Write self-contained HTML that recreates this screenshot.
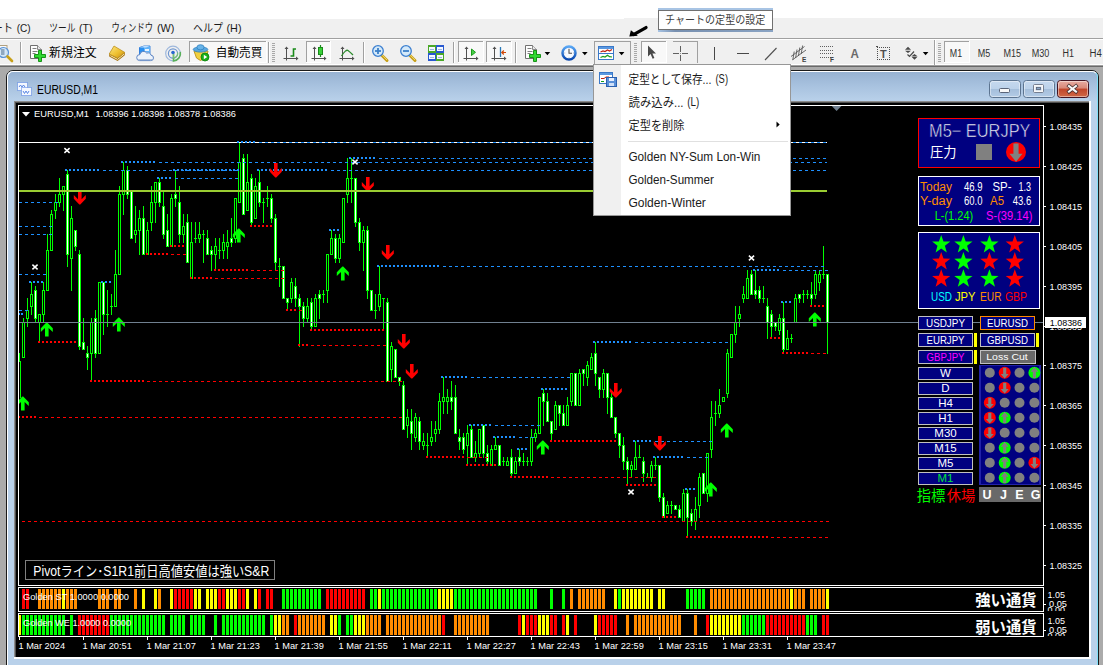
<!DOCTYPE html>
<html><head><meta charset="utf-8"><title>MT4</title>
<style>
html,body{margin:0;padding:0;background:#fff;}
body{width:1103px;height:665px;overflow:hidden;position:relative;font-family:"Liberation Sans",sans-serif;}
.a{position:absolute;}
svg{position:absolute;left:0;top:0;overflow:visible;}
.t{position:absolute;white-space:nowrap;line-height:1;}
</style></head>
<body>
<div class="a" style="left:0;top:19px;width:1103px;height:19px;background:#f0f0f0"></div>
<div class="a" style="left:624px;top:18px;width:479px;height:1px;background:#f0f0f0"></div>
<div class="a" style="left:0;top:38px;width:1103px;height:1px;background:#a0a0a0"></div>
<div class="a" style="left:0;top:39px;width:1103px;height:1px;background:#fff"></div>
<div class="a" style="left:0;top:40px;width:1103px;height:24px;background:#f0f0f0"></div>
<div class="a" style="left:0;top:64px;width:1103px;height:1px;background:#fff"></div>
<div class="a" style="left:0;top:65px;width:1103px;height:1px;background:#a0a0a0"></div>
<div class="a" style="left:0;top:66px;width:1103px;height:1px;background:#696969"></div>
<div class="a" style="left:0;top:67px;width:1103px;height:598px;background:#ababab"></div>
<div class="a" style="left:6px;top:70px;width:1093px;height:610px;box-sizing:border-box;border:1px solid #1a1a1a;border-radius:7px 7px 0 0;background:#b9d1ea"></div>
<div class="a" style="left:7px;top:71px;width:1091px;height:608px;box-sizing:border-box;border:1px solid #fff;border-right-color:#7fe0f8;border-radius:6px 6px 0 0;background:linear-gradient(#97b2d2 0px,#a8c2df 14px,#b9d1ea 29px,#b9d1ea 100%)"></div>
<div class="a" style="left:14px;top:101px;width:1077px;height:558px;background:#fff"></div>
<div class="a" style="left:14px;top:101px;width:1075px;height:556px;background:#8c8c8c"></div>
<div class="a" style="left:15px;top:102px;width:1074px;height:555px;background:#505050"></div>
<div class="a" style="left:16px;top:103px;width:1073px;height:554px;background:#000"></div>
<svg width="1103" height="665" viewBox="0 0 1103 665" font-family="Liberation Sans, sans-serif" shape-rendering="crispEdges"><rect x="18" y="105" width="1026" height="1" fill="#fff"/>
<rect x="18" y="585" width="1026" height="1" fill="#fff"/>
<rect x="18" y="105" width="1" height="481" fill="#fff"/>
<rect x="1043" y="105" width="1" height="481" fill="#fff"/>
<rect x="18" y="587" width="1026" height="1" fill="#fff"/>
<rect x="18" y="611" width="1026" height="1" fill="#fff"/>
<rect x="18" y="587" width="1" height="25" fill="#fff"/>
<rect x="1043" y="587" width="1" height="25" fill="#fff"/>
<rect x="18" y="613" width="1026" height="1" fill="#fff"/>
<rect x="18" y="636" width="1026" height="1" fill="#fff"/>
<rect x="18" y="613" width="1" height="24" fill="#fff"/>
<rect x="1043" y="613" width="1" height="24" fill="#fff"/>
<rect x="1044" y="126" width="2" height="1" fill="#fff"/>
<text x="1049.5" y="129.8" font-size="9.4" fill="#fff" textLength="32.6" lengthAdjust="spacingAndGlyphs">1.08435</text>
<rect x="1044" y="166" width="2" height="1" fill="#fff"/>
<text x="1049.5" y="169.8" font-size="9.4" fill="#fff" textLength="32.6" lengthAdjust="spacingAndGlyphs">1.08425</text>
<rect x="1044" y="206" width="2" height="1" fill="#fff"/>
<text x="1049.5" y="209.8" font-size="9.4" fill="#fff" textLength="32.6" lengthAdjust="spacingAndGlyphs">1.08415</text>
<rect x="1044" y="246" width="2" height="1" fill="#fff"/>
<text x="1049.5" y="249.8" font-size="9.4" fill="#fff" textLength="32.6" lengthAdjust="spacingAndGlyphs">1.08405</text>
<rect x="1044" y="286" width="2" height="1" fill="#fff"/>
<text x="1049.5" y="289.8" font-size="9.4" fill="#fff" textLength="32.6" lengthAdjust="spacingAndGlyphs">1.08395</text>
<rect x="1044" y="326" width="2" height="1" fill="#fff"/>
<text x="1049.5" y="329.8" font-size="9.4" fill="#fff" textLength="32.6" lengthAdjust="spacingAndGlyphs">1.08385</text>
<rect x="1044" y="365" width="2" height="1" fill="#fff"/>
<text x="1049.5" y="368.8" font-size="9.4" fill="#fff" textLength="32.6" lengthAdjust="spacingAndGlyphs">1.08375</text>
<rect x="1044" y="405" width="2" height="1" fill="#fff"/>
<text x="1049.5" y="408.8" font-size="9.4" fill="#fff" textLength="32.6" lengthAdjust="spacingAndGlyphs">1.08365</text>
<rect x="1044" y="445" width="2" height="1" fill="#fff"/>
<text x="1049.5" y="448.8" font-size="9.4" fill="#fff" textLength="32.6" lengthAdjust="spacingAndGlyphs">1.08355</text>
<rect x="1044" y="485" width="2" height="1" fill="#fff"/>
<text x="1049.5" y="488.8" font-size="9.4" fill="#fff" textLength="32.6" lengthAdjust="spacingAndGlyphs">1.08345</text>
<rect x="1044" y="525" width="2" height="1" fill="#fff"/>
<text x="1049.5" y="528.8" font-size="9.4" fill="#fff" textLength="32.6" lengthAdjust="spacingAndGlyphs">1.08335</text>
<rect x="1044" y="565" width="2" height="1" fill="#fff"/>
<text x="1049.5" y="568.8" font-size="9.4" fill="#fff" textLength="32.6" lengthAdjust="spacingAndGlyphs">1.08325</text>
<clipPath id="cs1"><rect x="1044" y="588" width="44" height="23"/></clipPath><clipPath id="cs2"><rect x="1044" y="613" width="44" height="23"/></clipPath>
<rect x="1044" y="604" width="2" height="1" fill="#fff"/>
<text x="1047.5" y="598" font-size="9" fill="#fff" textLength="17.5" lengthAdjust="spacingAndGlyphs">1.05</text>
<text x="1049" y="607" font-size="9" fill="#fff" textLength="18" lengthAdjust="spacingAndGlyphs">0.05</text>
<text x="1047.5" y="613" font-size="9" fill="#fff" textLength="17.5" lengthAdjust="spacingAndGlyphs" clip-path="url(#cs1)">0.00</text>
<rect x="1044" y="630" width="2" height="1" fill="#fff"/>
<text x="1047.5" y="624" font-size="9" fill="#fff" textLength="17.5" lengthAdjust="spacingAndGlyphs">1.05</text>
<text x="1049" y="633" font-size="9" fill="#fff" textLength="18" lengthAdjust="spacingAndGlyphs">0.05</text>
<text x="1047.5" y="639" font-size="9" fill="#fff" textLength="17.5" lengthAdjust="spacingAndGlyphs" clip-path="url(#cs2)">0.00</text>
<rect x="19" y="637" width="1" height="3" fill="#fff"/>
<text x="18.5" y="649" font-size="9.4" fill="#fff" textLength="46.5" lengthAdjust="spacingAndGlyphs">1 Mar 2024</text>
<rect x="83" y="637" width="1" height="3" fill="#fff"/>
<text x="82.5" y="649" font-size="9.4" fill="#fff" textLength="49.3" lengthAdjust="spacingAndGlyphs">1 Mar 20:51</text>
<rect x="147" y="637" width="1" height="3" fill="#fff"/>
<text x="146.5" y="649" font-size="9.4" fill="#fff" textLength="49.3" lengthAdjust="spacingAndGlyphs">1 Mar 21:07</text>
<rect x="211" y="637" width="1" height="3" fill="#fff"/>
<text x="210.5" y="649" font-size="9.4" fill="#fff" textLength="49.3" lengthAdjust="spacingAndGlyphs">1 Mar 21:23</text>
<rect x="275" y="637" width="1" height="3" fill="#fff"/>
<text x="274.5" y="649" font-size="9.4" fill="#fff" textLength="49.3" lengthAdjust="spacingAndGlyphs">1 Mar 21:39</text>
<rect x="339" y="637" width="1" height="3" fill="#fff"/>
<text x="338.5" y="649" font-size="9.4" fill="#fff" textLength="49.3" lengthAdjust="spacingAndGlyphs">1 Mar 21:55</text>
<rect x="403" y="637" width="1" height="3" fill="#fff"/>
<text x="402.5" y="649" font-size="9.4" fill="#fff" textLength="49.3" lengthAdjust="spacingAndGlyphs">1 Mar 22:11</text>
<rect x="467" y="637" width="1" height="3" fill="#fff"/>
<text x="466.5" y="649" font-size="9.4" fill="#fff" textLength="49.3" lengthAdjust="spacingAndGlyphs">1 Mar 22:27</text>
<rect x="531" y="637" width="1" height="3" fill="#fff"/>
<text x="530.5" y="649" font-size="9.4" fill="#fff" textLength="49.3" lengthAdjust="spacingAndGlyphs">1 Mar 22:43</text>
<rect x="595" y="637" width="1" height="3" fill="#fff"/>
<text x="594.5" y="649" font-size="9.4" fill="#fff" textLength="49.3" lengthAdjust="spacingAndGlyphs">1 Mar 22:59</text>
<rect x="659" y="637" width="1" height="3" fill="#fff"/>
<text x="658.5" y="649" font-size="9.4" fill="#fff" textLength="49.3" lengthAdjust="spacingAndGlyphs">1 Mar 23:15</text>
<rect x="723" y="637" width="1" height="3" fill="#fff"/>
<text x="722.5" y="649" font-size="9.4" fill="#fff" textLength="49.3" lengthAdjust="spacingAndGlyphs">1 Mar 23:31</text>
<rect x="787" y="637" width="1" height="3" fill="#fff"/>
<text x="786.5" y="649" font-size="9.4" fill="#fff" textLength="49.3" lengthAdjust="spacingAndGlyphs">1 Mar 23:47</text>
<rect x="23" y="318" width="1" height="40" fill="#00ff00"/>
<rect x="22" y="322" width="3" height="36" fill="#00ff00"/>
<rect x="23" y="323" width="1" height="34" fill="#000"/>
<rect x="27" y="298" width="1" height="29" fill="#00ff00"/>
<rect x="26" y="310" width="3" height="9" fill="#00ff00"/>
<rect x="27" y="311" width="1" height="7" fill="#000"/>
<rect x="31" y="282" width="1" height="33" fill="#00ff00"/>
<rect x="30" y="294" width="3" height="13" fill="#00ff00"/>
<rect x="31" y="295" width="1" height="11" fill="#000"/>
<rect x="35" y="286" width="1" height="37" fill="#00ff00"/>
<rect x="34" y="290" width="3" height="29" fill="#00ff00"/>
<rect x="35" y="291" width="1" height="27" fill="#fff"/>
<rect x="39" y="314" width="1" height="29" fill="#00ff00"/>
<rect x="38" y="314" width="3" height="9" fill="#00ff00"/>
<rect x="39" y="315" width="1" height="7" fill="#000"/>
<rect x="43" y="282" width="1" height="41" fill="#00ff00"/>
<rect x="42" y="290" width="3" height="25" fill="#00ff00"/>
<rect x="43" y="291" width="1" height="23" fill="#000"/>
<rect x="47" y="234" width="1" height="57" fill="#00ff00"/>
<rect x="46" y="250" width="3" height="41" fill="#00ff00"/>
<rect x="47" y="251" width="1" height="39" fill="#000"/>
<rect x="51" y="210" width="1" height="41" fill="#00ff00"/>
<rect x="50" y="214" width="3" height="37" fill="#00ff00"/>
<rect x="51" y="215" width="1" height="35" fill="#000"/>
<rect x="55" y="194" width="1" height="25" fill="#00ff00"/>
<rect x="54" y="202" width="3" height="9" fill="#00ff00"/>
<rect x="55" y="203" width="1" height="7" fill="#000"/>
<rect x="59" y="178" width="1" height="29" fill="#00ff00"/>
<rect x="58" y="194" width="3" height="9" fill="#00ff00"/>
<rect x="59" y="195" width="1" height="7" fill="#000"/>
<rect x="63" y="186" width="1" height="25" fill="#00ff00"/>
<rect x="62" y="186" width="3" height="9" fill="#00ff00"/>
<rect x="63" y="187" width="1" height="7" fill="#000"/>
<rect x="67" y="170" width="1" height="97" fill="#00ff00"/>
<rect x="66" y="174" width="3" height="81" fill="#00ff00"/>
<rect x="67" y="175" width="1" height="79" fill="#fff"/>
<rect x="71" y="206" width="1" height="85" fill="#00ff00"/>
<rect x="70" y="218" width="3" height="41" fill="#00ff00"/>
<rect x="71" y="219" width="1" height="39" fill="#000"/>
<rect x="75" y="230" width="1" height="21" fill="#00ff00"/>
<rect x="74" y="230" width="3" height="17" fill="#00ff00"/>
<rect x="75" y="231" width="1" height="15" fill="#fff"/>
<rect x="79" y="250" width="1" height="100" fill="#00ff00"/>
<rect x="78" y="254" width="3" height="93" fill="#00ff00"/>
<rect x="79" y="255" width="1" height="91" fill="#fff"/>
<rect x="83" y="318" width="1" height="32" fill="#00ff00"/>
<rect x="82" y="342" width="3" height="8" fill="#00ff00"/>
<rect x="83" y="343" width="1" height="6" fill="#fff"/>
<rect x="87" y="346" width="1" height="24" fill="#00ff00"/>
<rect x="86" y="353" width="3" height="5" fill="#00ff00"/>
<rect x="87" y="354" width="1" height="3" fill="#fff"/>
<rect x="91" y="318" width="1" height="64" fill="#00ff00"/>
<rect x="90" y="322" width="3" height="32" fill="#00ff00"/>
<rect x="91" y="323" width="1" height="30" fill="#000"/>
<rect x="95" y="310" width="1" height="48" fill="#00ff00"/>
<rect x="94" y="318" width="3" height="36" fill="#00ff00"/>
<rect x="95" y="319" width="1" height="34" fill="#fff"/>
<rect x="99" y="282" width="1" height="72" fill="#00ff00"/>
<rect x="98" y="282" width="3" height="72" fill="#00ff00"/>
<rect x="99" y="283" width="1" height="70" fill="#000"/>
<rect x="103" y="282" width="1" height="53" fill="#00ff00"/>
<rect x="102" y="282" width="3" height="33" fill="#00ff00"/>
<rect x="103" y="283" width="1" height="31" fill="#fff"/>
<rect x="107" y="290" width="1" height="37" fill="#00ff00"/>
<rect x="106" y="314" width="3" height="1" fill="#00ff00"/>
<rect x="111" y="294" width="1" height="21" fill="#00ff00"/>
<rect x="110" y="306" width="3" height="1" fill="#00ff00"/>
<rect x="115" y="250" width="1" height="57" fill="#00ff00"/>
<rect x="114" y="274" width="3" height="33" fill="#00ff00"/>
<rect x="115" y="275" width="1" height="31" fill="#000"/>
<rect x="119" y="186" width="1" height="89" fill="#00ff00"/>
<rect x="118" y="194" width="3" height="81" fill="#00ff00"/>
<rect x="119" y="195" width="1" height="79" fill="#000"/>
<rect x="123" y="162" width="1" height="53" fill="#00ff00"/>
<rect x="122" y="170" width="3" height="25" fill="#00ff00"/>
<rect x="123" y="171" width="1" height="23" fill="#000"/>
<rect x="127" y="166" width="1" height="33" fill="#00ff00"/>
<rect x="126" y="170" width="3" height="25" fill="#00ff00"/>
<rect x="127" y="171" width="1" height="23" fill="#fff"/>
<rect x="131" y="190" width="1" height="49" fill="#00ff00"/>
<rect x="130" y="190" width="3" height="49" fill="#00ff00"/>
<rect x="131" y="191" width="1" height="47" fill="#fff"/>
<rect x="135" y="206" width="1" height="37" fill="#00ff00"/>
<rect x="134" y="230" width="3" height="5" fill="#00ff00"/>
<rect x="135" y="231" width="1" height="3" fill="#000"/>
<rect x="139" y="210" width="1" height="45" fill="#00ff00"/>
<rect x="138" y="218" width="3" height="13" fill="#00ff00"/>
<rect x="139" y="219" width="1" height="11" fill="#000"/>
<rect x="143" y="206" width="1" height="49" fill="#00ff00"/>
<rect x="142" y="218" width="3" height="37" fill="#00ff00"/>
<rect x="143" y="219" width="1" height="35" fill="#fff"/>
<rect x="147" y="222" width="1" height="33" fill="#00ff00"/>
<rect x="146" y="230" width="3" height="25" fill="#00ff00"/>
<rect x="147" y="231" width="1" height="23" fill="#000"/>
<rect x="151" y="186" width="1" height="45" fill="#00ff00"/>
<rect x="150" y="202" width="3" height="21" fill="#00ff00"/>
<rect x="151" y="203" width="1" height="19" fill="#000"/>
<rect x="155" y="182" width="1" height="41" fill="#00ff00"/>
<rect x="154" y="182" width="3" height="21" fill="#00ff00"/>
<rect x="155" y="183" width="1" height="19" fill="#000"/>
<rect x="159" y="178" width="1" height="29" fill="#00ff00"/>
<rect x="158" y="182" width="3" height="21" fill="#00ff00"/>
<rect x="159" y="183" width="1" height="19" fill="#fff"/>
<rect x="163" y="190" width="1" height="49" fill="#00ff00"/>
<rect x="162" y="206" width="3" height="29" fill="#00ff00"/>
<rect x="163" y="207" width="1" height="27" fill="#fff"/>
<rect x="167" y="214" width="1" height="33" fill="#00ff00"/>
<rect x="166" y="230" width="3" height="17" fill="#00ff00"/>
<rect x="167" y="231" width="1" height="15" fill="#fff"/>
<rect x="171" y="194" width="1" height="53" fill="#00ff00"/>
<rect x="170" y="198" width="3" height="49" fill="#00ff00"/>
<rect x="171" y="199" width="1" height="47" fill="#000"/>
<rect x="175" y="170" width="1" height="37" fill="#00ff00"/>
<rect x="174" y="194" width="3" height="5" fill="#00ff00"/>
<rect x="175" y="195" width="1" height="3" fill="#fff"/>
<rect x="179" y="186" width="1" height="57" fill="#00ff00"/>
<rect x="178" y="202" width="3" height="33" fill="#00ff00"/>
<rect x="179" y="203" width="1" height="31" fill="#fff"/>
<rect x="183" y="214" width="1" height="29" fill="#00ff00"/>
<rect x="182" y="226" width="3" height="9" fill="#00ff00"/>
<rect x="183" y="227" width="1" height="7" fill="#000"/>
<rect x="187" y="214" width="1" height="49" fill="#00ff00"/>
<rect x="186" y="222" width="3" height="41" fill="#00ff00"/>
<rect x="187" y="223" width="1" height="39" fill="#fff"/>
<rect x="191" y="222" width="1" height="57" fill="#00ff00"/>
<rect x="190" y="242" width="3" height="37" fill="#00ff00"/>
<rect x="191" y="243" width="1" height="35" fill="#000"/>
<rect x="195" y="222" width="1" height="21" fill="#00ff00"/>
<rect x="194" y="238" width="3" height="1" fill="#00ff00"/>
<rect x="199" y="222" width="1" height="21" fill="#00ff00"/>
<rect x="198" y="234" width="3" height="5" fill="#00ff00"/>
<rect x="199" y="235" width="1" height="3" fill="#000"/>
<rect x="203" y="230" width="1" height="33" fill="#00ff00"/>
<rect x="202" y="234" width="3" height="1" fill="#00ff00"/>
<rect x="207" y="230" width="1" height="25" fill="#00ff00"/>
<rect x="206" y="238" width="3" height="17" fill="#00ff00"/>
<rect x="207" y="239" width="1" height="15" fill="#fff"/>
<rect x="211" y="246" width="1" height="25" fill="#00ff00"/>
<rect x="210" y="250" width="3" height="5" fill="#00ff00"/>
<rect x="211" y="251" width="1" height="3" fill="#fff"/>
<rect x="215" y="238" width="1" height="33" fill="#00ff00"/>
<rect x="214" y="246" width="3" height="9" fill="#00ff00"/>
<rect x="215" y="247" width="1" height="7" fill="#000"/>
<rect x="219" y="238" width="1" height="21" fill="#00ff00"/>
<rect x="218" y="250" width="3" height="1" fill="#00ff00"/>
<rect x="223" y="234" width="1" height="25" fill="#00ff00"/>
<rect x="222" y="242" width="3" height="9" fill="#00ff00"/>
<rect x="223" y="243" width="1" height="7" fill="#000"/>
<rect x="227" y="230" width="1" height="29" fill="#00ff00"/>
<rect x="226" y="242" width="3" height="5" fill="#00ff00"/>
<rect x="227" y="243" width="1" height="3" fill="#000"/>
<rect x="231" y="218" width="1" height="29" fill="#00ff00"/>
<rect x="230" y="238" width="3" height="5" fill="#00ff00"/>
<rect x="231" y="239" width="1" height="3" fill="#fff"/>
<rect x="235" y="198" width="1" height="45" fill="#00ff00"/>
<rect x="234" y="198" width="3" height="41" fill="#00ff00"/>
<rect x="235" y="199" width="1" height="39" fill="#000"/>
<rect x="239" y="142" width="1" height="61" fill="#00ff00"/>
<rect x="238" y="162" width="3" height="41" fill="#00ff00"/>
<rect x="239" y="163" width="1" height="39" fill="#000"/>
<rect x="243" y="154" width="1" height="61" fill="#00ff00"/>
<rect x="242" y="158" width="3" height="57" fill="#00ff00"/>
<rect x="243" y="159" width="1" height="55" fill="#fff"/>
<rect x="247" y="154" width="1" height="57" fill="#00ff00"/>
<rect x="246" y="182" width="3" height="29" fill="#00ff00"/>
<rect x="247" y="183" width="1" height="27" fill="#000"/>
<rect x="251" y="174" width="1" height="53" fill="#00ff00"/>
<rect x="250" y="178" width="3" height="45" fill="#00ff00"/>
<rect x="251" y="179" width="1" height="43" fill="#fff"/>
<rect x="255" y="178" width="1" height="41" fill="#00ff00"/>
<rect x="254" y="186" width="3" height="33" fill="#00ff00"/>
<rect x="255" y="187" width="1" height="31" fill="#000"/>
<rect x="259" y="170" width="1" height="37" fill="#00ff00"/>
<rect x="258" y="182" width="3" height="21" fill="#00ff00"/>
<rect x="259" y="183" width="1" height="19" fill="#fff"/>
<rect x="263" y="198" width="1" height="25" fill="#00ff00"/>
<rect x="262" y="202" width="3" height="1" fill="#00ff00"/>
<rect x="267" y="186" width="1" height="21" fill="#00ff00"/>
<rect x="266" y="198" width="3" height="1" fill="#00ff00"/>
<rect x="271" y="194" width="1" height="29" fill="#00ff00"/>
<rect x="270" y="198" width="3" height="21" fill="#00ff00"/>
<rect x="271" y="199" width="1" height="19" fill="#fff"/>
<rect x="275" y="214" width="1" height="57" fill="#00ff00"/>
<rect x="274" y="218" width="3" height="45" fill="#00ff00"/>
<rect x="275" y="219" width="1" height="43" fill="#fff"/>
<rect x="279" y="258" width="1" height="29" fill="#00ff00"/>
<rect x="278" y="266" width="3" height="1" fill="#00ff00"/>
<rect x="283" y="266" width="1" height="33" fill="#00ff00"/>
<rect x="282" y="266" width="3" height="33" fill="#00ff00"/>
<rect x="283" y="267" width="1" height="31" fill="#fff"/>
<rect x="287" y="298" width="1" height="13" fill="#00ff00"/>
<rect x="286" y="298" width="3" height="5" fill="#00ff00"/>
<rect x="287" y="299" width="1" height="3" fill="#fff"/>
<rect x="291" y="278" width="1" height="25" fill="#00ff00"/>
<rect x="290" y="282" width="3" height="17" fill="#00ff00"/>
<rect x="291" y="283" width="1" height="15" fill="#000"/>
<rect x="295" y="278" width="1" height="29" fill="#00ff00"/>
<rect x="294" y="286" width="3" height="13" fill="#00ff00"/>
<rect x="295" y="287" width="1" height="11" fill="#fff"/>
<rect x="299" y="294" width="1" height="53" fill="#00ff00"/>
<rect x="298" y="298" width="3" height="9" fill="#00ff00"/>
<rect x="299" y="299" width="1" height="7" fill="#fff"/>
<rect x="303" y="302" width="1" height="25" fill="#00ff00"/>
<rect x="302" y="306" width="3" height="13" fill="#00ff00"/>
<rect x="303" y="307" width="1" height="11" fill="#fff"/>
<rect x="307" y="298" width="1" height="25" fill="#00ff00"/>
<rect x="306" y="306" width="3" height="13" fill="#00ff00"/>
<rect x="307" y="307" width="1" height="11" fill="#000"/>
<rect x="311" y="298" width="1" height="33" fill="#00ff00"/>
<rect x="310" y="302" width="3" height="25" fill="#00ff00"/>
<rect x="311" y="303" width="1" height="23" fill="#fff"/>
<rect x="315" y="294" width="1" height="33" fill="#00ff00"/>
<rect x="314" y="298" width="3" height="29" fill="#00ff00"/>
<rect x="315" y="299" width="1" height="27" fill="#000"/>
<rect x="319" y="290" width="1" height="29" fill="#00ff00"/>
<rect x="318" y="294" width="3" height="5" fill="#00ff00"/>
<rect x="319" y="295" width="1" height="3" fill="#fff"/>
<rect x="323" y="290" width="1" height="13" fill="#00ff00"/>
<rect x="322" y="294" width="3" height="1" fill="#00ff00"/>
<rect x="327" y="254" width="1" height="49" fill="#00ff00"/>
<rect x="326" y="254" width="3" height="37" fill="#00ff00"/>
<rect x="327" y="255" width="1" height="35" fill="#000"/>
<rect x="331" y="230" width="1" height="25" fill="#00ff00"/>
<rect x="330" y="238" width="3" height="17" fill="#00ff00"/>
<rect x="331" y="239" width="1" height="15" fill="#000"/>
<rect x="335" y="234" width="1" height="29" fill="#00ff00"/>
<rect x="334" y="238" width="3" height="21" fill="#00ff00"/>
<rect x="335" y="239" width="1" height="19" fill="#fff"/>
<rect x="339" y="234" width="1" height="29" fill="#00ff00"/>
<rect x="338" y="238" width="3" height="21" fill="#00ff00"/>
<rect x="339" y="239" width="1" height="19" fill="#000"/>
<rect x="343" y="198" width="1" height="45" fill="#00ff00"/>
<rect x="342" y="198" width="3" height="45" fill="#00ff00"/>
<rect x="343" y="199" width="1" height="43" fill="#000"/>
<rect x="347" y="158" width="1" height="45" fill="#00ff00"/>
<rect x="346" y="178" width="3" height="17" fill="#00ff00"/>
<rect x="347" y="179" width="1" height="15" fill="#000"/>
<rect x="351" y="158" width="1" height="45" fill="#00ff00"/>
<rect x="350" y="178" width="3" height="1" fill="#00ff00"/>
<rect x="355" y="178" width="1" height="49" fill="#00ff00"/>
<rect x="354" y="178" width="3" height="45" fill="#00ff00"/>
<rect x="355" y="179" width="1" height="43" fill="#fff"/>
<rect x="359" y="218" width="1" height="33" fill="#00ff00"/>
<rect x="358" y="222" width="3" height="21" fill="#00ff00"/>
<rect x="359" y="223" width="1" height="19" fill="#fff"/>
<rect x="363" y="226" width="1" height="45" fill="#00ff00"/>
<rect x="362" y="230" width="3" height="13" fill="#00ff00"/>
<rect x="363" y="231" width="1" height="11" fill="#000"/>
<rect x="367" y="226" width="1" height="73" fill="#00ff00"/>
<rect x="366" y="230" width="3" height="61" fill="#00ff00"/>
<rect x="367" y="231" width="1" height="59" fill="#fff"/>
<rect x="371" y="290" width="1" height="21" fill="#00ff00"/>
<rect x="370" y="290" width="3" height="21" fill="#00ff00"/>
<rect x="371" y="291" width="1" height="19" fill="#fff"/>
<rect x="375" y="294" width="1" height="25" fill="#00ff00"/>
<rect x="374" y="310" width="3" height="1" fill="#00ff00"/>
<rect x="379" y="266" width="1" height="45" fill="#00ff00"/>
<rect x="378" y="294" width="3" height="13" fill="#00ff00"/>
<rect x="379" y="295" width="1" height="11" fill="#000"/>
<rect x="383" y="298" width="1" height="33" fill="#00ff00"/>
<rect x="382" y="298" width="3" height="1" fill="#00ff00"/>
<rect x="387" y="298" width="1" height="84" fill="#00ff00"/>
<rect x="386" y="302" width="3" height="80" fill="#00ff00"/>
<rect x="387" y="303" width="1" height="78" fill="#fff"/>
<rect x="391" y="342" width="1" height="40" fill="#00ff00"/>
<rect x="390" y="346" width="3" height="24" fill="#00ff00"/>
<rect x="391" y="347" width="1" height="22" fill="#000"/>
<rect x="395" y="349" width="1" height="29" fill="#00ff00"/>
<rect x="394" y="349" width="3" height="29" fill="#00ff00"/>
<rect x="395" y="350" width="1" height="27" fill="#fff"/>
<rect x="399" y="377" width="1" height="9" fill="#00ff00"/>
<rect x="398" y="377" width="3" height="5" fill="#00ff00"/>
<rect x="399" y="378" width="1" height="3" fill="#fff"/>
<rect x="403" y="381" width="1" height="49" fill="#00ff00"/>
<rect x="402" y="385" width="3" height="45" fill="#00ff00"/>
<rect x="403" y="386" width="1" height="43" fill="#fff"/>
<rect x="407" y="409" width="1" height="29" fill="#00ff00"/>
<rect x="406" y="417" width="3" height="9" fill="#00ff00"/>
<rect x="407" y="418" width="1" height="7" fill="#000"/>
<rect x="411" y="409" width="1" height="41" fill="#00ff00"/>
<rect x="410" y="421" width="3" height="13" fill="#00ff00"/>
<rect x="411" y="422" width="1" height="11" fill="#fff"/>
<rect x="415" y="413" width="1" height="29" fill="#00ff00"/>
<rect x="414" y="417" width="3" height="21" fill="#00ff00"/>
<rect x="415" y="418" width="1" height="19" fill="#000"/>
<rect x="419" y="417" width="1" height="33" fill="#00ff00"/>
<rect x="418" y="421" width="3" height="21" fill="#00ff00"/>
<rect x="419" y="422" width="1" height="19" fill="#fff"/>
<rect x="423" y="433" width="1" height="17" fill="#00ff00"/>
<rect x="422" y="441" width="3" height="5" fill="#00ff00"/>
<rect x="423" y="442" width="1" height="3" fill="#000"/>
<rect x="427" y="433" width="1" height="25" fill="#00ff00"/>
<rect x="426" y="445" width="3" height="1" fill="#00ff00"/>
<rect x="431" y="421" width="1" height="25" fill="#00ff00"/>
<rect x="430" y="437" width="3" height="5" fill="#00ff00"/>
<rect x="431" y="438" width="1" height="3" fill="#000"/>
<rect x="435" y="421" width="1" height="21" fill="#00ff00"/>
<rect x="434" y="429" width="3" height="5" fill="#00ff00"/>
<rect x="435" y="430" width="1" height="3" fill="#000"/>
<rect x="439" y="393" width="1" height="41" fill="#00ff00"/>
<rect x="438" y="401" width="3" height="29" fill="#00ff00"/>
<rect x="439" y="402" width="1" height="27" fill="#000"/>
<rect x="443" y="377" width="1" height="37" fill="#00ff00"/>
<rect x="442" y="397" width="3" height="5" fill="#00ff00"/>
<rect x="443" y="398" width="1" height="3" fill="#000"/>
<rect x="447" y="389" width="1" height="25" fill="#00ff00"/>
<rect x="446" y="397" width="3" height="5" fill="#00ff00"/>
<rect x="447" y="398" width="1" height="3" fill="#000"/>
<rect x="451" y="381" width="1" height="29" fill="#00ff00"/>
<rect x="450" y="397" width="3" height="5" fill="#00ff00"/>
<rect x="451" y="398" width="1" height="3" fill="#fff"/>
<rect x="455" y="385" width="1" height="49" fill="#00ff00"/>
<rect x="454" y="397" width="3" height="37" fill="#00ff00"/>
<rect x="455" y="398" width="1" height="35" fill="#fff"/>
<rect x="459" y="429" width="1" height="21" fill="#00ff00"/>
<rect x="458" y="437" width="3" height="5" fill="#00ff00"/>
<rect x="459" y="438" width="1" height="3" fill="#fff"/>
<rect x="463" y="433" width="1" height="21" fill="#00ff00"/>
<rect x="462" y="437" width="3" height="13" fill="#00ff00"/>
<rect x="463" y="438" width="1" height="11" fill="#fff"/>
<rect x="467" y="425" width="1" height="41" fill="#00ff00"/>
<rect x="466" y="433" width="3" height="13" fill="#00ff00"/>
<rect x="467" y="434" width="1" height="11" fill="#000"/>
<rect x="471" y="425" width="1" height="33" fill="#00ff00"/>
<rect x="470" y="429" width="3" height="29" fill="#00ff00"/>
<rect x="471" y="430" width="1" height="27" fill="#fff"/>
<rect x="475" y="441" width="1" height="21" fill="#00ff00"/>
<rect x="474" y="453" width="3" height="5" fill="#00ff00"/>
<rect x="475" y="454" width="1" height="3" fill="#000"/>
<rect x="479" y="429" width="1" height="29" fill="#00ff00"/>
<rect x="478" y="429" width="3" height="25" fill="#00ff00"/>
<rect x="479" y="430" width="1" height="23" fill="#000"/>
<rect x="483" y="425" width="1" height="33" fill="#00ff00"/>
<rect x="482" y="425" width="3" height="29" fill="#00ff00"/>
<rect x="483" y="426" width="1" height="27" fill="#fff"/>
<rect x="487" y="445" width="1" height="21" fill="#00ff00"/>
<rect x="486" y="453" width="3" height="9" fill="#00ff00"/>
<rect x="487" y="454" width="1" height="7" fill="#fff"/>
<rect x="491" y="445" width="1" height="21" fill="#00ff00"/>
<rect x="490" y="449" width="3" height="17" fill="#00ff00"/>
<rect x="491" y="450" width="1" height="15" fill="#000"/>
<rect x="495" y="437" width="1" height="13" fill="#00ff00"/>
<rect x="494" y="445" width="3" height="5" fill="#00ff00"/>
<rect x="495" y="446" width="1" height="3" fill="#000"/>
<rect x="499" y="445" width="1" height="21" fill="#00ff00"/>
<rect x="498" y="445" width="3" height="21" fill="#00ff00"/>
<rect x="499" y="446" width="1" height="19" fill="#fff"/>
<rect x="503" y="457" width="1" height="9" fill="#00ff00"/>
<rect x="502" y="461" width="3" height="1" fill="#00ff00"/>
<rect x="507" y="457" width="1" height="9" fill="#00ff00"/>
<rect x="506" y="461" width="3" height="5" fill="#00ff00"/>
<rect x="507" y="462" width="1" height="3" fill="#000"/>
<rect x="511" y="449" width="1" height="29" fill="#00ff00"/>
<rect x="510" y="457" width="3" height="17" fill="#00ff00"/>
<rect x="511" y="458" width="1" height="15" fill="#fff"/>
<rect x="515" y="457" width="1" height="17" fill="#00ff00"/>
<rect x="514" y="461" width="3" height="13" fill="#00ff00"/>
<rect x="515" y="462" width="1" height="11" fill="#000"/>
<rect x="519" y="449" width="1" height="17" fill="#00ff00"/>
<rect x="518" y="457" width="3" height="5" fill="#00ff00"/>
<rect x="519" y="458" width="1" height="3" fill="#fff"/>
<rect x="523" y="453" width="1" height="13" fill="#00ff00"/>
<rect x="522" y="461" width="3" height="1" fill="#00ff00"/>
<rect x="527" y="457" width="1" height="9" fill="#00ff00"/>
<rect x="526" y="461" width="3" height="1" fill="#00ff00"/>
<rect x="531" y="429" width="1" height="37" fill="#00ff00"/>
<rect x="530" y="437" width="3" height="25" fill="#00ff00"/>
<rect x="531" y="438" width="1" height="23" fill="#000"/>
<rect x="535" y="429" width="1" height="13" fill="#00ff00"/>
<rect x="534" y="433" width="3" height="5" fill="#00ff00"/>
<rect x="535" y="434" width="1" height="3" fill="#000"/>
<rect x="539" y="397" width="1" height="37" fill="#00ff00"/>
<rect x="538" y="397" width="3" height="37" fill="#00ff00"/>
<rect x="539" y="398" width="1" height="35" fill="#000"/>
<rect x="543" y="389" width="1" height="37" fill="#00ff00"/>
<rect x="542" y="393" width="3" height="9" fill="#00ff00"/>
<rect x="543" y="394" width="1" height="7" fill="#fff"/>
<rect x="547" y="393" width="1" height="29" fill="#00ff00"/>
<rect x="546" y="401" width="3" height="21" fill="#00ff00"/>
<rect x="547" y="402" width="1" height="19" fill="#fff"/>
<rect x="551" y="421" width="1" height="21" fill="#00ff00"/>
<rect x="550" y="421" width="3" height="13" fill="#00ff00"/>
<rect x="551" y="422" width="1" height="11" fill="#fff"/>
<rect x="555" y="401" width="1" height="29" fill="#00ff00"/>
<rect x="554" y="405" width="3" height="25" fill="#00ff00"/>
<rect x="555" y="406" width="1" height="23" fill="#000"/>
<rect x="559" y="405" width="1" height="21" fill="#00ff00"/>
<rect x="558" y="405" width="3" height="9" fill="#00ff00"/>
<rect x="559" y="406" width="1" height="7" fill="#fff"/>
<rect x="563" y="405" width="1" height="21" fill="#00ff00"/>
<rect x="562" y="413" width="3" height="13" fill="#00ff00"/>
<rect x="563" y="414" width="1" height="11" fill="#fff"/>
<rect x="567" y="397" width="1" height="29" fill="#00ff00"/>
<rect x="566" y="405" width="3" height="21" fill="#00ff00"/>
<rect x="567" y="406" width="1" height="19" fill="#000"/>
<rect x="571" y="373" width="1" height="33" fill="#00ff00"/>
<rect x="570" y="373" width="3" height="29" fill="#00ff00"/>
<rect x="571" y="374" width="1" height="27" fill="#000"/>
<rect x="575" y="373" width="1" height="33" fill="#00ff00"/>
<rect x="574" y="373" width="3" height="33" fill="#00ff00"/>
<rect x="575" y="374" width="1" height="31" fill="#fff"/>
<rect x="579" y="369" width="1" height="37" fill="#00ff00"/>
<rect x="578" y="373" width="3" height="33" fill="#00ff00"/>
<rect x="579" y="374" width="1" height="31" fill="#000"/>
<rect x="583" y="369" width="1" height="17" fill="#00ff00"/>
<rect x="582" y="369" width="3" height="5" fill="#00ff00"/>
<rect x="583" y="370" width="1" height="3" fill="#fff"/>
<rect x="587" y="361" width="1" height="25" fill="#00ff00"/>
<rect x="586" y="365" width="3" height="13" fill="#00ff00"/>
<rect x="587" y="366" width="1" height="11" fill="#000"/>
<rect x="591" y="353" width="1" height="17" fill="#00ff00"/>
<rect x="590" y="357" width="3" height="13" fill="#00ff00"/>
<rect x="591" y="358" width="1" height="11" fill="#000"/>
<rect x="595" y="342" width="1" height="44" fill="#00ff00"/>
<rect x="594" y="353" width="3" height="21" fill="#00ff00"/>
<rect x="595" y="354" width="1" height="19" fill="#fff"/>
<rect x="599" y="377" width="1" height="21" fill="#00ff00"/>
<rect x="598" y="377" width="3" height="13" fill="#00ff00"/>
<rect x="599" y="378" width="1" height="11" fill="#fff"/>
<rect x="603" y="369" width="1" height="29" fill="#00ff00"/>
<rect x="602" y="373" width="3" height="17" fill="#00ff00"/>
<rect x="603" y="374" width="1" height="15" fill="#000"/>
<rect x="607" y="373" width="1" height="41" fill="#00ff00"/>
<rect x="606" y="373" width="3" height="25" fill="#00ff00"/>
<rect x="607" y="374" width="1" height="23" fill="#fff"/>
<rect x="611" y="393" width="1" height="25" fill="#00ff00"/>
<rect x="610" y="397" width="3" height="21" fill="#00ff00"/>
<rect x="611" y="398" width="1" height="19" fill="#fff"/>
<rect x="615" y="417" width="1" height="21" fill="#00ff00"/>
<rect x="614" y="417" width="3" height="17" fill="#00ff00"/>
<rect x="615" y="418" width="1" height="15" fill="#fff"/>
<rect x="619" y="433" width="1" height="25" fill="#00ff00"/>
<rect x="618" y="433" width="3" height="13" fill="#00ff00"/>
<rect x="619" y="434" width="1" height="11" fill="#fff"/>
<rect x="623" y="437" width="1" height="33" fill="#00ff00"/>
<rect x="622" y="445" width="3" height="17" fill="#00ff00"/>
<rect x="623" y="446" width="1" height="15" fill="#fff"/>
<rect x="627" y="457" width="1" height="29" fill="#00ff00"/>
<rect x="626" y="461" width="3" height="9" fill="#00ff00"/>
<rect x="627" y="462" width="1" height="7" fill="#fff"/>
<rect x="631" y="461" width="1" height="17" fill="#00ff00"/>
<rect x="630" y="465" width="3" height="5" fill="#00ff00"/>
<rect x="631" y="466" width="1" height="3" fill="#000"/>
<rect x="635" y="441" width="1" height="29" fill="#00ff00"/>
<rect x="634" y="457" width="3" height="13" fill="#00ff00"/>
<rect x="635" y="458" width="1" height="11" fill="#000"/>
<rect x="639" y="445" width="1" height="13" fill="#00ff00"/>
<rect x="638" y="457" width="3" height="1" fill="#00ff00"/>
<rect x="643" y="457" width="1" height="25" fill="#00ff00"/>
<rect x="642" y="461" width="3" height="13" fill="#00ff00"/>
<rect x="643" y="462" width="1" height="11" fill="#fff"/>
<rect x="647" y="473" width="1" height="5" fill="#00ff00"/>
<rect x="646" y="477" width="3" height="1" fill="#00ff00"/>
<rect x="651" y="461" width="1" height="21" fill="#00ff00"/>
<rect x="650" y="465" width="3" height="13" fill="#00ff00"/>
<rect x="651" y="466" width="1" height="11" fill="#000"/>
<rect x="655" y="457" width="1" height="13" fill="#00ff00"/>
<rect x="654" y="465" width="3" height="1" fill="#00ff00"/>
<rect x="659" y="465" width="1" height="37" fill="#00ff00"/>
<rect x="658" y="465" width="3" height="33" fill="#00ff00"/>
<rect x="659" y="466" width="1" height="31" fill="#fff"/>
<rect x="663" y="493" width="1" height="25" fill="#00ff00"/>
<rect x="662" y="497" width="3" height="21" fill="#00ff00"/>
<rect x="663" y="498" width="1" height="19" fill="#fff"/>
<rect x="667" y="501" width="1" height="13" fill="#00ff00"/>
<rect x="666" y="505" width="3" height="9" fill="#00ff00"/>
<rect x="667" y="506" width="1" height="7" fill="#000"/>
<rect x="671" y="501" width="1" height="13" fill="#00ff00"/>
<rect x="670" y="505" width="3" height="1" fill="#00ff00"/>
<rect x="675" y="505" width="1" height="5" fill="#00ff00"/>
<rect x="674" y="505" width="3" height="5" fill="#00ff00"/>
<rect x="675" y="506" width="1" height="3" fill="#fff"/>
<rect x="679" y="505" width="1" height="13" fill="#00ff00"/>
<rect x="678" y="509" width="3" height="9" fill="#00ff00"/>
<rect x="679" y="510" width="1" height="7" fill="#fff"/>
<rect x="683" y="489" width="1" height="33" fill="#00ff00"/>
<rect x="682" y="493" width="3" height="29" fill="#00ff00"/>
<rect x="683" y="494" width="1" height="27" fill="#000"/>
<rect x="687" y="489" width="1" height="49" fill="#00ff00"/>
<rect x="686" y="493" width="3" height="25" fill="#00ff00"/>
<rect x="687" y="494" width="1" height="23" fill="#fff"/>
<rect x="691" y="509" width="1" height="17" fill="#00ff00"/>
<rect x="690" y="513" width="3" height="9" fill="#00ff00"/>
<rect x="691" y="514" width="1" height="7" fill="#fff"/>
<rect x="695" y="497" width="1" height="33" fill="#00ff00"/>
<rect x="694" y="509" width="3" height="13" fill="#00ff00"/>
<rect x="695" y="510" width="1" height="11" fill="#000"/>
<rect x="699" y="473" width="1" height="45" fill="#00ff00"/>
<rect x="698" y="477" width="3" height="29" fill="#00ff00"/>
<rect x="699" y="478" width="1" height="27" fill="#000"/>
<rect x="703" y="473" width="1" height="21" fill="#00ff00"/>
<rect x="702" y="473" width="3" height="21" fill="#00ff00"/>
<rect x="703" y="474" width="1" height="19" fill="#fff"/>
<rect x="707" y="453" width="1" height="49" fill="#00ff00"/>
<rect x="706" y="453" width="3" height="41" fill="#00ff00"/>
<rect x="707" y="454" width="1" height="39" fill="#000"/>
<rect x="711" y="401" width="1" height="57" fill="#00ff00"/>
<rect x="710" y="417" width="3" height="33" fill="#00ff00"/>
<rect x="711" y="418" width="1" height="31" fill="#000"/>
<rect x="715" y="401" width="1" height="25" fill="#00ff00"/>
<rect x="714" y="413" width="3" height="1" fill="#00ff00"/>
<rect x="719" y="389" width="1" height="29" fill="#00ff00"/>
<rect x="718" y="405" width="3" height="9" fill="#00ff00"/>
<rect x="719" y="406" width="1" height="7" fill="#000"/>
<rect x="723" y="397" width="1" height="5" fill="#00ff00"/>
<rect x="722" y="397" width="3" height="5" fill="#00ff00"/>
<rect x="723" y="398" width="1" height="3" fill="#000"/>
<rect x="727" y="349" width="1" height="49" fill="#00ff00"/>
<rect x="726" y="353" width="3" height="41" fill="#00ff00"/>
<rect x="727" y="354" width="1" height="39" fill="#000"/>
<rect x="731" y="334" width="1" height="24" fill="#00ff00"/>
<rect x="730" y="334" width="3" height="24" fill="#00ff00"/>
<rect x="731" y="335" width="1" height="22" fill="#000"/>
<rect x="735" y="306" width="1" height="37" fill="#00ff00"/>
<rect x="734" y="322" width="3" height="13" fill="#00ff00"/>
<rect x="735" y="323" width="1" height="11" fill="#000"/>
<rect x="739" y="306" width="1" height="21" fill="#00ff00"/>
<rect x="738" y="314" width="3" height="5" fill="#00ff00"/>
<rect x="739" y="315" width="1" height="3" fill="#000"/>
<rect x="743" y="286" width="1" height="17" fill="#00ff00"/>
<rect x="742" y="294" width="3" height="5" fill="#00ff00"/>
<rect x="743" y="295" width="1" height="3" fill="#000"/>
<rect x="747" y="270" width="1" height="29" fill="#00ff00"/>
<rect x="746" y="278" width="3" height="21" fill="#00ff00"/>
<rect x="747" y="279" width="1" height="19" fill="#000"/>
<rect x="751" y="270" width="1" height="25" fill="#00ff00"/>
<rect x="750" y="274" width="3" height="21" fill="#00ff00"/>
<rect x="751" y="275" width="1" height="19" fill="#fff"/>
<rect x="755" y="270" width="1" height="29" fill="#00ff00"/>
<rect x="754" y="290" width="3" height="5" fill="#00ff00"/>
<rect x="755" y="291" width="1" height="3" fill="#fff"/>
<rect x="759" y="286" width="1" height="17" fill="#00ff00"/>
<rect x="758" y="290" width="3" height="9" fill="#00ff00"/>
<rect x="759" y="291" width="1" height="7" fill="#fff"/>
<rect x="763" y="286" width="1" height="17" fill="#00ff00"/>
<rect x="762" y="298" width="3" height="1" fill="#00ff00"/>
<rect x="767" y="298" width="1" height="41" fill="#00ff00"/>
<rect x="766" y="306" width="3" height="17" fill="#00ff00"/>
<rect x="767" y="307" width="1" height="15" fill="#fff"/>
<rect x="771" y="310" width="1" height="29" fill="#00ff00"/>
<rect x="770" y="314" width="3" height="13" fill="#00ff00"/>
<rect x="771" y="315" width="1" height="11" fill="#fff"/>
<rect x="775" y="322" width="1" height="9" fill="#00ff00"/>
<rect x="774" y="322" width="3" height="5" fill="#00ff00"/>
<rect x="775" y="323" width="1" height="3" fill="#fff"/>
<rect x="779" y="314" width="1" height="21" fill="#00ff00"/>
<rect x="778" y="318" width="3" height="13" fill="#00ff00"/>
<rect x="779" y="319" width="1" height="11" fill="#000"/>
<rect x="783" y="302" width="1" height="52" fill="#00ff00"/>
<rect x="782" y="318" width="3" height="32" fill="#00ff00"/>
<rect x="783" y="319" width="1" height="30" fill="#fff"/>
<rect x="787" y="330" width="1" height="20" fill="#00ff00"/>
<rect x="786" y="338" width="3" height="12" fill="#00ff00"/>
<rect x="787" y="339" width="1" height="10" fill="#000"/>
<rect x="791" y="334" width="1" height="9" fill="#00ff00"/>
<rect x="790" y="338" width="3" height="1" fill="#00ff00"/>
<rect x="795" y="294" width="1" height="29" fill="#00ff00"/>
<rect x="794" y="298" width="3" height="25" fill="#00ff00"/>
<rect x="795" y="299" width="1" height="23" fill="#000"/>
<rect x="799" y="294" width="1" height="9" fill="#00ff00"/>
<rect x="798" y="294" width="3" height="5" fill="#00ff00"/>
<rect x="799" y="295" width="1" height="3" fill="#fff"/>
<rect x="803" y="290" width="1" height="13" fill="#00ff00"/>
<rect x="802" y="294" width="3" height="1" fill="#00ff00"/>
<rect x="807" y="290" width="1" height="9" fill="#00ff00"/>
<rect x="806" y="294" width="3" height="1" fill="#00ff00"/>
<rect x="811" y="282" width="1" height="25" fill="#00ff00"/>
<rect x="810" y="294" width="3" height="5" fill="#00ff00"/>
<rect x="811" y="295" width="1" height="3" fill="#fff"/>
<rect x="815" y="270" width="1" height="29" fill="#00ff00"/>
<rect x="814" y="274" width="3" height="21" fill="#00ff00"/>
<rect x="815" y="275" width="1" height="19" fill="#000"/>
<rect x="819" y="270" width="1" height="21" fill="#00ff00"/>
<rect x="818" y="274" width="3" height="9" fill="#00ff00"/>
<rect x="819" y="275" width="1" height="7" fill="#000"/>
<rect x="823" y="246" width="1" height="33" fill="#00ff00"/>
<rect x="822" y="274" width="3" height="1" fill="#00ff00"/>
<rect x="827" y="274" width="1" height="80" fill="#00ff00"/>
<rect x="826" y="274" width="3" height="49" fill="#00ff00"/>
<rect x="827" y="275" width="1" height="47" fill="#fff"/>
<rect x="20" y="361" width="1" height="37" fill="#00ff00"/>
<rect x="19" y="353" width="1" height="9" fill="#00ff00"/>
<rect x="19" y="361" width="2" height="1" fill="#00ff00"/>
<rect x="19" y="142" width="808" height="1" fill="#fff"/>
<rect x="121" y="161" width="2" height="2" fill="#1e90ff"/>
<rect x="125" y="161" width="2" height="2" fill="#1e90ff"/>
<rect x="129" y="161" width="2" height="2" fill="#1e90ff"/>
<rect x="133" y="161" width="2" height="2" fill="#1e90ff"/>
<rect x="137" y="161" width="2" height="2" fill="#1e90ff"/>
<rect x="141" y="161" width="2" height="2" fill="#1e90ff"/>
<rect x="145" y="161" width="2" height="2" fill="#1e90ff"/>
<rect x="149" y="161" width="2" height="2" fill="#1e90ff"/>
<rect x="153" y="161" width="2" height="2" fill="#1e90ff"/>
<rect x="159" y="162" width="3" height="1" fill="#1e90ff"/>
<rect x="165" y="162" width="3" height="1" fill="#1e90ff"/>
<rect x="171" y="162" width="3" height="1" fill="#1e90ff"/>
<rect x="177" y="162" width="3" height="1" fill="#1e90ff"/>
<rect x="183" y="162" width="3" height="1" fill="#1e90ff"/>
<rect x="189" y="162" width="3" height="1" fill="#1e90ff"/>
<rect x="195" y="162" width="3" height="1" fill="#1e90ff"/>
<rect x="201" y="162" width="3" height="1" fill="#1e90ff"/>
<rect x="207" y="162" width="3" height="1" fill="#1e90ff"/>
<rect x="213" y="162" width="3" height="1" fill="#1e90ff"/>
<rect x="219" y="162" width="3" height="1" fill="#1e90ff"/>
<rect x="225" y="162" width="3" height="1" fill="#1e90ff"/>
<rect x="231" y="162" width="3" height="1" fill="#1e90ff"/>
<rect x="237" y="162" width="3" height="1" fill="#1e90ff"/>
<rect x="243" y="162" width="3" height="1" fill="#1e90ff"/>
<rect x="249" y="162" width="3" height="1" fill="#1e90ff"/>
<rect x="255" y="162" width="3" height="1" fill="#1e90ff"/>
<rect x="261" y="162" width="3" height="1" fill="#1e90ff"/>
<rect x="267" y="162" width="3" height="1" fill="#1e90ff"/>
<rect x="273" y="162" width="3" height="1" fill="#1e90ff"/>
<rect x="279" y="162" width="3" height="1" fill="#1e90ff"/>
<rect x="285" y="162" width="3" height="1" fill="#1e90ff"/>
<rect x="291" y="162" width="3" height="1" fill="#1e90ff"/>
<rect x="297" y="162" width="3" height="1" fill="#1e90ff"/>
<rect x="303" y="162" width="3" height="1" fill="#1e90ff"/>
<rect x="309" y="162" width="3" height="1" fill="#1e90ff"/>
<rect x="315" y="162" width="3" height="1" fill="#1e90ff"/>
<rect x="321" y="162" width="3" height="1" fill="#1e90ff"/>
<rect x="327" y="162" width="3" height="1" fill="#1e90ff"/>
<rect x="333" y="162" width="3" height="1" fill="#1e90ff"/>
<rect x="339" y="162" width="3" height="1" fill="#1e90ff"/>
<rect x="345" y="162" width="3" height="1" fill="#1e90ff"/>
<rect x="351" y="162" width="3" height="1" fill="#1e90ff"/>
<rect x="357" y="162" width="3" height="1" fill="#1e90ff"/>
<rect x="363" y="162" width="3" height="1" fill="#1e90ff"/>
<rect x="369" y="162" width="3" height="1" fill="#1e90ff"/>
<rect x="375" y="162" width="3" height="1" fill="#1e90ff"/>
<rect x="381" y="162" width="3" height="1" fill="#1e90ff"/>
<rect x="387" y="162" width="3" height="1" fill="#1e90ff"/>
<rect x="393" y="162" width="3" height="1" fill="#1e90ff"/>
<rect x="399" y="162" width="3" height="1" fill="#1e90ff"/>
<rect x="405" y="162" width="3" height="1" fill="#1e90ff"/>
<rect x="411" y="162" width="3" height="1" fill="#1e90ff"/>
<rect x="417" y="162" width="3" height="1" fill="#1e90ff"/>
<rect x="423" y="162" width="3" height="1" fill="#1e90ff"/>
<rect x="429" y="162" width="3" height="1" fill="#1e90ff"/>
<rect x="435" y="162" width="3" height="1" fill="#1e90ff"/>
<rect x="441" y="162" width="3" height="1" fill="#1e90ff"/>
<rect x="447" y="162" width="3" height="1" fill="#1e90ff"/>
<rect x="453" y="162" width="3" height="1" fill="#1e90ff"/>
<rect x="459" y="162" width="3" height="1" fill="#1e90ff"/>
<rect x="465" y="162" width="3" height="1" fill="#1e90ff"/>
<rect x="471" y="162" width="3" height="1" fill="#1e90ff"/>
<rect x="477" y="162" width="3" height="1" fill="#1e90ff"/>
<rect x="483" y="162" width="3" height="1" fill="#1e90ff"/>
<rect x="489" y="162" width="3" height="1" fill="#1e90ff"/>
<rect x="495" y="162" width="3" height="1" fill="#1e90ff"/>
<rect x="501" y="162" width="3" height="1" fill="#1e90ff"/>
<rect x="507" y="162" width="3" height="1" fill="#1e90ff"/>
<rect x="513" y="162" width="3" height="1" fill="#1e90ff"/>
<rect x="519" y="162" width="3" height="1" fill="#1e90ff"/>
<rect x="525" y="162" width="3" height="1" fill="#1e90ff"/>
<rect x="531" y="162" width="3" height="1" fill="#1e90ff"/>
<rect x="537" y="162" width="3" height="1" fill="#1e90ff"/>
<rect x="543" y="162" width="3" height="1" fill="#1e90ff"/>
<rect x="549" y="162" width="3" height="1" fill="#1e90ff"/>
<rect x="555" y="162" width="3" height="1" fill="#1e90ff"/>
<rect x="561" y="162" width="3" height="1" fill="#1e90ff"/>
<rect x="567" y="162" width="3" height="1" fill="#1e90ff"/>
<rect x="573" y="162" width="3" height="1" fill="#1e90ff"/>
<rect x="579" y="162" width="3" height="1" fill="#1e90ff"/>
<rect x="585" y="162" width="3" height="1" fill="#1e90ff"/>
<rect x="591" y="162" width="3" height="1" fill="#1e90ff"/>
<rect x="597" y="162" width="3" height="1" fill="#1e90ff"/>
<rect x="603" y="162" width="3" height="1" fill="#1e90ff"/>
<rect x="609" y="162" width="3" height="1" fill="#1e90ff"/>
<rect x="615" y="162" width="3" height="1" fill="#1e90ff"/>
<rect x="621" y="162" width="3" height="1" fill="#1e90ff"/>
<rect x="627" y="162" width="3" height="1" fill="#1e90ff"/>
<rect x="633" y="162" width="3" height="1" fill="#1e90ff"/>
<rect x="639" y="162" width="3" height="1" fill="#1e90ff"/>
<rect x="645" y="162" width="3" height="1" fill="#1e90ff"/>
<rect x="651" y="162" width="3" height="1" fill="#1e90ff"/>
<rect x="657" y="162" width="3" height="1" fill="#1e90ff"/>
<rect x="663" y="162" width="3" height="1" fill="#1e90ff"/>
<rect x="669" y="162" width="3" height="1" fill="#1e90ff"/>
<rect x="675" y="162" width="3" height="1" fill="#1e90ff"/>
<rect x="681" y="162" width="3" height="1" fill="#1e90ff"/>
<rect x="687" y="162" width="3" height="1" fill="#1e90ff"/>
<rect x="693" y="162" width="3" height="1" fill="#1e90ff"/>
<rect x="699" y="162" width="3" height="1" fill="#1e90ff"/>
<rect x="705" y="162" width="3" height="1" fill="#1e90ff"/>
<rect x="711" y="162" width="3" height="1" fill="#1e90ff"/>
<rect x="717" y="162" width="3" height="1" fill="#1e90ff"/>
<rect x="723" y="162" width="3" height="1" fill="#1e90ff"/>
<rect x="729" y="162" width="3" height="1" fill="#1e90ff"/>
<rect x="735" y="162" width="3" height="1" fill="#1e90ff"/>
<rect x="741" y="162" width="3" height="1" fill="#1e90ff"/>
<rect x="747" y="162" width="3" height="1" fill="#1e90ff"/>
<rect x="753" y="162" width="3" height="1" fill="#1e90ff"/>
<rect x="759" y="162" width="3" height="1" fill="#1e90ff"/>
<rect x="765" y="162" width="3" height="1" fill="#1e90ff"/>
<rect x="771" y="162" width="3" height="1" fill="#1e90ff"/>
<rect x="777" y="162" width="3" height="1" fill="#1e90ff"/>
<rect x="783" y="162" width="3" height="1" fill="#1e90ff"/>
<rect x="789" y="162" width="3" height="1" fill="#1e90ff"/>
<rect x="795" y="162" width="3" height="1" fill="#1e90ff"/>
<rect x="801" y="162" width="3" height="1" fill="#1e90ff"/>
<rect x="807" y="162" width="3" height="1" fill="#1e90ff"/>
<rect x="813" y="162" width="3" height="1" fill="#1e90ff"/>
<rect x="819" y="162" width="3" height="1" fill="#1e90ff"/>
<rect x="825" y="162" width="2" height="1" fill="#1e90ff"/>
<rect x="65" y="169" width="2" height="2" fill="#1e90ff"/>
<rect x="69" y="169" width="2" height="2" fill="#1e90ff"/>
<rect x="73" y="169" width="2" height="2" fill="#1e90ff"/>
<rect x="77" y="169" width="2" height="2" fill="#1e90ff"/>
<rect x="81" y="169" width="2" height="2" fill="#1e90ff"/>
<rect x="85" y="169" width="2" height="2" fill="#1e90ff"/>
<rect x="89" y="169" width="2" height="2" fill="#1e90ff"/>
<rect x="93" y="169" width="2" height="2" fill="#1e90ff"/>
<rect x="97" y="169" width="2" height="2" fill="#1e90ff"/>
<rect x="103" y="170" width="3" height="1" fill="#1e90ff"/>
<rect x="109" y="170" width="3" height="1" fill="#1e90ff"/>
<rect x="115" y="170" width="3" height="1" fill="#1e90ff"/>
<rect x="121" y="170" width="3" height="1" fill="#1e90ff"/>
<rect x="127" y="170" width="3" height="1" fill="#1e90ff"/>
<rect x="133" y="170" width="3" height="1" fill="#1e90ff"/>
<rect x="139" y="170" width="3" height="1" fill="#1e90ff"/>
<rect x="145" y="170" width="3" height="1" fill="#1e90ff"/>
<rect x="151" y="170" width="3" height="1" fill="#1e90ff"/>
<rect x="157" y="170" width="3" height="1" fill="#1e90ff"/>
<rect x="163" y="170" width="3" height="1" fill="#1e90ff"/>
<rect x="169" y="170" width="3" height="1" fill="#1e90ff"/>
<rect x="175" y="170" width="3" height="1" fill="#1e90ff"/>
<rect x="181" y="170" width="3" height="1" fill="#1e90ff"/>
<rect x="187" y="170" width="3" height="1" fill="#1e90ff"/>
<rect x="193" y="170" width="3" height="1" fill="#1e90ff"/>
<rect x="199" y="170" width="3" height="1" fill="#1e90ff"/>
<rect x="205" y="170" width="3" height="1" fill="#1e90ff"/>
<rect x="211" y="170" width="3" height="1" fill="#1e90ff"/>
<rect x="217" y="170" width="3" height="1" fill="#1e90ff"/>
<rect x="223" y="170" width="3" height="1" fill="#1e90ff"/>
<rect x="229" y="170" width="3" height="1" fill="#1e90ff"/>
<rect x="235" y="170" width="3" height="1" fill="#1e90ff"/>
<rect x="173" y="169" width="2" height="2" fill="#1e90ff"/>
<rect x="177" y="169" width="2" height="2" fill="#1e90ff"/>
<rect x="181" y="169" width="2" height="2" fill="#1e90ff"/>
<rect x="185" y="169" width="2" height="2" fill="#1e90ff"/>
<rect x="189" y="169" width="2" height="2" fill="#1e90ff"/>
<rect x="193" y="169" width="2" height="2" fill="#1e90ff"/>
<rect x="197" y="169" width="2" height="2" fill="#1e90ff"/>
<rect x="201" y="169" width="2" height="2" fill="#1e90ff"/>
<rect x="205" y="169" width="2" height="2" fill="#1e90ff"/>
<rect x="209" y="169" width="2" height="2" fill="#1e90ff"/>
<rect x="213" y="169" width="2" height="2" fill="#1e90ff"/>
<rect x="217" y="169" width="2" height="2" fill="#1e90ff"/>
<rect x="221" y="169" width="2" height="2" fill="#1e90ff"/>
<rect x="225" y="169" width="2" height="2" fill="#1e90ff"/>
<rect x="229" y="169" width="2" height="2" fill="#1e90ff"/>
<rect x="233" y="169" width="2" height="2" fill="#1e90ff"/>
<rect x="237" y="169" width="2" height="2" fill="#1e90ff"/>
<rect x="257" y="169" width="2" height="2" fill="#1e90ff"/>
<rect x="261" y="169" width="2" height="2" fill="#1e90ff"/>
<rect x="265" y="169" width="2" height="2" fill="#1e90ff"/>
<rect x="269" y="169" width="2" height="2" fill="#1e90ff"/>
<rect x="273" y="169" width="2" height="2" fill="#1e90ff"/>
<rect x="277" y="169" width="2" height="2" fill="#1e90ff"/>
<rect x="281" y="169" width="2" height="2" fill="#1e90ff"/>
<rect x="285" y="169" width="2" height="2" fill="#1e90ff"/>
<rect x="289" y="169" width="2" height="2" fill="#1e90ff"/>
<rect x="293" y="169" width="2" height="2" fill="#1e90ff"/>
<rect x="297" y="169" width="2" height="2" fill="#1e90ff"/>
<rect x="301" y="169" width="2" height="2" fill="#1e90ff"/>
<rect x="305" y="169" width="2" height="2" fill="#1e90ff"/>
<rect x="309" y="169" width="2" height="2" fill="#1e90ff"/>
<rect x="313" y="169" width="2" height="2" fill="#1e90ff"/>
<rect x="317" y="169" width="2" height="2" fill="#1e90ff"/>
<rect x="321" y="169" width="2" height="2" fill="#1e90ff"/>
<rect x="325" y="169" width="2" height="2" fill="#1e90ff"/>
<rect x="331" y="170" width="3" height="1" fill="#1e90ff"/>
<rect x="337" y="170" width="3" height="1" fill="#1e90ff"/>
<rect x="343" y="170" width="3" height="1" fill="#1e90ff"/>
<rect x="349" y="170" width="3" height="1" fill="#1e90ff"/>
<rect x="355" y="170" width="3" height="1" fill="#1e90ff"/>
<rect x="361" y="170" width="3" height="1" fill="#1e90ff"/>
<rect x="367" y="170" width="3" height="1" fill="#1e90ff"/>
<rect x="373" y="170" width="3" height="1" fill="#1e90ff"/>
<rect x="379" y="170" width="3" height="1" fill="#1e90ff"/>
<rect x="385" y="170" width="3" height="1" fill="#1e90ff"/>
<rect x="391" y="170" width="3" height="1" fill="#1e90ff"/>
<rect x="397" y="170" width="3" height="1" fill="#1e90ff"/>
<rect x="403" y="170" width="3" height="1" fill="#1e90ff"/>
<rect x="409" y="170" width="3" height="1" fill="#1e90ff"/>
<rect x="415" y="170" width="3" height="1" fill="#1e90ff"/>
<rect x="421" y="170" width="3" height="1" fill="#1e90ff"/>
<rect x="427" y="170" width="3" height="1" fill="#1e90ff"/>
<rect x="433" y="170" width="3" height="1" fill="#1e90ff"/>
<rect x="439" y="170" width="3" height="1" fill="#1e90ff"/>
<rect x="445" y="170" width="3" height="1" fill="#1e90ff"/>
<rect x="451" y="170" width="3" height="1" fill="#1e90ff"/>
<rect x="457" y="170" width="3" height="1" fill="#1e90ff"/>
<rect x="463" y="170" width="3" height="1" fill="#1e90ff"/>
<rect x="469" y="170" width="3" height="1" fill="#1e90ff"/>
<rect x="475" y="170" width="3" height="1" fill="#1e90ff"/>
<rect x="481" y="170" width="3" height="1" fill="#1e90ff"/>
<rect x="487" y="170" width="3" height="1" fill="#1e90ff"/>
<rect x="493" y="170" width="3" height="1" fill="#1e90ff"/>
<rect x="499" y="170" width="3" height="1" fill="#1e90ff"/>
<rect x="505" y="170" width="3" height="1" fill="#1e90ff"/>
<rect x="511" y="170" width="3" height="1" fill="#1e90ff"/>
<rect x="517" y="170" width="3" height="1" fill="#1e90ff"/>
<rect x="523" y="170" width="3" height="1" fill="#1e90ff"/>
<rect x="529" y="170" width="3" height="1" fill="#1e90ff"/>
<rect x="535" y="170" width="3" height="1" fill="#1e90ff"/>
<rect x="541" y="170" width="3" height="1" fill="#1e90ff"/>
<rect x="547" y="170" width="3" height="1" fill="#1e90ff"/>
<rect x="553" y="170" width="3" height="1" fill="#1e90ff"/>
<rect x="559" y="170" width="3" height="1" fill="#1e90ff"/>
<rect x="565" y="170" width="3" height="1" fill="#1e90ff"/>
<rect x="571" y="170" width="3" height="1" fill="#1e90ff"/>
<rect x="577" y="170" width="3" height="1" fill="#1e90ff"/>
<rect x="583" y="170" width="3" height="1" fill="#1e90ff"/>
<rect x="589" y="170" width="3" height="1" fill="#1e90ff"/>
<rect x="595" y="170" width="3" height="1" fill="#1e90ff"/>
<rect x="601" y="170" width="3" height="1" fill="#1e90ff"/>
<rect x="607" y="170" width="3" height="1" fill="#1e90ff"/>
<rect x="613" y="170" width="3" height="1" fill="#1e90ff"/>
<rect x="619" y="170" width="3" height="1" fill="#1e90ff"/>
<rect x="625" y="170" width="3" height="1" fill="#1e90ff"/>
<rect x="631" y="170" width="3" height="1" fill="#1e90ff"/>
<rect x="637" y="170" width="3" height="1" fill="#1e90ff"/>
<rect x="643" y="170" width="3" height="1" fill="#1e90ff"/>
<rect x="649" y="170" width="3" height="1" fill="#1e90ff"/>
<rect x="655" y="170" width="3" height="1" fill="#1e90ff"/>
<rect x="661" y="170" width="3" height="1" fill="#1e90ff"/>
<rect x="667" y="170" width="3" height="1" fill="#1e90ff"/>
<rect x="673" y="170" width="3" height="1" fill="#1e90ff"/>
<rect x="679" y="170" width="3" height="1" fill="#1e90ff"/>
<rect x="685" y="170" width="3" height="1" fill="#1e90ff"/>
<rect x="691" y="170" width="3" height="1" fill="#1e90ff"/>
<rect x="697" y="170" width="3" height="1" fill="#1e90ff"/>
<rect x="703" y="170" width="3" height="1" fill="#1e90ff"/>
<rect x="709" y="170" width="3" height="1" fill="#1e90ff"/>
<rect x="715" y="170" width="3" height="1" fill="#1e90ff"/>
<rect x="721" y="170" width="3" height="1" fill="#1e90ff"/>
<rect x="727" y="170" width="3" height="1" fill="#1e90ff"/>
<rect x="733" y="170" width="3" height="1" fill="#1e90ff"/>
<rect x="739" y="170" width="3" height="1" fill="#1e90ff"/>
<rect x="745" y="170" width="3" height="1" fill="#1e90ff"/>
<rect x="751" y="170" width="3" height="1" fill="#1e90ff"/>
<rect x="757" y="170" width="3" height="1" fill="#1e90ff"/>
<rect x="763" y="170" width="3" height="1" fill="#1e90ff"/>
<rect x="769" y="170" width="3" height="1" fill="#1e90ff"/>
<rect x="775" y="170" width="3" height="1" fill="#1e90ff"/>
<rect x="781" y="170" width="3" height="1" fill="#1e90ff"/>
<rect x="787" y="170" width="3" height="1" fill="#1e90ff"/>
<rect x="793" y="170" width="3" height="1" fill="#1e90ff"/>
<rect x="799" y="170" width="3" height="1" fill="#1e90ff"/>
<rect x="805" y="170" width="3" height="1" fill="#1e90ff"/>
<rect x="811" y="170" width="3" height="1" fill="#1e90ff"/>
<rect x="817" y="170" width="3" height="1" fill="#1e90ff"/>
<rect x="823" y="170" width="3" height="1" fill="#1e90ff"/>
<rect x="157" y="177" width="2" height="2" fill="#1e90ff"/>
<rect x="161" y="177" width="2" height="2" fill="#1e90ff"/>
<rect x="165" y="177" width="2" height="2" fill="#1e90ff"/>
<rect x="169" y="177" width="2" height="2" fill="#1e90ff"/>
<rect x="175" y="178" width="3" height="1" fill="#1e90ff"/>
<rect x="181" y="178" width="3" height="1" fill="#1e90ff"/>
<rect x="187" y="178" width="3" height="1" fill="#1e90ff"/>
<rect x="193" y="178" width="3" height="1" fill="#1e90ff"/>
<rect x="199" y="178" width="3" height="1" fill="#1e90ff"/>
<rect x="205" y="178" width="3" height="1" fill="#1e90ff"/>
<rect x="211" y="178" width="3" height="1" fill="#1e90ff"/>
<rect x="217" y="178" width="3" height="1" fill="#1e90ff"/>
<rect x="223" y="178" width="3" height="1" fill="#1e90ff"/>
<rect x="229" y="178" width="3" height="1" fill="#1e90ff"/>
<rect x="235" y="178" width="3" height="1" fill="#1e90ff"/>
<rect x="237" y="141" width="2" height="2" fill="#1e90ff"/>
<rect x="241" y="141" width="2" height="2" fill="#1e90ff"/>
<rect x="245" y="141" width="2" height="2" fill="#1e90ff"/>
<rect x="249" y="141" width="2" height="2" fill="#1e90ff"/>
<rect x="253" y="141" width="2" height="2" fill="#1e90ff"/>
<rect x="259" y="142" width="3" height="1" fill="#1e90ff"/>
<rect x="265" y="142" width="3" height="1" fill="#1e90ff"/>
<rect x="271" y="142" width="3" height="1" fill="#1e90ff"/>
<rect x="277" y="142" width="3" height="1" fill="#1e90ff"/>
<rect x="283" y="142" width="3" height="1" fill="#1e90ff"/>
<rect x="289" y="142" width="3" height="1" fill="#1e90ff"/>
<rect x="295" y="142" width="3" height="1" fill="#1e90ff"/>
<rect x="301" y="142" width="3" height="1" fill="#1e90ff"/>
<rect x="307" y="142" width="3" height="1" fill="#1e90ff"/>
<rect x="313" y="142" width="3" height="1" fill="#1e90ff"/>
<rect x="319" y="142" width="3" height="1" fill="#1e90ff"/>
<rect x="325" y="142" width="3" height="1" fill="#1e90ff"/>
<rect x="331" y="142" width="3" height="1" fill="#1e90ff"/>
<rect x="337" y="142" width="3" height="1" fill="#1e90ff"/>
<rect x="343" y="142" width="3" height="1" fill="#1e90ff"/>
<rect x="349" y="142" width="3" height="1" fill="#1e90ff"/>
<rect x="355" y="142" width="3" height="1" fill="#1e90ff"/>
<rect x="361" y="142" width="3" height="1" fill="#1e90ff"/>
<rect x="367" y="142" width="3" height="1" fill="#1e90ff"/>
<rect x="373" y="142" width="3" height="1" fill="#1e90ff"/>
<rect x="379" y="142" width="3" height="1" fill="#1e90ff"/>
<rect x="385" y="142" width="3" height="1" fill="#1e90ff"/>
<rect x="391" y="142" width="3" height="1" fill="#1e90ff"/>
<rect x="397" y="142" width="3" height="1" fill="#1e90ff"/>
<rect x="403" y="142" width="3" height="1" fill="#1e90ff"/>
<rect x="409" y="142" width="3" height="1" fill="#1e90ff"/>
<rect x="415" y="142" width="3" height="1" fill="#1e90ff"/>
<rect x="421" y="142" width="3" height="1" fill="#1e90ff"/>
<rect x="427" y="142" width="3" height="1" fill="#1e90ff"/>
<rect x="433" y="142" width="3" height="1" fill="#1e90ff"/>
<rect x="439" y="142" width="3" height="1" fill="#1e90ff"/>
<rect x="445" y="142" width="3" height="1" fill="#1e90ff"/>
<rect x="451" y="142" width="3" height="1" fill="#1e90ff"/>
<rect x="457" y="142" width="3" height="1" fill="#1e90ff"/>
<rect x="463" y="142" width="3" height="1" fill="#1e90ff"/>
<rect x="469" y="142" width="3" height="1" fill="#1e90ff"/>
<rect x="475" y="142" width="3" height="1" fill="#1e90ff"/>
<rect x="481" y="142" width="3" height="1" fill="#1e90ff"/>
<rect x="487" y="142" width="3" height="1" fill="#1e90ff"/>
<rect x="493" y="142" width="3" height="1" fill="#1e90ff"/>
<rect x="499" y="142" width="3" height="1" fill="#1e90ff"/>
<rect x="505" y="142" width="3" height="1" fill="#1e90ff"/>
<rect x="511" y="142" width="3" height="1" fill="#1e90ff"/>
<rect x="517" y="142" width="3" height="1" fill="#1e90ff"/>
<rect x="523" y="142" width="3" height="1" fill="#1e90ff"/>
<rect x="529" y="142" width="3" height="1" fill="#1e90ff"/>
<rect x="535" y="142" width="3" height="1" fill="#1e90ff"/>
<rect x="541" y="142" width="3" height="1" fill="#1e90ff"/>
<rect x="547" y="142" width="3" height="1" fill="#1e90ff"/>
<rect x="553" y="142" width="3" height="1" fill="#1e90ff"/>
<rect x="559" y="142" width="3" height="1" fill="#1e90ff"/>
<rect x="565" y="142" width="3" height="1" fill="#1e90ff"/>
<rect x="571" y="142" width="3" height="1" fill="#1e90ff"/>
<rect x="577" y="142" width="3" height="1" fill="#1e90ff"/>
<rect x="583" y="142" width="3" height="1" fill="#1e90ff"/>
<rect x="589" y="142" width="3" height="1" fill="#1e90ff"/>
<rect x="595" y="142" width="3" height="1" fill="#1e90ff"/>
<rect x="601" y="142" width="3" height="1" fill="#1e90ff"/>
<rect x="607" y="142" width="3" height="1" fill="#1e90ff"/>
<rect x="613" y="142" width="3" height="1" fill="#1e90ff"/>
<rect x="619" y="142" width="3" height="1" fill="#1e90ff"/>
<rect x="625" y="142" width="3" height="1" fill="#1e90ff"/>
<rect x="631" y="142" width="3" height="1" fill="#1e90ff"/>
<rect x="637" y="142" width="3" height="1" fill="#1e90ff"/>
<rect x="643" y="142" width="3" height="1" fill="#1e90ff"/>
<rect x="649" y="142" width="3" height="1" fill="#1e90ff"/>
<rect x="655" y="142" width="3" height="1" fill="#1e90ff"/>
<rect x="661" y="142" width="3" height="1" fill="#1e90ff"/>
<rect x="667" y="142" width="3" height="1" fill="#1e90ff"/>
<rect x="673" y="142" width="3" height="1" fill="#1e90ff"/>
<rect x="679" y="142" width="3" height="1" fill="#1e90ff"/>
<rect x="685" y="142" width="3" height="1" fill="#1e90ff"/>
<rect x="691" y="142" width="3" height="1" fill="#1e90ff"/>
<rect x="697" y="142" width="3" height="1" fill="#1e90ff"/>
<rect x="703" y="142" width="3" height="1" fill="#1e90ff"/>
<rect x="709" y="142" width="3" height="1" fill="#1e90ff"/>
<rect x="715" y="142" width="3" height="1" fill="#1e90ff"/>
<rect x="721" y="142" width="3" height="1" fill="#1e90ff"/>
<rect x="727" y="142" width="3" height="1" fill="#1e90ff"/>
<rect x="733" y="142" width="3" height="1" fill="#1e90ff"/>
<rect x="739" y="142" width="3" height="1" fill="#1e90ff"/>
<rect x="745" y="142" width="3" height="1" fill="#1e90ff"/>
<rect x="751" y="142" width="3" height="1" fill="#1e90ff"/>
<rect x="757" y="142" width="3" height="1" fill="#1e90ff"/>
<rect x="763" y="142" width="3" height="1" fill="#1e90ff"/>
<rect x="769" y="142" width="3" height="1" fill="#1e90ff"/>
<rect x="775" y="142" width="3" height="1" fill="#1e90ff"/>
<rect x="781" y="142" width="3" height="1" fill="#1e90ff"/>
<rect x="787" y="142" width="3" height="1" fill="#1e90ff"/>
<rect x="793" y="142" width="3" height="1" fill="#1e90ff"/>
<rect x="799" y="142" width="3" height="1" fill="#1e90ff"/>
<rect x="805" y="142" width="3" height="1" fill="#1e90ff"/>
<rect x="811" y="142" width="3" height="1" fill="#1e90ff"/>
<rect x="817" y="142" width="3" height="1" fill="#1e90ff"/>
<rect x="823" y="142" width="3" height="1" fill="#1e90ff"/>
<rect x="349" y="157" width="2" height="2" fill="#1e90ff"/>
<rect x="353" y="157" width="2" height="2" fill="#1e90ff"/>
<rect x="357" y="157" width="2" height="2" fill="#1e90ff"/>
<rect x="361" y="157" width="2" height="2" fill="#1e90ff"/>
<rect x="365" y="157" width="2" height="2" fill="#1e90ff"/>
<rect x="369" y="157" width="2" height="2" fill="#1e90ff"/>
<rect x="373" y="157" width="2" height="2" fill="#1e90ff"/>
<rect x="379" y="158" width="3" height="1" fill="#1e90ff"/>
<rect x="385" y="158" width="3" height="1" fill="#1e90ff"/>
<rect x="391" y="158" width="3" height="1" fill="#1e90ff"/>
<rect x="397" y="158" width="3" height="1" fill="#1e90ff"/>
<rect x="403" y="158" width="3" height="1" fill="#1e90ff"/>
<rect x="409" y="158" width="3" height="1" fill="#1e90ff"/>
<rect x="415" y="158" width="3" height="1" fill="#1e90ff"/>
<rect x="421" y="158" width="3" height="1" fill="#1e90ff"/>
<rect x="427" y="158" width="3" height="1" fill="#1e90ff"/>
<rect x="433" y="158" width="3" height="1" fill="#1e90ff"/>
<rect x="439" y="158" width="3" height="1" fill="#1e90ff"/>
<rect x="445" y="158" width="3" height="1" fill="#1e90ff"/>
<rect x="451" y="158" width="3" height="1" fill="#1e90ff"/>
<rect x="457" y="158" width="3" height="1" fill="#1e90ff"/>
<rect x="463" y="158" width="3" height="1" fill="#1e90ff"/>
<rect x="469" y="158" width="3" height="1" fill="#1e90ff"/>
<rect x="475" y="158" width="3" height="1" fill="#1e90ff"/>
<rect x="481" y="158" width="3" height="1" fill="#1e90ff"/>
<rect x="487" y="158" width="3" height="1" fill="#1e90ff"/>
<rect x="493" y="158" width="3" height="1" fill="#1e90ff"/>
<rect x="499" y="158" width="3" height="1" fill="#1e90ff"/>
<rect x="505" y="158" width="3" height="1" fill="#1e90ff"/>
<rect x="511" y="158" width="3" height="1" fill="#1e90ff"/>
<rect x="517" y="158" width="3" height="1" fill="#1e90ff"/>
<rect x="523" y="158" width="3" height="1" fill="#1e90ff"/>
<rect x="529" y="158" width="3" height="1" fill="#1e90ff"/>
<rect x="535" y="158" width="3" height="1" fill="#1e90ff"/>
<rect x="541" y="158" width="3" height="1" fill="#1e90ff"/>
<rect x="547" y="158" width="3" height="1" fill="#1e90ff"/>
<rect x="553" y="158" width="3" height="1" fill="#1e90ff"/>
<rect x="559" y="158" width="3" height="1" fill="#1e90ff"/>
<rect x="565" y="158" width="3" height="1" fill="#1e90ff"/>
<rect x="571" y="158" width="3" height="1" fill="#1e90ff"/>
<rect x="577" y="158" width="3" height="1" fill="#1e90ff"/>
<rect x="583" y="158" width="3" height="1" fill="#1e90ff"/>
<rect x="589" y="158" width="3" height="1" fill="#1e90ff"/>
<rect x="595" y="158" width="3" height="1" fill="#1e90ff"/>
<rect x="601" y="158" width="3" height="1" fill="#1e90ff"/>
<rect x="607" y="158" width="3" height="1" fill="#1e90ff"/>
<rect x="613" y="158" width="3" height="1" fill="#1e90ff"/>
<rect x="619" y="158" width="3" height="1" fill="#1e90ff"/>
<rect x="625" y="158" width="3" height="1" fill="#1e90ff"/>
<rect x="631" y="158" width="3" height="1" fill="#1e90ff"/>
<rect x="637" y="158" width="3" height="1" fill="#1e90ff"/>
<rect x="643" y="158" width="3" height="1" fill="#1e90ff"/>
<rect x="649" y="158" width="3" height="1" fill="#1e90ff"/>
<rect x="655" y="158" width="3" height="1" fill="#1e90ff"/>
<rect x="661" y="158" width="3" height="1" fill="#1e90ff"/>
<rect x="667" y="158" width="3" height="1" fill="#1e90ff"/>
<rect x="673" y="158" width="3" height="1" fill="#1e90ff"/>
<rect x="679" y="158" width="3" height="1" fill="#1e90ff"/>
<rect x="685" y="158" width="3" height="1" fill="#1e90ff"/>
<rect x="691" y="158" width="3" height="1" fill="#1e90ff"/>
<rect x="697" y="158" width="3" height="1" fill="#1e90ff"/>
<rect x="703" y="158" width="3" height="1" fill="#1e90ff"/>
<rect x="709" y="158" width="3" height="1" fill="#1e90ff"/>
<rect x="715" y="158" width="3" height="1" fill="#1e90ff"/>
<rect x="721" y="158" width="3" height="1" fill="#1e90ff"/>
<rect x="727" y="158" width="3" height="1" fill="#1e90ff"/>
<rect x="733" y="158" width="3" height="1" fill="#1e90ff"/>
<rect x="739" y="158" width="3" height="1" fill="#1e90ff"/>
<rect x="745" y="158" width="3" height="1" fill="#1e90ff"/>
<rect x="751" y="158" width="3" height="1" fill="#1e90ff"/>
<rect x="757" y="158" width="3" height="1" fill="#1e90ff"/>
<rect x="763" y="158" width="3" height="1" fill="#1e90ff"/>
<rect x="769" y="158" width="3" height="1" fill="#1e90ff"/>
<rect x="775" y="158" width="3" height="1" fill="#1e90ff"/>
<rect x="781" y="158" width="3" height="1" fill="#1e90ff"/>
<rect x="787" y="158" width="3" height="1" fill="#1e90ff"/>
<rect x="793" y="158" width="3" height="1" fill="#1e90ff"/>
<rect x="799" y="158" width="3" height="1" fill="#1e90ff"/>
<rect x="805" y="158" width="3" height="1" fill="#1e90ff"/>
<rect x="811" y="158" width="3" height="1" fill="#1e90ff"/>
<rect x="817" y="158" width="3" height="1" fill="#1e90ff"/>
<rect x="823" y="158" width="3" height="1" fill="#1e90ff"/>
<rect x="329" y="229" width="2" height="2" fill="#1e90ff"/>
<rect x="333" y="229" width="2" height="2" fill="#1e90ff"/>
<rect x="337" y="229" width="2" height="2" fill="#1e90ff"/>
<rect x="377" y="265" width="2" height="2" fill="#1e90ff"/>
<rect x="381" y="265" width="2" height="2" fill="#1e90ff"/>
<rect x="385" y="265" width="2" height="2" fill="#1e90ff"/>
<rect x="389" y="265" width="2" height="2" fill="#1e90ff"/>
<rect x="393" y="265" width="2" height="2" fill="#1e90ff"/>
<rect x="397" y="265" width="2" height="2" fill="#1e90ff"/>
<rect x="401" y="265" width="2" height="2" fill="#1e90ff"/>
<rect x="405" y="265" width="2" height="2" fill="#1e90ff"/>
<rect x="409" y="265" width="2" height="2" fill="#1e90ff"/>
<rect x="413" y="265" width="2" height="2" fill="#1e90ff"/>
<rect x="417" y="265" width="2" height="2" fill="#1e90ff"/>
<rect x="421" y="265" width="2" height="2" fill="#1e90ff"/>
<rect x="425" y="265" width="2" height="2" fill="#1e90ff"/>
<rect x="429" y="265" width="2" height="2" fill="#1e90ff"/>
<rect x="433" y="265" width="2" height="2" fill="#1e90ff"/>
<rect x="437" y="265" width="2" height="2" fill="#1e90ff"/>
<rect x="443" y="266" width="3" height="1" fill="#1e90ff"/>
<rect x="449" y="266" width="3" height="1" fill="#1e90ff"/>
<rect x="455" y="266" width="3" height="1" fill="#1e90ff"/>
<rect x="461" y="266" width="3" height="1" fill="#1e90ff"/>
<rect x="467" y="266" width="3" height="1" fill="#1e90ff"/>
<rect x="473" y="266" width="3" height="1" fill="#1e90ff"/>
<rect x="479" y="266" width="3" height="1" fill="#1e90ff"/>
<rect x="485" y="266" width="3" height="1" fill="#1e90ff"/>
<rect x="491" y="266" width="3" height="1" fill="#1e90ff"/>
<rect x="497" y="266" width="3" height="1" fill="#1e90ff"/>
<rect x="503" y="266" width="3" height="1" fill="#1e90ff"/>
<rect x="509" y="266" width="3" height="1" fill="#1e90ff"/>
<rect x="515" y="266" width="3" height="1" fill="#1e90ff"/>
<rect x="521" y="266" width="3" height="1" fill="#1e90ff"/>
<rect x="527" y="266" width="3" height="1" fill="#1e90ff"/>
<rect x="533" y="266" width="3" height="1" fill="#1e90ff"/>
<rect x="539" y="266" width="3" height="1" fill="#1e90ff"/>
<rect x="545" y="266" width="3" height="1" fill="#1e90ff"/>
<rect x="551" y="266" width="3" height="1" fill="#1e90ff"/>
<rect x="557" y="266" width="3" height="1" fill="#1e90ff"/>
<rect x="563" y="266" width="3" height="1" fill="#1e90ff"/>
<rect x="569" y="266" width="3" height="1" fill="#1e90ff"/>
<rect x="575" y="266" width="3" height="1" fill="#1e90ff"/>
<rect x="581" y="266" width="3" height="1" fill="#1e90ff"/>
<rect x="587" y="266" width="3" height="1" fill="#1e90ff"/>
<rect x="593" y="266" width="3" height="1" fill="#1e90ff"/>
<rect x="599" y="266" width="3" height="1" fill="#1e90ff"/>
<rect x="605" y="266" width="3" height="1" fill="#1e90ff"/>
<rect x="611" y="266" width="3" height="1" fill="#1e90ff"/>
<rect x="617" y="266" width="3" height="1" fill="#1e90ff"/>
<rect x="623" y="266" width="3" height="1" fill="#1e90ff"/>
<rect x="629" y="266" width="3" height="1" fill="#1e90ff"/>
<rect x="635" y="266" width="3" height="1" fill="#1e90ff"/>
<rect x="641" y="266" width="3" height="1" fill="#1e90ff"/>
<rect x="647" y="266" width="3" height="1" fill="#1e90ff"/>
<rect x="653" y="266" width="3" height="1" fill="#1e90ff"/>
<rect x="659" y="266" width="3" height="1" fill="#1e90ff"/>
<rect x="665" y="266" width="3" height="1" fill="#1e90ff"/>
<rect x="671" y="266" width="3" height="1" fill="#1e90ff"/>
<rect x="677" y="266" width="3" height="1" fill="#1e90ff"/>
<rect x="683" y="266" width="3" height="1" fill="#1e90ff"/>
<rect x="689" y="266" width="3" height="1" fill="#1e90ff"/>
<rect x="695" y="266" width="3" height="1" fill="#1e90ff"/>
<rect x="701" y="266" width="3" height="1" fill="#1e90ff"/>
<rect x="707" y="266" width="3" height="1" fill="#1e90ff"/>
<rect x="713" y="266" width="3" height="1" fill="#1e90ff"/>
<rect x="719" y="266" width="3" height="1" fill="#1e90ff"/>
<rect x="725" y="266" width="3" height="1" fill="#1e90ff"/>
<rect x="731" y="266" width="3" height="1" fill="#1e90ff"/>
<rect x="737" y="266" width="3" height="1" fill="#1e90ff"/>
<rect x="743" y="266" width="3" height="1" fill="#1e90ff"/>
<rect x="749" y="266" width="3" height="1" fill="#1e90ff"/>
<rect x="755" y="266" width="3" height="1" fill="#1e90ff"/>
<rect x="761" y="266" width="3" height="1" fill="#1e90ff"/>
<rect x="767" y="266" width="3" height="1" fill="#1e90ff"/>
<rect x="773" y="266" width="3" height="1" fill="#1e90ff"/>
<rect x="779" y="266" width="3" height="1" fill="#1e90ff"/>
<rect x="785" y="266" width="3" height="1" fill="#1e90ff"/>
<rect x="791" y="266" width="3" height="1" fill="#1e90ff"/>
<rect x="797" y="266" width="3" height="1" fill="#1e90ff"/>
<rect x="803" y="266" width="3" height="1" fill="#1e90ff"/>
<rect x="809" y="266" width="3" height="1" fill="#1e90ff"/>
<rect x="815" y="266" width="3" height="1" fill="#1e90ff"/>
<rect x="821" y="266" width="3" height="1" fill="#1e90ff"/>
<rect x="441" y="376" width="2" height="2" fill="#1e90ff"/>
<rect x="445" y="376" width="2" height="2" fill="#1e90ff"/>
<rect x="449" y="376" width="2" height="2" fill="#1e90ff"/>
<rect x="453" y="376" width="2" height="2" fill="#1e90ff"/>
<rect x="457" y="376" width="2" height="2" fill="#1e90ff"/>
<rect x="461" y="376" width="2" height="2" fill="#1e90ff"/>
<rect x="465" y="376" width="2" height="2" fill="#1e90ff"/>
<rect x="471" y="377" width="3" height="1" fill="#1e90ff"/>
<rect x="477" y="377" width="3" height="1" fill="#1e90ff"/>
<rect x="483" y="377" width="3" height="1" fill="#1e90ff"/>
<rect x="489" y="377" width="3" height="1" fill="#1e90ff"/>
<rect x="495" y="377" width="3" height="1" fill="#1e90ff"/>
<rect x="501" y="377" width="3" height="1" fill="#1e90ff"/>
<rect x="507" y="377" width="3" height="1" fill="#1e90ff"/>
<rect x="513" y="377" width="3" height="1" fill="#1e90ff"/>
<rect x="519" y="377" width="3" height="1" fill="#1e90ff"/>
<rect x="525" y="377" width="3" height="1" fill="#1e90ff"/>
<rect x="531" y="377" width="3" height="1" fill="#1e90ff"/>
<rect x="537" y="377" width="3" height="1" fill="#1e90ff"/>
<rect x="543" y="377" width="3" height="1" fill="#1e90ff"/>
<rect x="549" y="377" width="3" height="1" fill="#1e90ff"/>
<rect x="555" y="377" width="3" height="1" fill="#1e90ff"/>
<rect x="561" y="377" width="3" height="1" fill="#1e90ff"/>
<rect x="567" y="377" width="3" height="1" fill="#1e90ff"/>
<rect x="469" y="424" width="2" height="2" fill="#1e90ff"/>
<rect x="473" y="424" width="2" height="2" fill="#1e90ff"/>
<rect x="477" y="424" width="2" height="2" fill="#1e90ff"/>
<rect x="481" y="424" width="2" height="2" fill="#1e90ff"/>
<rect x="485" y="424" width="2" height="2" fill="#1e90ff"/>
<rect x="489" y="424" width="2" height="2" fill="#1e90ff"/>
<rect x="495" y="425" width="3" height="1" fill="#1e90ff"/>
<rect x="501" y="425" width="3" height="1" fill="#1e90ff"/>
<rect x="507" y="425" width="3" height="1" fill="#1e90ff"/>
<rect x="513" y="425" width="3" height="1" fill="#1e90ff"/>
<rect x="519" y="425" width="3" height="1" fill="#1e90ff"/>
<rect x="525" y="425" width="3" height="1" fill="#1e90ff"/>
<rect x="531" y="425" width="3" height="1" fill="#1e90ff"/>
<rect x="537" y="425" width="3" height="1" fill="#1e90ff"/>
<rect x="493" y="436" width="2" height="2" fill="#1e90ff"/>
<rect x="497" y="436" width="2" height="2" fill="#1e90ff"/>
<rect x="501" y="436" width="2" height="2" fill="#1e90ff"/>
<rect x="505" y="436" width="2" height="2" fill="#1e90ff"/>
<rect x="509" y="436" width="2" height="2" fill="#1e90ff"/>
<rect x="513" y="436" width="2" height="2" fill="#1e90ff"/>
<rect x="519" y="437" width="3" height="1" fill="#1e90ff"/>
<rect x="525" y="437" width="3" height="1" fill="#1e90ff"/>
<rect x="531" y="437" width="3" height="1" fill="#1e90ff"/>
<rect x="517" y="448" width="2" height="2" fill="#1e90ff"/>
<rect x="521" y="448" width="2" height="2" fill="#1e90ff"/>
<rect x="525" y="448" width="2" height="2" fill="#1e90ff"/>
<rect x="541" y="388" width="2" height="2" fill="#1e90ff"/>
<rect x="545" y="388" width="2" height="2" fill="#1e90ff"/>
<rect x="549" y="388" width="2" height="2" fill="#1e90ff"/>
<rect x="553" y="388" width="2" height="2" fill="#1e90ff"/>
<rect x="557" y="388" width="2" height="2" fill="#1e90ff"/>
<rect x="561" y="388" width="2" height="2" fill="#1e90ff"/>
<rect x="565" y="388" width="2" height="2" fill="#1e90ff"/>
<rect x="593" y="341" width="2" height="2" fill="#1e90ff"/>
<rect x="597" y="341" width="2" height="2" fill="#1e90ff"/>
<rect x="601" y="341" width="2" height="2" fill="#1e90ff"/>
<rect x="605" y="341" width="2" height="2" fill="#1e90ff"/>
<rect x="609" y="341" width="2" height="2" fill="#1e90ff"/>
<rect x="613" y="341" width="2" height="2" fill="#1e90ff"/>
<rect x="617" y="341" width="2" height="2" fill="#1e90ff"/>
<rect x="621" y="341" width="2" height="2" fill="#1e90ff"/>
<rect x="625" y="341" width="2" height="2" fill="#1e90ff"/>
<rect x="629" y="341" width="2" height="2" fill="#1e90ff"/>
<rect x="635" y="342" width="3" height="1" fill="#1e90ff"/>
<rect x="641" y="342" width="3" height="1" fill="#1e90ff"/>
<rect x="647" y="342" width="3" height="1" fill="#1e90ff"/>
<rect x="653" y="342" width="3" height="1" fill="#1e90ff"/>
<rect x="659" y="342" width="3" height="1" fill="#1e90ff"/>
<rect x="665" y="342" width="3" height="1" fill="#1e90ff"/>
<rect x="671" y="342" width="3" height="1" fill="#1e90ff"/>
<rect x="677" y="342" width="3" height="1" fill="#1e90ff"/>
<rect x="683" y="342" width="3" height="1" fill="#1e90ff"/>
<rect x="689" y="342" width="3" height="1" fill="#1e90ff"/>
<rect x="695" y="342" width="3" height="1" fill="#1e90ff"/>
<rect x="701" y="342" width="3" height="1" fill="#1e90ff"/>
<rect x="707" y="342" width="3" height="1" fill="#1e90ff"/>
<rect x="713" y="342" width="3" height="1" fill="#1e90ff"/>
<rect x="719" y="342" width="3" height="1" fill="#1e90ff"/>
<rect x="725" y="342" width="3" height="1" fill="#1e90ff"/>
<rect x="633" y="440" width="2" height="2" fill="#1e90ff"/>
<rect x="637" y="440" width="2" height="2" fill="#1e90ff"/>
<rect x="641" y="440" width="2" height="2" fill="#1e90ff"/>
<rect x="645" y="440" width="2" height="2" fill="#1e90ff"/>
<rect x="649" y="440" width="2" height="2" fill="#1e90ff"/>
<rect x="655" y="441" width="3" height="1" fill="#1e90ff"/>
<rect x="661" y="441" width="3" height="1" fill="#1e90ff"/>
<rect x="667" y="441" width="3" height="1" fill="#1e90ff"/>
<rect x="673" y="441" width="3" height="1" fill="#1e90ff"/>
<rect x="679" y="441" width="3" height="1" fill="#1e90ff"/>
<rect x="685" y="441" width="3" height="1" fill="#1e90ff"/>
<rect x="691" y="441" width="3" height="1" fill="#1e90ff"/>
<rect x="697" y="441" width="3" height="1" fill="#1e90ff"/>
<rect x="703" y="441" width="3" height="1" fill="#1e90ff"/>
<rect x="709" y="441" width="3" height="1" fill="#1e90ff"/>
<rect x="653" y="456" width="2" height="2" fill="#1e90ff"/>
<rect x="657" y="456" width="2" height="2" fill="#1e90ff"/>
<rect x="661" y="456" width="2" height="2" fill="#1e90ff"/>
<rect x="665" y="456" width="2" height="2" fill="#1e90ff"/>
<rect x="669" y="456" width="2" height="2" fill="#1e90ff"/>
<rect x="673" y="456" width="2" height="2" fill="#1e90ff"/>
<rect x="677" y="456" width="2" height="2" fill="#1e90ff"/>
<rect x="681" y="456" width="2" height="2" fill="#1e90ff"/>
<rect x="687" y="457" width="3" height="1" fill="#1e90ff"/>
<rect x="693" y="457" width="3" height="1" fill="#1e90ff"/>
<rect x="699" y="457" width="3" height="1" fill="#1e90ff"/>
<rect x="705" y="457" width="3" height="1" fill="#1e90ff"/>
<rect x="685" y="488" width="2" height="2" fill="#1e90ff"/>
<rect x="689" y="488" width="2" height="2" fill="#1e90ff"/>
<rect x="693" y="488" width="2" height="2" fill="#1e90ff"/>
<rect x="753" y="269" width="2" height="2" fill="#1e90ff"/>
<rect x="757" y="269" width="2" height="2" fill="#1e90ff"/>
<rect x="761" y="269" width="2" height="2" fill="#1e90ff"/>
<rect x="765" y="269" width="2" height="2" fill="#1e90ff"/>
<rect x="769" y="269" width="2" height="2" fill="#1e90ff"/>
<rect x="773" y="269" width="2" height="2" fill="#1e90ff"/>
<rect x="777" y="269" width="2" height="2" fill="#1e90ff"/>
<rect x="783" y="270" width="3" height="1" fill="#1e90ff"/>
<rect x="789" y="270" width="3" height="1" fill="#1e90ff"/>
<rect x="795" y="270" width="3" height="1" fill="#1e90ff"/>
<rect x="801" y="270" width="3" height="1" fill="#1e90ff"/>
<rect x="807" y="270" width="3" height="1" fill="#1e90ff"/>
<rect x="813" y="270" width="3" height="1" fill="#1e90ff"/>
<rect x="819" y="270" width="3" height="1" fill="#1e90ff"/>
<rect x="825" y="270" width="3" height="1" fill="#1e90ff"/>
<rect x="781" y="301" width="2" height="2" fill="#1e90ff"/>
<rect x="785" y="301" width="2" height="2" fill="#1e90ff"/>
<rect x="789" y="301" width="2" height="2" fill="#1e90ff"/>
<rect x="29" y="281" width="2" height="2" fill="#1e90ff"/>
<rect x="33" y="281" width="2" height="2" fill="#1e90ff"/>
<rect x="37" y="281" width="2" height="2" fill="#1e90ff"/>
<rect x="41" y="281" width="2" height="2" fill="#1e90ff"/>
<rect x="101" y="281" width="2" height="2" fill="#1e90ff"/>
<rect x="105" y="281" width="2" height="2" fill="#1e90ff"/>
<rect x="109" y="281" width="2" height="2" fill="#1e90ff"/>
<rect x="19" y="313" width="1" height="2" fill="#1e90ff"/>
<rect x="21" y="313" width="2" height="2" fill="#1e90ff"/>
<rect x="19" y="202" width="3" height="1" fill="#1e90ff"/>
<rect x="25" y="202" width="3" height="1" fill="#1e90ff"/>
<rect x="31" y="202" width="3" height="1" fill="#1e90ff"/>
<rect x="37" y="202" width="3" height="1" fill="#1e90ff"/>
<rect x="43" y="202" width="3" height="1" fill="#1e90ff"/>
<rect x="49" y="202" width="3" height="1" fill="#1e90ff"/>
<rect x="55" y="202" width="3" height="1" fill="#1e90ff"/>
<rect x="19" y="226" width="3" height="1" fill="#1e90ff"/>
<rect x="25" y="226" width="3" height="1" fill="#1e90ff"/>
<rect x="31" y="226" width="3" height="1" fill="#1e90ff"/>
<rect x="37" y="226" width="3" height="1" fill="#1e90ff"/>
<rect x="43" y="226" width="3" height="1" fill="#1e90ff"/>
<rect x="49" y="226" width="3" height="1" fill="#1e90ff"/>
<rect x="19" y="234" width="3" height="1" fill="#1e90ff"/>
<rect x="25" y="234" width="3" height="1" fill="#1e90ff"/>
<rect x="31" y="234" width="3" height="1" fill="#1e90ff"/>
<rect x="37" y="234" width="3" height="1" fill="#1e90ff"/>
<rect x="43" y="234" width="3" height="1" fill="#1e90ff"/>
<rect x="49" y="234" width="3" height="1" fill="#1e90ff"/>
<rect x="19" y="274" width="3" height="1" fill="#1e90ff"/>
<rect x="25" y="274" width="3" height="1" fill="#1e90ff"/>
<rect x="31" y="274" width="3" height="1" fill="#1e90ff"/>
<rect x="37" y="274" width="3" height="1" fill="#1e90ff"/>
<rect x="43" y="274" width="3" height="1" fill="#1e90ff"/>
<rect x="19" y="310" width="3" height="1" fill="#1e90ff"/>
<rect x="25" y="310" width="3" height="1" fill="#1e90ff"/>
<rect x="38" y="341" width="2" height="2" fill="#ff0000"/>
<rect x="42" y="341" width="2" height="2" fill="#ff0000"/>
<rect x="46" y="341" width="2" height="2" fill="#ff0000"/>
<rect x="50" y="341" width="2" height="2" fill="#ff0000"/>
<rect x="54" y="341" width="2" height="2" fill="#ff0000"/>
<rect x="58" y="341" width="2" height="2" fill="#ff0000"/>
<rect x="62" y="341" width="2" height="2" fill="#ff0000"/>
<rect x="66" y="341" width="2" height="2" fill="#ff0000"/>
<rect x="70" y="341" width="2" height="2" fill="#ff0000"/>
<rect x="74" y="341" width="2" height="2" fill="#ff0000"/>
<rect x="90" y="380" width="2" height="2" fill="#ff0000"/>
<rect x="94" y="380" width="2" height="2" fill="#ff0000"/>
<rect x="98" y="380" width="2" height="2" fill="#ff0000"/>
<rect x="102" y="380" width="2" height="2" fill="#ff0000"/>
<rect x="106" y="380" width="2" height="2" fill="#ff0000"/>
<rect x="110" y="380" width="2" height="2" fill="#ff0000"/>
<rect x="114" y="380" width="2" height="2" fill="#ff0000"/>
<rect x="118" y="380" width="2" height="2" fill="#ff0000"/>
<rect x="122" y="380" width="2" height="2" fill="#ff0000"/>
<rect x="126" y="380" width="2" height="2" fill="#ff0000"/>
<rect x="130" y="380" width="2" height="2" fill="#ff0000"/>
<rect x="134" y="380" width="2" height="2" fill="#ff0000"/>
<rect x="138" y="380" width="2" height="2" fill="#ff0000"/>
<rect x="142" y="380" width="2" height="2" fill="#ff0000"/>
<rect x="147" y="381" width="3" height="1" fill="#ff0000"/>
<rect x="153" y="381" width="3" height="1" fill="#ff0000"/>
<rect x="159" y="381" width="3" height="1" fill="#ff0000"/>
<rect x="165" y="381" width="3" height="1" fill="#ff0000"/>
<rect x="171" y="381" width="3" height="1" fill="#ff0000"/>
<rect x="177" y="381" width="3" height="1" fill="#ff0000"/>
<rect x="183" y="381" width="3" height="1" fill="#ff0000"/>
<rect x="189" y="381" width="3" height="1" fill="#ff0000"/>
<rect x="195" y="381" width="3" height="1" fill="#ff0000"/>
<rect x="201" y="381" width="3" height="1" fill="#ff0000"/>
<rect x="207" y="381" width="3" height="1" fill="#ff0000"/>
<rect x="213" y="381" width="3" height="1" fill="#ff0000"/>
<rect x="219" y="381" width="3" height="1" fill="#ff0000"/>
<rect x="225" y="381" width="3" height="1" fill="#ff0000"/>
<rect x="231" y="381" width="3" height="1" fill="#ff0000"/>
<rect x="237" y="381" width="3" height="1" fill="#ff0000"/>
<rect x="243" y="381" width="3" height="1" fill="#ff0000"/>
<rect x="249" y="381" width="3" height="1" fill="#ff0000"/>
<rect x="255" y="381" width="3" height="1" fill="#ff0000"/>
<rect x="261" y="381" width="3" height="1" fill="#ff0000"/>
<rect x="267" y="381" width="3" height="1" fill="#ff0000"/>
<rect x="273" y="381" width="3" height="1" fill="#ff0000"/>
<rect x="279" y="381" width="3" height="1" fill="#ff0000"/>
<rect x="285" y="381" width="3" height="1" fill="#ff0000"/>
<rect x="291" y="381" width="3" height="1" fill="#ff0000"/>
<rect x="297" y="381" width="3" height="1" fill="#ff0000"/>
<rect x="303" y="381" width="3" height="1" fill="#ff0000"/>
<rect x="309" y="381" width="3" height="1" fill="#ff0000"/>
<rect x="315" y="381" width="3" height="1" fill="#ff0000"/>
<rect x="321" y="381" width="3" height="1" fill="#ff0000"/>
<rect x="327" y="381" width="3" height="1" fill="#ff0000"/>
<rect x="333" y="381" width="3" height="1" fill="#ff0000"/>
<rect x="339" y="381" width="3" height="1" fill="#ff0000"/>
<rect x="345" y="381" width="3" height="1" fill="#ff0000"/>
<rect x="351" y="381" width="3" height="1" fill="#ff0000"/>
<rect x="357" y="381" width="3" height="1" fill="#ff0000"/>
<rect x="363" y="381" width="3" height="1" fill="#ff0000"/>
<rect x="369" y="381" width="3" height="1" fill="#ff0000"/>
<rect x="375" y="381" width="3" height="1" fill="#ff0000"/>
<rect x="381" y="381" width="3" height="1" fill="#ff0000"/>
<rect x="387" y="381" width="3" height="1" fill="#ff0000"/>
<rect x="393" y="381" width="3" height="1" fill="#ff0000"/>
<rect x="399" y="381" width="3" height="1" fill="#ff0000"/>
<rect x="146" y="253" width="2" height="2" fill="#ff0000"/>
<rect x="150" y="253" width="2" height="2" fill="#ff0000"/>
<rect x="154" y="253" width="2" height="2" fill="#ff0000"/>
<rect x="158" y="253" width="2" height="2" fill="#ff0000"/>
<rect x="162" y="253" width="2" height="2" fill="#ff0000"/>
<rect x="166" y="253" width="2" height="2" fill="#ff0000"/>
<rect x="171" y="254" width="3" height="1" fill="#ff0000"/>
<rect x="177" y="254" width="3" height="1" fill="#ff0000"/>
<rect x="183" y="254" width="3" height="1" fill="#ff0000"/>
<rect x="170" y="245" width="2" height="2" fill="#ff0000"/>
<rect x="174" y="245" width="2" height="2" fill="#ff0000"/>
<rect x="178" y="245" width="2" height="2" fill="#ff0000"/>
<rect x="182" y="245" width="2" height="2" fill="#ff0000"/>
<rect x="190" y="277" width="2" height="2" fill="#ff0000"/>
<rect x="194" y="277" width="2" height="2" fill="#ff0000"/>
<rect x="198" y="277" width="2" height="2" fill="#ff0000"/>
<rect x="202" y="277" width="2" height="2" fill="#ff0000"/>
<rect x="206" y="277" width="2" height="2" fill="#ff0000"/>
<rect x="210" y="277" width="2" height="2" fill="#ff0000"/>
<rect x="215" y="278" width="3" height="1" fill="#ff0000"/>
<rect x="221" y="278" width="3" height="1" fill="#ff0000"/>
<rect x="227" y="278" width="3" height="1" fill="#ff0000"/>
<rect x="233" y="278" width="3" height="1" fill="#ff0000"/>
<rect x="239" y="278" width="3" height="1" fill="#ff0000"/>
<rect x="245" y="278" width="3" height="1" fill="#ff0000"/>
<rect x="251" y="278" width="3" height="1" fill="#ff0000"/>
<rect x="257" y="278" width="3" height="1" fill="#ff0000"/>
<rect x="263" y="278" width="3" height="1" fill="#ff0000"/>
<rect x="269" y="278" width="3" height="1" fill="#ff0000"/>
<rect x="275" y="278" width="3" height="1" fill="#ff0000"/>
<rect x="281" y="278" width="3" height="1" fill="#ff0000"/>
<rect x="214" y="269" width="2" height="2" fill="#ff0000"/>
<rect x="218" y="269" width="2" height="2" fill="#ff0000"/>
<rect x="222" y="269" width="2" height="2" fill="#ff0000"/>
<rect x="226" y="269" width="2" height="2" fill="#ff0000"/>
<rect x="230" y="269" width="2" height="2" fill="#ff0000"/>
<rect x="234" y="269" width="2" height="2" fill="#ff0000"/>
<rect x="238" y="269" width="2" height="2" fill="#ff0000"/>
<rect x="242" y="269" width="2" height="2" fill="#ff0000"/>
<rect x="246" y="269" width="2" height="2" fill="#ff0000"/>
<rect x="251" y="270" width="3" height="1" fill="#ff0000"/>
<rect x="257" y="270" width="3" height="1" fill="#ff0000"/>
<rect x="263" y="270" width="3" height="1" fill="#ff0000"/>
<rect x="269" y="270" width="3" height="1" fill="#ff0000"/>
<rect x="275" y="270" width="3" height="1" fill="#ff0000"/>
<rect x="281" y="270" width="3" height="1" fill="#ff0000"/>
<rect x="250" y="225" width="2" height="2" fill="#ff0000"/>
<rect x="254" y="225" width="2" height="2" fill="#ff0000"/>
<rect x="258" y="225" width="2" height="2" fill="#ff0000"/>
<rect x="262" y="225" width="2" height="2" fill="#ff0000"/>
<rect x="266" y="225" width="2" height="2" fill="#ff0000"/>
<rect x="270" y="225" width="2" height="2" fill="#ff0000"/>
<rect x="286" y="309" width="2" height="2" fill="#ff0000"/>
<rect x="290" y="309" width="2" height="2" fill="#ff0000"/>
<rect x="294" y="309" width="2" height="2" fill="#ff0000"/>
<rect x="299" y="310" width="3" height="1" fill="#ff0000"/>
<rect x="298" y="344" width="2" height="2" fill="#ff0000"/>
<rect x="302" y="344" width="2" height="2" fill="#ff0000"/>
<rect x="306" y="344" width="2" height="2" fill="#ff0000"/>
<rect x="311" y="345" width="3" height="1" fill="#ff0000"/>
<rect x="317" y="345" width="3" height="1" fill="#ff0000"/>
<rect x="323" y="345" width="3" height="1" fill="#ff0000"/>
<rect x="329" y="345" width="3" height="1" fill="#ff0000"/>
<rect x="335" y="345" width="3" height="1" fill="#ff0000"/>
<rect x="341" y="345" width="3" height="1" fill="#ff0000"/>
<rect x="347" y="345" width="3" height="1" fill="#ff0000"/>
<rect x="353" y="345" width="3" height="1" fill="#ff0000"/>
<rect x="359" y="345" width="3" height="1" fill="#ff0000"/>
<rect x="365" y="345" width="3" height="1" fill="#ff0000"/>
<rect x="371" y="345" width="3" height="1" fill="#ff0000"/>
<rect x="377" y="345" width="3" height="1" fill="#ff0000"/>
<rect x="383" y="345" width="3" height="1" fill="#ff0000"/>
<rect x="310" y="329" width="2" height="2" fill="#ff0000"/>
<rect x="314" y="329" width="2" height="2" fill="#ff0000"/>
<rect x="318" y="329" width="2" height="2" fill="#ff0000"/>
<rect x="322" y="329" width="2" height="2" fill="#ff0000"/>
<rect x="326" y="329" width="2" height="2" fill="#ff0000"/>
<rect x="330" y="329" width="2" height="2" fill="#ff0000"/>
<rect x="334" y="329" width="2" height="2" fill="#ff0000"/>
<rect x="338" y="329" width="2" height="2" fill="#ff0000"/>
<rect x="342" y="329" width="2" height="2" fill="#ff0000"/>
<rect x="346" y="329" width="2" height="2" fill="#ff0000"/>
<rect x="350" y="329" width="2" height="2" fill="#ff0000"/>
<rect x="354" y="329" width="2" height="2" fill="#ff0000"/>
<rect x="358" y="329" width="2" height="2" fill="#ff0000"/>
<rect x="362" y="329" width="2" height="2" fill="#ff0000"/>
<rect x="366" y="329" width="2" height="2" fill="#ff0000"/>
<rect x="370" y="329" width="2" height="2" fill="#ff0000"/>
<rect x="374" y="329" width="2" height="2" fill="#ff0000"/>
<rect x="378" y="329" width="2" height="2" fill="#ff0000"/>
<rect x="382" y="329" width="2" height="2" fill="#ff0000"/>
<rect x="426" y="456" width="2" height="2" fill="#ff0000"/>
<rect x="430" y="456" width="2" height="2" fill="#ff0000"/>
<rect x="434" y="456" width="2" height="2" fill="#ff0000"/>
<rect x="438" y="456" width="2" height="2" fill="#ff0000"/>
<rect x="442" y="456" width="2" height="2" fill="#ff0000"/>
<rect x="446" y="456" width="2" height="2" fill="#ff0000"/>
<rect x="450" y="456" width="2" height="2" fill="#ff0000"/>
<rect x="454" y="456" width="2" height="2" fill="#ff0000"/>
<rect x="458" y="456" width="2" height="2" fill="#ff0000"/>
<rect x="462" y="456" width="2" height="2" fill="#ff0000"/>
<rect x="467" y="457" width="3" height="1" fill="#ff0000"/>
<rect x="473" y="457" width="3" height="1" fill="#ff0000"/>
<rect x="479" y="457" width="3" height="1" fill="#ff0000"/>
<rect x="485" y="457" width="3" height="1" fill="#ff0000"/>
<rect x="466" y="464" width="2" height="2" fill="#ff0000"/>
<rect x="470" y="464" width="2" height="2" fill="#ff0000"/>
<rect x="474" y="464" width="2" height="2" fill="#ff0000"/>
<rect x="478" y="464" width="2" height="2" fill="#ff0000"/>
<rect x="482" y="464" width="2" height="2" fill="#ff0000"/>
<rect x="486" y="464" width="2" height="2" fill="#ff0000"/>
<rect x="490" y="464" width="2" height="2" fill="#ff0000"/>
<rect x="494" y="464" width="2" height="2" fill="#ff0000"/>
<rect x="510" y="476" width="2" height="2" fill="#ff0000"/>
<rect x="514" y="476" width="2" height="2" fill="#ff0000"/>
<rect x="518" y="476" width="2" height="2" fill="#ff0000"/>
<rect x="522" y="476" width="2" height="2" fill="#ff0000"/>
<rect x="526" y="476" width="2" height="2" fill="#ff0000"/>
<rect x="530" y="476" width="2" height="2" fill="#ff0000"/>
<rect x="534" y="476" width="2" height="2" fill="#ff0000"/>
<rect x="538" y="476" width="2" height="2" fill="#ff0000"/>
<rect x="542" y="476" width="2" height="2" fill="#ff0000"/>
<rect x="546" y="476" width="2" height="2" fill="#ff0000"/>
<rect x="551" y="477" width="3" height="1" fill="#ff0000"/>
<rect x="557" y="477" width="3" height="1" fill="#ff0000"/>
<rect x="563" y="477" width="3" height="1" fill="#ff0000"/>
<rect x="569" y="477" width="3" height="1" fill="#ff0000"/>
<rect x="575" y="477" width="3" height="1" fill="#ff0000"/>
<rect x="581" y="477" width="3" height="1" fill="#ff0000"/>
<rect x="587" y="477" width="3" height="1" fill="#ff0000"/>
<rect x="593" y="477" width="3" height="1" fill="#ff0000"/>
<rect x="599" y="477" width="3" height="1" fill="#ff0000"/>
<rect x="605" y="477" width="3" height="1" fill="#ff0000"/>
<rect x="611" y="477" width="3" height="1" fill="#ff0000"/>
<rect x="617" y="477" width="3" height="1" fill="#ff0000"/>
<rect x="623" y="477" width="3" height="1" fill="#ff0000"/>
<rect x="629" y="477" width="3" height="1" fill="#ff0000"/>
<rect x="635" y="477" width="3" height="1" fill="#ff0000"/>
<rect x="641" y="477" width="3" height="1" fill="#ff0000"/>
<rect x="647" y="477" width="3" height="1" fill="#ff0000"/>
<rect x="653" y="477" width="3" height="1" fill="#ff0000"/>
<rect x="550" y="440" width="2" height="2" fill="#ff0000"/>
<rect x="554" y="440" width="2" height="2" fill="#ff0000"/>
<rect x="558" y="440" width="2" height="2" fill="#ff0000"/>
<rect x="562" y="440" width="2" height="2" fill="#ff0000"/>
<rect x="566" y="440" width="2" height="2" fill="#ff0000"/>
<rect x="570" y="440" width="2" height="2" fill="#ff0000"/>
<rect x="574" y="440" width="2" height="2" fill="#ff0000"/>
<rect x="578" y="440" width="2" height="2" fill="#ff0000"/>
<rect x="582" y="440" width="2" height="2" fill="#ff0000"/>
<rect x="586" y="440" width="2" height="2" fill="#ff0000"/>
<rect x="590" y="440" width="2" height="2" fill="#ff0000"/>
<rect x="594" y="440" width="2" height="2" fill="#ff0000"/>
<rect x="598" y="440" width="2" height="2" fill="#ff0000"/>
<rect x="602" y="440" width="2" height="2" fill="#ff0000"/>
<rect x="606" y="440" width="2" height="2" fill="#ff0000"/>
<rect x="610" y="440" width="2" height="2" fill="#ff0000"/>
<rect x="614" y="440" width="2" height="2" fill="#ff0000"/>
<rect x="626" y="484" width="2" height="2" fill="#ff0000"/>
<rect x="630" y="484" width="2" height="2" fill="#ff0000"/>
<rect x="634" y="484" width="2" height="2" fill="#ff0000"/>
<rect x="638" y="484" width="2" height="2" fill="#ff0000"/>
<rect x="642" y="484" width="2" height="2" fill="#ff0000"/>
<rect x="646" y="484" width="2" height="2" fill="#ff0000"/>
<rect x="650" y="484" width="2" height="2" fill="#ff0000"/>
<rect x="654" y="484" width="2" height="2" fill="#ff0000"/>
<rect x="662" y="516" width="2" height="2" fill="#ff0000"/>
<rect x="666" y="516" width="2" height="2" fill="#ff0000"/>
<rect x="670" y="516" width="2" height="2" fill="#ff0000"/>
<rect x="674" y="516" width="2" height="2" fill="#ff0000"/>
<rect x="686" y="536" width="2" height="2" fill="#ff0000"/>
<rect x="690" y="536" width="2" height="2" fill="#ff0000"/>
<rect x="694" y="536" width="2" height="2" fill="#ff0000"/>
<rect x="698" y="536" width="2" height="2" fill="#ff0000"/>
<rect x="702" y="536" width="2" height="2" fill="#ff0000"/>
<rect x="706" y="536" width="2" height="2" fill="#ff0000"/>
<rect x="710" y="536" width="2" height="2" fill="#ff0000"/>
<rect x="714" y="536" width="2" height="2" fill="#ff0000"/>
<rect x="718" y="536" width="2" height="2" fill="#ff0000"/>
<rect x="722" y="536" width="2" height="2" fill="#ff0000"/>
<rect x="726" y="536" width="2" height="2" fill="#ff0000"/>
<rect x="730" y="536" width="2" height="2" fill="#ff0000"/>
<rect x="734" y="536" width="2" height="2" fill="#ff0000"/>
<rect x="738" y="536" width="2" height="2" fill="#ff0000"/>
<rect x="742" y="536" width="2" height="2" fill="#ff0000"/>
<rect x="746" y="536" width="2" height="2" fill="#ff0000"/>
<rect x="750" y="536" width="2" height="2" fill="#ff0000"/>
<rect x="754" y="536" width="2" height="2" fill="#ff0000"/>
<rect x="758" y="536" width="2" height="2" fill="#ff0000"/>
<rect x="762" y="536" width="2" height="2" fill="#ff0000"/>
<rect x="766" y="536" width="2" height="2" fill="#ff0000"/>
<rect x="771" y="537" width="3" height="1" fill="#ff0000"/>
<rect x="777" y="537" width="3" height="1" fill="#ff0000"/>
<rect x="783" y="537" width="3" height="1" fill="#ff0000"/>
<rect x="789" y="537" width="3" height="1" fill="#ff0000"/>
<rect x="795" y="537" width="3" height="1" fill="#ff0000"/>
<rect x="801" y="537" width="3" height="1" fill="#ff0000"/>
<rect x="807" y="537" width="3" height="1" fill="#ff0000"/>
<rect x="813" y="537" width="3" height="1" fill="#ff0000"/>
<rect x="819" y="537" width="3" height="1" fill="#ff0000"/>
<rect x="825" y="537" width="3" height="1" fill="#ff0000"/>
<rect x="770" y="337" width="2" height="2" fill="#ff0000"/>
<rect x="774" y="337" width="2" height="2" fill="#ff0000"/>
<rect x="778" y="337" width="2" height="2" fill="#ff0000"/>
<rect x="782" y="352" width="2" height="2" fill="#ff0000"/>
<rect x="786" y="352" width="2" height="2" fill="#ff0000"/>
<rect x="790" y="352" width="2" height="2" fill="#ff0000"/>
<rect x="794" y="352" width="2" height="2" fill="#ff0000"/>
<rect x="798" y="352" width="2" height="2" fill="#ff0000"/>
<rect x="802" y="352" width="2" height="2" fill="#ff0000"/>
<rect x="806" y="352" width="2" height="2" fill="#ff0000"/>
<rect x="811" y="353" width="3" height="1" fill="#ff0000"/>
<rect x="817" y="353" width="3" height="1" fill="#ff0000"/>
<rect x="823" y="353" width="3" height="1" fill="#ff0000"/>
<rect x="810" y="305" width="2" height="2" fill="#ff0000"/>
<rect x="814" y="305" width="2" height="2" fill="#ff0000"/>
<rect x="818" y="305" width="2" height="2" fill="#ff0000"/>
<rect x="822" y="305" width="2" height="2" fill="#ff0000"/>
<rect x="19" y="416" width="1" height="2" fill="#ff0000"/>
<rect x="22" y="416" width="2" height="2" fill="#ff0000"/>
<rect x="26" y="416" width="2" height="2" fill="#ff0000"/>
<rect x="30" y="416" width="2" height="2" fill="#ff0000"/>
<rect x="34" y="416" width="2" height="2" fill="#ff0000"/>
<rect x="39" y="417" width="3" height="1" fill="#ff0000"/>
<rect x="45" y="417" width="3" height="1" fill="#ff0000"/>
<rect x="51" y="417" width="3" height="1" fill="#ff0000"/>
<rect x="57" y="417" width="3" height="1" fill="#ff0000"/>
<rect x="63" y="417" width="3" height="1" fill="#ff0000"/>
<rect x="69" y="417" width="3" height="1" fill="#ff0000"/>
<rect x="75" y="417" width="3" height="1" fill="#ff0000"/>
<rect x="81" y="417" width="3" height="1" fill="#ff0000"/>
<rect x="87" y="417" width="3" height="1" fill="#ff0000"/>
<rect x="93" y="417" width="3" height="1" fill="#ff0000"/>
<rect x="99" y="417" width="3" height="1" fill="#ff0000"/>
<rect x="105" y="417" width="3" height="1" fill="#ff0000"/>
<rect x="111" y="417" width="3" height="1" fill="#ff0000"/>
<rect x="117" y="417" width="3" height="1" fill="#ff0000"/>
<rect x="123" y="417" width="3" height="1" fill="#ff0000"/>
<rect x="129" y="417" width="3" height="1" fill="#ff0000"/>
<rect x="135" y="417" width="3" height="1" fill="#ff0000"/>
<rect x="141" y="417" width="3" height="1" fill="#ff0000"/>
<rect x="147" y="417" width="3" height="1" fill="#ff0000"/>
<rect x="153" y="417" width="3" height="1" fill="#ff0000"/>
<rect x="159" y="417" width="3" height="1" fill="#ff0000"/>
<rect x="165" y="417" width="3" height="1" fill="#ff0000"/>
<rect x="171" y="417" width="3" height="1" fill="#ff0000"/>
<rect x="177" y="417" width="3" height="1" fill="#ff0000"/>
<rect x="183" y="417" width="3" height="1" fill="#ff0000"/>
<rect x="189" y="417" width="3" height="1" fill="#ff0000"/>
<rect x="195" y="417" width="3" height="1" fill="#ff0000"/>
<rect x="201" y="417" width="3" height="1" fill="#ff0000"/>
<rect x="207" y="417" width="3" height="1" fill="#ff0000"/>
<rect x="213" y="417" width="3" height="1" fill="#ff0000"/>
<rect x="219" y="417" width="3" height="1" fill="#ff0000"/>
<rect x="225" y="417" width="3" height="1" fill="#ff0000"/>
<rect x="231" y="417" width="3" height="1" fill="#ff0000"/>
<rect x="237" y="417" width="3" height="1" fill="#ff0000"/>
<rect x="243" y="417" width="3" height="1" fill="#ff0000"/>
<rect x="249" y="417" width="3" height="1" fill="#ff0000"/>
<rect x="255" y="417" width="3" height="1" fill="#ff0000"/>
<rect x="261" y="417" width="3" height="1" fill="#ff0000"/>
<rect x="267" y="417" width="3" height="1" fill="#ff0000"/>
<rect x="273" y="417" width="3" height="1" fill="#ff0000"/>
<rect x="279" y="417" width="3" height="1" fill="#ff0000"/>
<rect x="285" y="417" width="3" height="1" fill="#ff0000"/>
<rect x="291" y="417" width="3" height="1" fill="#ff0000"/>
<rect x="297" y="417" width="3" height="1" fill="#ff0000"/>
<rect x="303" y="417" width="3" height="1" fill="#ff0000"/>
<rect x="309" y="417" width="3" height="1" fill="#ff0000"/>
<rect x="315" y="417" width="3" height="1" fill="#ff0000"/>
<rect x="321" y="417" width="3" height="1" fill="#ff0000"/>
<rect x="327" y="417" width="3" height="1" fill="#ff0000"/>
<rect x="333" y="417" width="3" height="1" fill="#ff0000"/>
<rect x="339" y="417" width="3" height="1" fill="#ff0000"/>
<rect x="345" y="417" width="3" height="1" fill="#ff0000"/>
<rect x="351" y="417" width="3" height="1" fill="#ff0000"/>
<rect x="357" y="417" width="3" height="1" fill="#ff0000"/>
<rect x="363" y="417" width="3" height="1" fill="#ff0000"/>
<rect x="369" y="417" width="3" height="1" fill="#ff0000"/>
<rect x="375" y="417" width="3" height="1" fill="#ff0000"/>
<rect x="381" y="417" width="3" height="1" fill="#ff0000"/>
<rect x="387" y="417" width="3" height="1" fill="#ff0000"/>
<rect x="393" y="417" width="3" height="1" fill="#ff0000"/>
<rect x="399" y="417" width="3" height="1" fill="#ff0000"/>
<rect x="22" y="521" width="3" height="1" fill="#ff0000"/>
<rect x="28" y="521" width="3" height="1" fill="#ff0000"/>
<rect x="34" y="521" width="3" height="1" fill="#ff0000"/>
<rect x="40" y="521" width="3" height="1" fill="#ff0000"/>
<rect x="46" y="521" width="3" height="1" fill="#ff0000"/>
<rect x="52" y="521" width="3" height="1" fill="#ff0000"/>
<rect x="58" y="521" width="3" height="1" fill="#ff0000"/>
<rect x="64" y="521" width="3" height="1" fill="#ff0000"/>
<rect x="70" y="521" width="3" height="1" fill="#ff0000"/>
<rect x="76" y="521" width="3" height="1" fill="#ff0000"/>
<rect x="82" y="521" width="3" height="1" fill="#ff0000"/>
<rect x="88" y="521" width="3" height="1" fill="#ff0000"/>
<rect x="94" y="521" width="3" height="1" fill="#ff0000"/>
<rect x="100" y="521" width="3" height="1" fill="#ff0000"/>
<rect x="106" y="521" width="3" height="1" fill="#ff0000"/>
<rect x="112" y="521" width="3" height="1" fill="#ff0000"/>
<rect x="118" y="521" width="3" height="1" fill="#ff0000"/>
<rect x="124" y="521" width="3" height="1" fill="#ff0000"/>
<rect x="130" y="521" width="3" height="1" fill="#ff0000"/>
<rect x="136" y="521" width="3" height="1" fill="#ff0000"/>
<rect x="142" y="521" width="3" height="1" fill="#ff0000"/>
<rect x="148" y="521" width="3" height="1" fill="#ff0000"/>
<rect x="154" y="521" width="3" height="1" fill="#ff0000"/>
<rect x="160" y="521" width="3" height="1" fill="#ff0000"/>
<rect x="166" y="521" width="3" height="1" fill="#ff0000"/>
<rect x="172" y="521" width="3" height="1" fill="#ff0000"/>
<rect x="178" y="521" width="3" height="1" fill="#ff0000"/>
<rect x="184" y="521" width="3" height="1" fill="#ff0000"/>
<rect x="190" y="521" width="3" height="1" fill="#ff0000"/>
<rect x="196" y="521" width="3" height="1" fill="#ff0000"/>
<rect x="202" y="521" width="3" height="1" fill="#ff0000"/>
<rect x="208" y="521" width="3" height="1" fill="#ff0000"/>
<rect x="214" y="521" width="3" height="1" fill="#ff0000"/>
<rect x="220" y="521" width="3" height="1" fill="#ff0000"/>
<rect x="226" y="521" width="3" height="1" fill="#ff0000"/>
<rect x="232" y="521" width="3" height="1" fill="#ff0000"/>
<rect x="238" y="521" width="3" height="1" fill="#ff0000"/>
<rect x="244" y="521" width="3" height="1" fill="#ff0000"/>
<rect x="250" y="521" width="3" height="1" fill="#ff0000"/>
<rect x="256" y="521" width="3" height="1" fill="#ff0000"/>
<rect x="262" y="521" width="3" height="1" fill="#ff0000"/>
<rect x="268" y="521" width="3" height="1" fill="#ff0000"/>
<rect x="274" y="521" width="3" height="1" fill="#ff0000"/>
<rect x="280" y="521" width="3" height="1" fill="#ff0000"/>
<rect x="286" y="521" width="3" height="1" fill="#ff0000"/>
<rect x="292" y="521" width="3" height="1" fill="#ff0000"/>
<rect x="298" y="521" width="3" height="1" fill="#ff0000"/>
<rect x="304" y="521" width="3" height="1" fill="#ff0000"/>
<rect x="310" y="521" width="3" height="1" fill="#ff0000"/>
<rect x="316" y="521" width="3" height="1" fill="#ff0000"/>
<rect x="322" y="521" width="3" height="1" fill="#ff0000"/>
<rect x="328" y="521" width="3" height="1" fill="#ff0000"/>
<rect x="334" y="521" width="3" height="1" fill="#ff0000"/>
<rect x="340" y="521" width="3" height="1" fill="#ff0000"/>
<rect x="346" y="521" width="3" height="1" fill="#ff0000"/>
<rect x="352" y="521" width="3" height="1" fill="#ff0000"/>
<rect x="358" y="521" width="3" height="1" fill="#ff0000"/>
<rect x="364" y="521" width="3" height="1" fill="#ff0000"/>
<rect x="370" y="521" width="3" height="1" fill="#ff0000"/>
<rect x="376" y="521" width="3" height="1" fill="#ff0000"/>
<rect x="382" y="521" width="3" height="1" fill="#ff0000"/>
<rect x="388" y="521" width="3" height="1" fill="#ff0000"/>
<rect x="394" y="521" width="3" height="1" fill="#ff0000"/>
<rect x="400" y="521" width="3" height="1" fill="#ff0000"/>
<rect x="406" y="521" width="3" height="1" fill="#ff0000"/>
<rect x="412" y="521" width="3" height="1" fill="#ff0000"/>
<rect x="418" y="521" width="3" height="1" fill="#ff0000"/>
<rect x="424" y="521" width="3" height="1" fill="#ff0000"/>
<rect x="430" y="521" width="3" height="1" fill="#ff0000"/>
<rect x="436" y="521" width="3" height="1" fill="#ff0000"/>
<rect x="442" y="521" width="3" height="1" fill="#ff0000"/>
<rect x="448" y="521" width="3" height="1" fill="#ff0000"/>
<rect x="454" y="521" width="3" height="1" fill="#ff0000"/>
<rect x="460" y="521" width="3" height="1" fill="#ff0000"/>
<rect x="466" y="521" width="3" height="1" fill="#ff0000"/>
<rect x="472" y="521" width="3" height="1" fill="#ff0000"/>
<rect x="478" y="521" width="3" height="1" fill="#ff0000"/>
<rect x="484" y="521" width="3" height="1" fill="#ff0000"/>
<rect x="490" y="521" width="3" height="1" fill="#ff0000"/>
<rect x="496" y="521" width="3" height="1" fill="#ff0000"/>
<rect x="502" y="521" width="3" height="1" fill="#ff0000"/>
<rect x="508" y="521" width="3" height="1" fill="#ff0000"/>
<rect x="514" y="521" width="3" height="1" fill="#ff0000"/>
<rect x="520" y="521" width="3" height="1" fill="#ff0000"/>
<rect x="526" y="521" width="3" height="1" fill="#ff0000"/>
<rect x="532" y="521" width="3" height="1" fill="#ff0000"/>
<rect x="538" y="521" width="3" height="1" fill="#ff0000"/>
<rect x="544" y="521" width="3" height="1" fill="#ff0000"/>
<rect x="550" y="521" width="3" height="1" fill="#ff0000"/>
<rect x="556" y="521" width="3" height="1" fill="#ff0000"/>
<rect x="562" y="521" width="3" height="1" fill="#ff0000"/>
<rect x="568" y="521" width="3" height="1" fill="#ff0000"/>
<rect x="574" y="521" width="3" height="1" fill="#ff0000"/>
<rect x="580" y="521" width="3" height="1" fill="#ff0000"/>
<rect x="586" y="521" width="3" height="1" fill="#ff0000"/>
<rect x="592" y="521" width="3" height="1" fill="#ff0000"/>
<rect x="598" y="521" width="3" height="1" fill="#ff0000"/>
<rect x="604" y="521" width="3" height="1" fill="#ff0000"/>
<rect x="610" y="521" width="3" height="1" fill="#ff0000"/>
<rect x="616" y="521" width="3" height="1" fill="#ff0000"/>
<rect x="622" y="521" width="3" height="1" fill="#ff0000"/>
<rect x="628" y="521" width="3" height="1" fill="#ff0000"/>
<rect x="634" y="521" width="3" height="1" fill="#ff0000"/>
<rect x="640" y="521" width="3" height="1" fill="#ff0000"/>
<rect x="646" y="521" width="3" height="1" fill="#ff0000"/>
<rect x="652" y="521" width="3" height="1" fill="#ff0000"/>
<rect x="658" y="521" width="3" height="1" fill="#ff0000"/>
<rect x="664" y="521" width="3" height="1" fill="#ff0000"/>
<rect x="670" y="521" width="3" height="1" fill="#ff0000"/>
<rect x="676" y="521" width="3" height="1" fill="#ff0000"/>
<rect x="682" y="521" width="3" height="1" fill="#ff0000"/>
<rect x="688" y="521" width="3" height="1" fill="#ff0000"/>
<rect x="694" y="521" width="3" height="1" fill="#ff0000"/>
<rect x="700" y="521" width="3" height="1" fill="#ff0000"/>
<rect x="706" y="521" width="3" height="1" fill="#ff0000"/>
<rect x="712" y="521" width="3" height="1" fill="#ff0000"/>
<rect x="718" y="521" width="3" height="1" fill="#ff0000"/>
<rect x="724" y="521" width="3" height="1" fill="#ff0000"/>
<rect x="730" y="521" width="3" height="1" fill="#ff0000"/>
<rect x="736" y="521" width="3" height="1" fill="#ff0000"/>
<rect x="742" y="521" width="3" height="1" fill="#ff0000"/>
<rect x="748" y="521" width="3" height="1" fill="#ff0000"/>
<rect x="754" y="521" width="3" height="1" fill="#ff0000"/>
<rect x="760" y="521" width="3" height="1" fill="#ff0000"/>
<rect x="766" y="521" width="3" height="1" fill="#ff0000"/>
<rect x="772" y="521" width="3" height="1" fill="#ff0000"/>
<rect x="778" y="521" width="3" height="1" fill="#ff0000"/>
<rect x="784" y="521" width="3" height="1" fill="#ff0000"/>
<rect x="790" y="521" width="3" height="1" fill="#ff0000"/>
<rect x="796" y="521" width="3" height="1" fill="#ff0000"/>
<rect x="802" y="521" width="3" height="1" fill="#ff0000"/>
<rect x="808" y="521" width="3" height="1" fill="#ff0000"/>
<rect x="814" y="521" width="3" height="1" fill="#ff0000"/>
<rect x="820" y="521" width="3" height="1" fill="#ff0000"/>
<rect x="826" y="521" width="3" height="1" fill="#ff0000"/>
<polygon points="78,190 81.6,190 81.6,199.2 85.8,195 85.8,198.8 80.3,204.4 79.3,204.4 73.8,198.8 73.8,195 78,199.2" fill="#ff0000" shape-rendering="geometricPrecision"/>
<polygon points="274,163 277.6,163 277.6,172.2 281.8,168 281.8,171.8 276.3,177.4 275.3,177.4 269.8,171.8 269.8,168 274,172.2" fill="#ff0000" shape-rendering="geometricPrecision"/>
<polygon points="366,177 369.6,177 369.6,186.2 373.8,182 373.8,185.8 368.3,191.4 367.3,191.4 361.8,185.8 361.8,182 366,186.2" fill="#ff0000" shape-rendering="geometricPrecision"/>
<polygon points="386,245 389.6,245 389.6,254.2 393.8,250 393.8,253.8 388.3,259.4 387.3,259.4 381.8,253.8 381.8,250 386,254.2" fill="#ff0000" shape-rendering="geometricPrecision"/>
<polygon points="402,334 405.6,334 405.6,343.2 409.8,339 409.8,342.8 404.3,348.4 403.3,348.4 397.8,342.8 397.8,339 402,343.2" fill="#ff0000" shape-rendering="geometricPrecision"/>
<polygon points="410,364 413.6,364 413.6,373.2 417.8,369 417.8,372.8 412.3,378.4 411.3,378.4 405.8,372.8 405.8,369 410,373.2" fill="#ff0000" shape-rendering="geometricPrecision"/>
<polygon points="614,383 617.6,383 617.6,392.2 621.8,388 621.8,391.8 616.3,397.4 615.3,397.4 609.8,391.8 609.8,388 614,392.2" fill="#ff0000" shape-rendering="geometricPrecision"/>
<polygon points="658,436 661.6,436 661.6,445.2 665.8,441 665.8,444.8 660.3,450.4 659.3,450.4 653.8,444.8 653.8,441 658,445.2" fill="#ff0000" shape-rendering="geometricPrecision"/>
<polygon points="23.2,396.5 28.8,402.3 28.8,406.1 24.6,401.9 24.6,410.5 21,410.5 21,401.9 16.8,406.1 16.8,402.3 22.4,396.5" fill="#00ff00" shape-rendering="geometricPrecision"/>
<polygon points="47.2,322.5 52.8,328.3 52.8,332.1 48.6,327.9 48.6,336.5 45,336.5 45,327.9 40.8,332.1 40.8,328.3 46.4,322.5" fill="#00ff00" shape-rendering="geometricPrecision"/>
<polygon points="119.2,317.5 124.8,323.3 124.8,327.1 120.6,322.9 120.6,331.5 117,331.5 117,322.9 112.8,327.1 112.8,323.3 118.4,317.5" fill="#00ff00" shape-rendering="geometricPrecision"/>
<polygon points="239.2,228.5 244.8,234.3 244.8,238.1 240.6,233.9 240.6,242.5 237,242.5 237,233.9 232.8,238.1 232.8,234.3 238.4,228.5" fill="#00ff00" shape-rendering="geometricPrecision"/>
<polygon points="343.2,266.5 348.8,272.3 348.8,276.1 344.6,271.9 344.6,280.5 341,280.5 341,271.9 336.8,276.1 336.8,272.3 342.4,266.5" fill="#00ff00" shape-rendering="geometricPrecision"/>
<polygon points="543.2,440.5 548.8,446.3 548.8,450.1 544.6,445.9 544.6,454.5 541,454.5 541,445.9 536.8,450.1 536.8,446.3 542.4,440.5" fill="#00ff00" shape-rendering="geometricPrecision"/>
<polygon points="711.2,482.5 716.8,488.3 716.8,492.1 712.6,487.9 712.6,496.5 709,496.5 709,487.9 704.8,492.1 704.8,488.3 710.4,482.5" fill="#00ff00" shape-rendering="geometricPrecision"/>
<polygon points="727.2,423.5 732.8,429.3 732.8,433.1 728.6,428.9 728.6,437.5 725,437.5 725,428.9 720.8,433.1 720.8,429.3 726.4,423.5" fill="#00ff00" shape-rendering="geometricPrecision"/>
<polygon points="815.2,312.5 820.8,318.3 820.8,322.1 816.6,317.9 816.6,326.5 813,326.5 813,317.9 808.8,322.1 808.8,318.3 814.4,312.5" fill="#00ff00" shape-rendering="geometricPrecision"/>
<rect x="16" y="106" width="2" height="479" fill="#000"/>
<rect x="18" y="105" width="1" height="481" fill="#fff"/>
<rect x="19" y="190" width="808" height="2" fill="#9acd32"/>
<path d="M64.4 148.1 l5.2 4.8 M69.6 148.1 l-5.2 4.8" stroke="#fff" stroke-width="1.5" shape-rendering="geometricPrecision"/>
<path d="M32.4 264.6 l5.2 4.8 M37.6 264.6 l-5.2 4.8" stroke="#fff" stroke-width="1.5" shape-rendering="geometricPrecision"/>
<path d="M352.4 159.6 l5.2 4.8 M357.6 159.6 l-5.2 4.8" stroke="#fff" stroke-width="1.5" shape-rendering="geometricPrecision"/>
<path d="M628.4 489.6 l5.2 4.8 M633.6 489.6 l-5.2 4.8" stroke="#fff" stroke-width="1.5" shape-rendering="geometricPrecision"/>
<path d="M748.9 255.6 l5.2 4.8 M754.1 255.6 l-5.2 4.8" stroke="#fff" stroke-width="1.5" shape-rendering="geometricPrecision"/>
<path d="M22 112 h8 l-4 4.5z" fill="#fff" shape-rendering="geometricPrecision"/>
<text x="34" y="117" font-size="9" fill="#fff" textLength="55" lengthAdjust="spacingAndGlyphs">EURUSD,M1</text>
<text x="95.4" y="117" font-size="9" fill="#fff" textLength="140.5" lengthAdjust="spacingAndGlyphs">1.08396 1.08398 1.08378 1.08386</text>
<path d="M831.8 106 h9.6 l-4.8 5z" fill="#708090" shape-rendering="geometricPrecision"/>
<rect x="22" y="589" width="3" height="20" fill="#ff0000"/>
<rect x="26" y="589" width="3" height="20" fill="#ff0000"/>
<rect x="38" y="589" width="3" height="20" fill="#ff8c00"/>
<rect x="42" y="589" width="3" height="20" fill="#ff8c00"/>
<rect x="46" y="589" width="3" height="20" fill="#ff8c00"/>
<rect x="50" y="589" width="3" height="20" fill="#ff8c00"/>
<rect x="54" y="589" width="3" height="20" fill="#ff8c00"/>
<rect x="58" y="589" width="3" height="20" fill="#ff8c00"/>
<rect x="62" y="589" width="3" height="20" fill="#ffff00"/>
<rect x="66" y="589" width="3" height="20" fill="#ff8c00"/>
<rect x="70" y="589" width="3" height="20" fill="#ff8c00"/>
<rect x="74" y="589" width="3" height="20" fill="#ff8c00"/>
<rect x="98" y="589" width="3" height="20" fill="#ff8c00"/>
<rect x="102" y="589" width="3" height="20" fill="#ff8c00"/>
<rect x="106" y="589" width="3" height="20" fill="#ff8c00"/>
<rect x="114" y="589" width="3" height="20" fill="#ff8c00"/>
<rect x="118" y="589" width="3" height="20" fill="#ff8c00"/>
<rect x="134" y="589" width="3" height="20" fill="#ff8c00"/>
<rect x="142" y="589" width="3" height="20" fill="#ffff00"/>
<rect x="154" y="589" width="3" height="20" fill="#ffff00"/>
<rect x="158" y="589" width="3" height="20" fill="#ff8c00"/>
<rect x="170" y="589" width="3" height="20" fill="#ffff00"/>
<rect x="174" y="589" width="3" height="20" fill="#ff0000"/>
<rect x="178" y="589" width="3" height="20" fill="#ff0000"/>
<rect x="182" y="589" width="3" height="20" fill="#ff0000"/>
<rect x="186" y="589" width="3" height="20" fill="#ff0000"/>
<rect x="190" y="589" width="3" height="20" fill="#ff0000"/>
<rect x="194" y="589" width="3" height="20" fill="#ffff00"/>
<rect x="198" y="589" width="3" height="20" fill="#ffff00"/>
<rect x="206" y="589" width="3" height="20" fill="#ffff00"/>
<rect x="210" y="589" width="3" height="20" fill="#ffff00"/>
<rect x="214" y="589" width="3" height="20" fill="#ffff00"/>
<rect x="218" y="589" width="3" height="20" fill="#ff0000"/>
<rect x="222" y="589" width="3" height="20" fill="#ff0000"/>
<rect x="226" y="589" width="3" height="20" fill="#ffff00"/>
<rect x="230" y="589" width="3" height="20" fill="#ffff00"/>
<rect x="234" y="589" width="3" height="20" fill="#ffff00"/>
<rect x="238" y="589" width="3" height="20" fill="#ff0000"/>
<rect x="242" y="589" width="3" height="20" fill="#ff0000"/>
<rect x="246" y="589" width="3" height="20" fill="#ffff00"/>
<rect x="254" y="589" width="3" height="20" fill="#ffff00"/>
<rect x="258" y="589" width="3" height="20" fill="#ff0000"/>
<rect x="266" y="589" width="3" height="20" fill="#ff0000"/>
<rect x="270" y="589" width="3" height="20" fill="#ff0000"/>
<rect x="282" y="589" width="3" height="20" fill="#00ff00"/>
<rect x="286" y="589" width="3" height="20" fill="#00ff00"/>
<rect x="290" y="589" width="3" height="20" fill="#00ff00"/>
<rect x="294" y="589" width="3" height="20" fill="#00ff00"/>
<rect x="298" y="589" width="3" height="20" fill="#00ff00"/>
<rect x="302" y="589" width="3" height="20" fill="#00ff00"/>
<rect x="306" y="589" width="3" height="20" fill="#00ff00"/>
<rect x="310" y="589" width="3" height="20" fill="#00ff00"/>
<rect x="314" y="589" width="3" height="20" fill="#00ff00"/>
<rect x="318" y="589" width="3" height="20" fill="#00ff00"/>
<rect x="326" y="589" width="3" height="20" fill="#ff0000"/>
<rect x="330" y="589" width="3" height="20" fill="#ff0000"/>
<rect x="334" y="589" width="3" height="20" fill="#ff0000"/>
<rect x="338" y="589" width="3" height="20" fill="#ff0000"/>
<rect x="342" y="589" width="3" height="20" fill="#ff0000"/>
<rect x="346" y="589" width="3" height="20" fill="#ff0000"/>
<rect x="350" y="589" width="3" height="20" fill="#ff0000"/>
<rect x="354" y="589" width="3" height="20" fill="#ff0000"/>
<rect x="358" y="589" width="3" height="20" fill="#ff0000"/>
<rect x="362" y="589" width="3" height="20" fill="#ff0000"/>
<rect x="370" y="589" width="3" height="20" fill="#00ff00"/>
<rect x="374" y="589" width="3" height="20" fill="#00ff00"/>
<rect x="378" y="589" width="3" height="20" fill="#ffff00"/>
<rect x="382" y="589" width="3" height="20" fill="#00ff00"/>
<rect x="386" y="589" width="3" height="20" fill="#00ff00"/>
<rect x="390" y="589" width="3" height="20" fill="#00ff00"/>
<rect x="394" y="589" width="3" height="20" fill="#00ff00"/>
<rect x="398" y="589" width="3" height="20" fill="#00ff00"/>
<rect x="402" y="589" width="3" height="20" fill="#00ff00"/>
<rect x="406" y="589" width="3" height="20" fill="#00ff00"/>
<rect x="410" y="589" width="3" height="20" fill="#00ff00"/>
<rect x="414" y="589" width="3" height="20" fill="#00ff00"/>
<rect x="418" y="589" width="3" height="20" fill="#00ff00"/>
<rect x="422" y="589" width="3" height="20" fill="#00ff00"/>
<rect x="426" y="589" width="3" height="20" fill="#00ff00"/>
<rect x="430" y="589" width="3" height="20" fill="#00ff00"/>
<rect x="434" y="589" width="3" height="20" fill="#00ff00"/>
<rect x="438" y="589" width="3" height="20" fill="#ffff00"/>
<rect x="442" y="589" width="3" height="20" fill="#ffff00"/>
<rect x="446" y="589" width="3" height="20" fill="#ffff00"/>
<rect x="450" y="589" width="3" height="20" fill="#ffff00"/>
<rect x="454" y="589" width="3" height="20" fill="#00ff00"/>
<rect x="458" y="589" width="3" height="20" fill="#00ff00"/>
<rect x="462" y="589" width="3" height="20" fill="#00ff00"/>
<rect x="466" y="589" width="3" height="20" fill="#00ff00"/>
<rect x="470" y="589" width="3" height="20" fill="#00ff00"/>
<rect x="474" y="589" width="3" height="20" fill="#00ff00"/>
<rect x="478" y="589" width="3" height="20" fill="#00ff00"/>
<rect x="482" y="589" width="3" height="20" fill="#00ff00"/>
<rect x="486" y="589" width="3" height="20" fill="#00ff00"/>
<rect x="490" y="589" width="3" height="20" fill="#00ff00"/>
<rect x="494" y="589" width="3" height="20" fill="#00ff00"/>
<rect x="498" y="589" width="3" height="20" fill="#00ff00"/>
<rect x="502" y="589" width="3" height="20" fill="#00ff00"/>
<rect x="506" y="589" width="3" height="20" fill="#00ff00"/>
<rect x="510" y="589" width="3" height="20" fill="#00ff00"/>
<rect x="514" y="589" width="3" height="20" fill="#00ff00"/>
<rect x="518" y="589" width="3" height="20" fill="#00ff00"/>
<rect x="522" y="589" width="3" height="20" fill="#00ff00"/>
<rect x="526" y="589" width="3" height="20" fill="#00ff00"/>
<rect x="530" y="589" width="3" height="20" fill="#00ff00"/>
<rect x="534" y="589" width="3" height="20" fill="#00ff00"/>
<rect x="550" y="589" width="3" height="20" fill="#00ff00"/>
<rect x="562" y="589" width="3" height="20" fill="#00ff00"/>
<rect x="570" y="589" width="3" height="20" fill="#ff8c00"/>
<rect x="578" y="589" width="3" height="20" fill="#ff8c00"/>
<rect x="582" y="589" width="3" height="20" fill="#ff8c00"/>
<rect x="586" y="589" width="3" height="20" fill="#ff8c00"/>
<rect x="590" y="589" width="3" height="20" fill="#ff8c00"/>
<rect x="594" y="589" width="3" height="20" fill="#ff8c00"/>
<rect x="598" y="589" width="3" height="20" fill="#ff8c00"/>
<rect x="602" y="589" width="3" height="20" fill="#ff8c00"/>
<rect x="614" y="589" width="3" height="20" fill="#ffff00"/>
<rect x="618" y="589" width="3" height="20" fill="#00ff00"/>
<rect x="622" y="589" width="3" height="20" fill="#ffff00"/>
<rect x="626" y="589" width="3" height="20" fill="#ffff00"/>
<rect x="630" y="589" width="3" height="20" fill="#ffff00"/>
<rect x="634" y="589" width="3" height="20" fill="#ffff00"/>
<rect x="638" y="589" width="3" height="20" fill="#ffff00"/>
<rect x="642" y="589" width="3" height="20" fill="#ffff00"/>
<rect x="646" y="589" width="3" height="20" fill="#ffff00"/>
<rect x="650" y="589" width="3" height="20" fill="#ffff00"/>
<rect x="658" y="589" width="3" height="20" fill="#ffff00"/>
<rect x="662" y="589" width="3" height="20" fill="#ffff00"/>
<rect x="686" y="589" width="3" height="20" fill="#00ff00"/>
<rect x="690" y="589" width="3" height="20" fill="#00ff00"/>
<rect x="694" y="589" width="3" height="20" fill="#00ff00"/>
<rect x="698" y="589" width="3" height="20" fill="#00ff00"/>
<rect x="702" y="589" width="3" height="20" fill="#00ff00"/>
<rect x="710" y="589" width="3" height="20" fill="#ff8c00"/>
<rect x="714" y="589" width="3" height="20" fill="#ff8c00"/>
<rect x="718" y="589" width="3" height="20" fill="#ff8c00"/>
<rect x="722" y="589" width="3" height="20" fill="#ff8c00"/>
<rect x="726" y="589" width="3" height="20" fill="#ff8c00"/>
<rect x="730" y="589" width="3" height="20" fill="#ff8c00"/>
<rect x="734" y="589" width="3" height="20" fill="#ff8c00"/>
<rect x="738" y="589" width="3" height="20" fill="#ff8c00"/>
<rect x="742" y="589" width="3" height="20" fill="#ff8c00"/>
<rect x="746" y="589" width="3" height="20" fill="#ff8c00"/>
<rect x="750" y="589" width="3" height="20" fill="#ff8c00"/>
<rect x="754" y="589" width="3" height="20" fill="#ff8c00"/>
<rect x="758" y="589" width="3" height="20" fill="#ff8c00"/>
<rect x="762" y="589" width="3" height="20" fill="#ff8c00"/>
<rect x="766" y="589" width="3" height="20" fill="#ff8c00"/>
<rect x="770" y="589" width="3" height="20" fill="#ff8c00"/>
<rect x="774" y="589" width="3" height="20" fill="#ff8c00"/>
<rect x="778" y="589" width="3" height="20" fill="#ff8c00"/>
<rect x="782" y="589" width="3" height="20" fill="#ff8c00"/>
<rect x="786" y="589" width="3" height="20" fill="#ff8c00"/>
<rect x="790" y="589" width="3" height="20" fill="#ffff00"/>
<rect x="794" y="589" width="3" height="20" fill="#ff8c00"/>
<rect x="798" y="589" width="3" height="20" fill="#ff8c00"/>
<rect x="802" y="589" width="3" height="20" fill="#ff8c00"/>
<rect x="810" y="589" width="3" height="20" fill="#ff8c00"/>
<rect x="814" y="589" width="3" height="20" fill="#ff8c00"/>
<rect x="818" y="589" width="3" height="20" fill="#ff8c00"/>
<rect x="822" y="589" width="3" height="20" fill="#ff8c00"/>
<rect x="826" y="589" width="3" height="20" fill="#ffff00"/>
<rect x="22" y="615" width="3" height="20" fill="#00ff00"/>
<rect x="26" y="615" width="3" height="20" fill="#00ff00"/>
<rect x="30" y="615" width="3" height="20" fill="#00ff00"/>
<rect x="34" y="615" width="3" height="20" fill="#00ff00"/>
<rect x="38" y="615" width="3" height="20" fill="#00ff00"/>
<rect x="42" y="615" width="3" height="20" fill="#00ff00"/>
<rect x="46" y="615" width="3" height="20" fill="#00ff00"/>
<rect x="50" y="615" width="3" height="20" fill="#00ff00"/>
<rect x="54" y="615" width="3" height="20" fill="#00ff00"/>
<rect x="58" y="615" width="3" height="20" fill="#00ff00"/>
<rect x="62" y="615" width="3" height="20" fill="#00ff00"/>
<rect x="70" y="615" width="3" height="20" fill="#00ff00"/>
<rect x="78" y="615" width="3" height="20" fill="#ff0000"/>
<rect x="82" y="615" width="3" height="20" fill="#ff0000"/>
<rect x="86" y="615" width="3" height="20" fill="#ff0000"/>
<rect x="90" y="615" width="3" height="20" fill="#ff0000"/>
<rect x="94" y="615" width="3" height="20" fill="#ff0000"/>
<rect x="98" y="615" width="3" height="20" fill="#ff0000"/>
<rect x="102" y="615" width="3" height="20" fill="#ff0000"/>
<rect x="106" y="615" width="3" height="20" fill="#ff0000"/>
<rect x="110" y="615" width="3" height="20" fill="#00ff00"/>
<rect x="114" y="615" width="3" height="20" fill="#00ff00"/>
<rect x="118" y="615" width="3" height="20" fill="#00ff00"/>
<rect x="122" y="615" width="3" height="20" fill="#00ff00"/>
<rect x="126" y="615" width="3" height="20" fill="#00ff00"/>
<rect x="130" y="615" width="3" height="20" fill="#00ff00"/>
<rect x="134" y="615" width="3" height="20" fill="#00ff00"/>
<rect x="138" y="615" width="3" height="20" fill="#00ff00"/>
<rect x="142" y="615" width="3" height="20" fill="#00ff00"/>
<rect x="146" y="615" width="3" height="20" fill="#00ff00"/>
<rect x="150" y="615" width="3" height="20" fill="#00ff00"/>
<rect x="154" y="615" width="3" height="20" fill="#00ff00"/>
<rect x="158" y="615" width="3" height="20" fill="#00ff00"/>
<rect x="162" y="615" width="3" height="20" fill="#00ff00"/>
<rect x="170" y="615" width="3" height="20" fill="#00ff00"/>
<rect x="174" y="615" width="3" height="20" fill="#00ff00"/>
<rect x="178" y="615" width="3" height="20" fill="#00ff00"/>
<rect x="182" y="615" width="3" height="20" fill="#00ff00"/>
<rect x="190" y="615" width="3" height="20" fill="#00ff00"/>
<rect x="194" y="615" width="3" height="20" fill="#00ff00"/>
<rect x="198" y="615" width="3" height="20" fill="#00ff00"/>
<rect x="202" y="615" width="3" height="20" fill="#00ff00"/>
<rect x="214" y="615" width="3" height="20" fill="#00ff00"/>
<rect x="222" y="615" width="3" height="20" fill="#00ff00"/>
<rect x="226" y="615" width="3" height="20" fill="#00ff00"/>
<rect x="230" y="615" width="3" height="20" fill="#00ff00"/>
<rect x="234" y="615" width="3" height="20" fill="#00ff00"/>
<rect x="238" y="615" width="3" height="20" fill="#00ff00"/>
<rect x="242" y="615" width="3" height="20" fill="#00ff00"/>
<rect x="246" y="615" width="3" height="20" fill="#00ff00"/>
<rect x="250" y="615" width="3" height="20" fill="#00ff00"/>
<rect x="254" y="615" width="3" height="20" fill="#00ff00"/>
<rect x="258" y="615" width="3" height="20" fill="#00ff00"/>
<rect x="262" y="615" width="3" height="20" fill="#00ff00"/>
<rect x="270" y="615" width="3" height="20" fill="#00ff00"/>
<rect x="274" y="615" width="3" height="20" fill="#ffff00"/>
<rect x="278" y="615" width="3" height="20" fill="#ffff00"/>
<rect x="282" y="615" width="3" height="20" fill="#ff8c00"/>
<rect x="286" y="615" width="3" height="20" fill="#ff8c00"/>
<rect x="294" y="615" width="3" height="20" fill="#ff0000"/>
<rect x="298" y="615" width="3" height="20" fill="#ff8c00"/>
<rect x="302" y="615" width="3" height="20" fill="#ff8c00"/>
<rect x="306" y="615" width="3" height="20" fill="#ff8c00"/>
<rect x="310" y="615" width="3" height="20" fill="#ff8c00"/>
<rect x="314" y="615" width="3" height="20" fill="#ff8c00"/>
<rect x="318" y="615" width="3" height="20" fill="#ff8c00"/>
<rect x="322" y="615" width="3" height="20" fill="#ff8c00"/>
<rect x="330" y="615" width="3" height="20" fill="#ffff00"/>
<rect x="334" y="615" width="3" height="20" fill="#ffff00"/>
<rect x="338" y="615" width="3" height="20" fill="#00ff00"/>
<rect x="346" y="615" width="3" height="20" fill="#00ff00"/>
<rect x="350" y="615" width="3" height="20" fill="#00ff00"/>
<rect x="354" y="615" width="3" height="20" fill="#ffff00"/>
<rect x="358" y="615" width="3" height="20" fill="#ffff00"/>
<rect x="362" y="615" width="3" height="20" fill="#ffff00"/>
<rect x="366" y="615" width="3" height="20" fill="#ff8c00"/>
<rect x="370" y="615" width="3" height="20" fill="#ff8c00"/>
<rect x="374" y="615" width="3" height="20" fill="#ff8c00"/>
<rect x="378" y="615" width="3" height="20" fill="#ff8c00"/>
<rect x="386" y="615" width="3" height="20" fill="#ff8c00"/>
<rect x="390" y="615" width="3" height="20" fill="#ff8c00"/>
<rect x="394" y="615" width="3" height="20" fill="#ff8c00"/>
<rect x="398" y="615" width="3" height="20" fill="#ff8c00"/>
<rect x="402" y="615" width="3" height="20" fill="#ff8c00"/>
<rect x="406" y="615" width="3" height="20" fill="#ff8c00"/>
<rect x="410" y="615" width="3" height="20" fill="#ff8c00"/>
<rect x="414" y="615" width="3" height="20" fill="#ff8c00"/>
<rect x="418" y="615" width="3" height="20" fill="#ff8c00"/>
<rect x="422" y="615" width="3" height="20" fill="#ff8c00"/>
<rect x="426" y="615" width="3" height="20" fill="#ff8c00"/>
<rect x="430" y="615" width="3" height="20" fill="#ff8c00"/>
<rect x="434" y="615" width="3" height="20" fill="#ff8c00"/>
<rect x="438" y="615" width="3" height="20" fill="#ff8c00"/>
<rect x="442" y="615" width="3" height="20" fill="#ff0000"/>
<rect x="454" y="615" width="3" height="20" fill="#ff8c00"/>
<rect x="458" y="615" width="3" height="20" fill="#ff8c00"/>
<rect x="462" y="615" width="3" height="20" fill="#ff8c00"/>
<rect x="466" y="615" width="3" height="20" fill="#ff8c00"/>
<rect x="470" y="615" width="3" height="20" fill="#ff8c00"/>
<rect x="474" y="615" width="3" height="20" fill="#ff8c00"/>
<rect x="478" y="615" width="3" height="20" fill="#ff8c00"/>
<rect x="482" y="615" width="3" height="20" fill="#ff8c00"/>
<rect x="486" y="615" width="3" height="20" fill="#ff8c00"/>
<rect x="518" y="615" width="3" height="20" fill="#ff0000"/>
<rect x="522" y="615" width="3" height="20" fill="#ffff00"/>
<rect x="526" y="615" width="3" height="20" fill="#ff0000"/>
<rect x="530" y="615" width="3" height="20" fill="#ff0000"/>
<rect x="534" y="615" width="3" height="20" fill="#ff0000"/>
<rect x="538" y="615" width="3" height="20" fill="#ffff00"/>
<rect x="542" y="615" width="3" height="20" fill="#ffff00"/>
<rect x="546" y="615" width="3" height="20" fill="#ffff00"/>
<rect x="550" y="615" width="3" height="20" fill="#ff0000"/>
<rect x="554" y="615" width="3" height="20" fill="#ff0000"/>
<rect x="562" y="615" width="3" height="20" fill="#ff0000"/>
<rect x="566" y="615" width="3" height="20" fill="#ffff00"/>
<rect x="574" y="615" width="3" height="20" fill="#ff0000"/>
<rect x="594" y="615" width="3" height="20" fill="#ffff00"/>
<rect x="598" y="615" width="3" height="20" fill="#ff0000"/>
<rect x="602" y="615" width="3" height="20" fill="#ff0000"/>
<rect x="606" y="615" width="3" height="20" fill="#ff0000"/>
<rect x="610" y="615" width="3" height="20" fill="#ff0000"/>
<rect x="614" y="615" width="3" height="20" fill="#ff0000"/>
<rect x="626" y="615" width="3" height="20" fill="#ff8c00"/>
<rect x="634" y="615" width="3" height="20" fill="#ff8c00"/>
<rect x="638" y="615" width="3" height="20" fill="#ff8c00"/>
<rect x="642" y="615" width="3" height="20" fill="#ff8c00"/>
<rect x="646" y="615" width="3" height="20" fill="#ff8c00"/>
<rect x="650" y="615" width="3" height="20" fill="#ff8c00"/>
<rect x="654" y="615" width="3" height="20" fill="#ff8c00"/>
<rect x="658" y="615" width="3" height="20" fill="#ff8c00"/>
<rect x="662" y="615" width="3" height="20" fill="#ff8c00"/>
<rect x="666" y="615" width="3" height="20" fill="#ff8c00"/>
<rect x="670" y="615" width="3" height="20" fill="#ff8c00"/>
<rect x="674" y="615" width="3" height="20" fill="#ff8c00"/>
<rect x="678" y="615" width="3" height="20" fill="#ff8c00"/>
<rect x="694" y="615" width="3" height="20" fill="#ff8c00"/>
<rect x="706" y="615" width="3" height="20" fill="#ff0000"/>
<rect x="710" y="615" width="3" height="20" fill="#ffff00"/>
<rect x="714" y="615" width="3" height="20" fill="#ffff00"/>
<rect x="718" y="615" width="3" height="20" fill="#ffff00"/>
<rect x="722" y="615" width="3" height="20" fill="#ffff00"/>
<rect x="726" y="615" width="3" height="20" fill="#ffff00"/>
<rect x="730" y="615" width="3" height="20" fill="#ffff00"/>
<rect x="734" y="615" width="3" height="20" fill="#ffff00"/>
<rect x="738" y="615" width="3" height="20" fill="#ffff00"/>
<rect x="742" y="615" width="3" height="20" fill="#00ff00"/>
<rect x="746" y="615" width="3" height="20" fill="#00ff00"/>
<rect x="750" y="615" width="3" height="20" fill="#00ff00"/>
<rect x="754" y="615" width="3" height="20" fill="#00ff00"/>
<rect x="758" y="615" width="3" height="20" fill="#00ff00"/>
<rect x="762" y="615" width="3" height="20" fill="#00ff00"/>
<rect x="766" y="615" width="3" height="20" fill="#ff0000"/>
<rect x="770" y="615" width="3" height="20" fill="#ff0000"/>
<rect x="774" y="615" width="3" height="20" fill="#ff0000"/>
<rect x="778" y="615" width="3" height="20" fill="#ff0000"/>
<rect x="782" y="615" width="3" height="20" fill="#ff0000"/>
<rect x="786" y="615" width="3" height="20" fill="#ff0000"/>
<rect x="790" y="615" width="3" height="20" fill="#ff0000"/>
<rect x="794" y="615" width="3" height="20" fill="#ff0000"/>
<rect x="798" y="615" width="3" height="20" fill="#ff0000"/>
<rect x="802" y="615" width="3" height="20" fill="#ff0000"/>
<rect x="806" y="615" width="3" height="20" fill="#00ff00"/>
<rect x="810" y="615" width="3" height="20" fill="#00ff00"/>
<rect x="814" y="615" width="3" height="20" fill="#00ff00"/>
<rect x="822" y="615" width="3" height="20" fill="#ff0000"/>
<rect x="826" y="615" width="3" height="20" fill="#ff0000"/>
<rect x="19" y="615" width="2" height="20" fill="#ffff00"/>
<text x="23" y="600" font-size="9" fill="#fff" textLength="106" lengthAdjust="spacingAndGlyphs">Golden ST 1.0000 0.0000</text>
<text x="23" y="626" font-size="9" fill="#fff" textLength="108" lengthAdjust="spacingAndGlyphs">Golden WE 1.0000 0.0000</text>
<text x="975.3" y="606.3" font-size="15.5" font-weight="bold" fill="#fff" textLength="61.2" lengthAdjust="spacingAndGlyphs" font-family="'Liberation Sans','Noto Sans CJK JP',sans-serif" shape-rendering="geometricPrecision">強い通貨</text>
<text x="975.3" y="632.8" font-size="15.5" font-weight="bold" fill="#fff" textLength="61.2" lengthAdjust="spacingAndGlyphs" font-family="'Liberation Sans','Noto Sans CJK JP',sans-serif" shape-rendering="geometricPrecision">弱い通貨</text>
<rect x="25" y="560" width="250" height="20" fill="#808080"/>
<rect x="26" y="561" width="248" height="18" fill="#000"/>
<text x="33.3" y="575.8" font-size="14" fill="#fff" textLength="236" lengthAdjust="spacingAndGlyphs" font-family="'Liberation Sans','Noto Sans CJK JP',sans-serif" shape-rendering="geometricPrecision">Pivotライン･S1R1前日高値安値は強いS&amp;R</text>
<rect x="918" y="118" width="122" height="50" fill="#ff0000"/>
<rect x="919" y="119" width="120" height="48" fill="#000080"/>
<text x="929" y="137" font-size="18" fill="#fff" textLength="101.5" lengthAdjust="spacingAndGlyphs" stroke="#000080" stroke-width="0.55">M5− EURJPY</text>
<text x="929.9" y="157.3" font-size="14" fill="#fff" textLength="26.5" lengthAdjust="spacingAndGlyphs" font-family="'Liberation Sans','Noto Sans CJK JP',sans-serif" shape-rendering="geometricPrecision">圧力</text>
<rect x="976" y="144" width="16" height="16" fill="#808080"/>
<circle cx="1016" cy="152" r="10" fill="#ff0000" shape-rendering="geometricPrecision"/>
<polygon points="1016,161.697 1022.52,153.818 1018.58,153.818 1018.58,143.515 1013.42,143.515 1013.42,153.818 1009.48,153.818" fill="#808080" shape-rendering="geometricPrecision"/>
<rect x="918" y="176" width="122" height="50" fill="#fff"/>
<rect x="919" y="177" width="120" height="48" fill="#000080"/>
<text x="920" y="191" font-size="12" fill="#ff8c00" textLength="32" lengthAdjust="spacingAndGlyphs">Today</text>
<text x="964" y="191" font-size="12" fill="#fff" textLength="18.5" lengthAdjust="spacingAndGlyphs">46.9</text>
<text x="992.5" y="191" font-size="12" fill="#fff" textLength="19" lengthAdjust="spacingAndGlyphs">SP-</text>
<text x="1018.5" y="191" font-size="12" fill="#fff" textLength="12.5" lengthAdjust="spacingAndGlyphs">1.3</text>
<text x="920" y="205" font-size="12" fill="#ff8c00" textLength="32" lengthAdjust="spacingAndGlyphs">Y-day</text>
<text x="964" y="205" font-size="12" fill="#fff" textLength="18.5" lengthAdjust="spacingAndGlyphs">60.0</text>
<text x="990" y="205" font-size="12.5" fill="#ff8c00" textLength="14" lengthAdjust="spacingAndGlyphs">A5</text>
<text x="1012.8" y="205" font-size="12" fill="#fff" textLength="18.5" lengthAdjust="spacingAndGlyphs">43.6</text>
<text x="934.7" y="220" font-size="12" fill="#00ff00" textLength="38.5" lengthAdjust="spacingAndGlyphs">L-(1.24)</text>
<text x="986" y="220" font-size="12" fill="#ff00ff" textLength="46.5" lengthAdjust="spacingAndGlyphs">S-(39.14)</text>
<rect x="918" y="232" width="122" height="77" fill="#fff"/>
<rect x="919" y="233" width="120" height="75" fill="#000080"/>
<polygon points="941.2,235.0 943.5,241.5 950.3,241.6 944.9,245.8 946.8,252.4 941.2,248.4 935.6,252.4 937.5,245.8 932.1,241.6 938.9,241.5" fill="#00ff00" shape-rendering="geometricPrecision"/>
<polygon points="963.4,235.0 965.7,241.5 972.5,241.6 967.1,245.8 969.0,252.4 963.4,248.4 957.8,252.4 959.7,245.8 954.3,241.6 961.1,241.5" fill="#00ff00" shape-rendering="geometricPrecision"/>
<polygon points="989.4,235.0 991.7,241.5 998.5,241.6 993.1,245.8 995.0,252.4 989.4,248.4 983.8,252.4 985.7,245.8 980.3,241.6 987.1,241.5" fill="#00ff00" shape-rendering="geometricPrecision"/>
<polygon points="1014.8,235.0 1017.1,241.5 1023.9,241.6 1018.5,245.8 1020.4,252.4 1014.8,248.4 1009.2,252.4 1011.1,245.8 1005.7,241.6 1012.5,241.5" fill="#ff0000" shape-rendering="geometricPrecision"/>
<polygon points="941.2,252.1 943.5,258.6 950.3,258.7 944.9,262.9 946.8,269.5 941.2,265.5 935.6,269.5 937.5,262.9 932.1,258.7 938.9,258.6" fill="#ff0000" shape-rendering="geometricPrecision"/>
<polygon points="963.4,252.1 965.7,258.6 972.5,258.7 967.1,262.9 969.0,269.5 963.4,265.5 957.8,269.5 959.7,262.9 954.3,258.7 961.1,258.6" fill="#00ff00" shape-rendering="geometricPrecision"/>
<polygon points="989.4,252.1 991.7,258.6 998.5,258.7 993.1,262.9 995.0,269.5 989.4,265.5 983.8,269.5 985.7,262.9 980.3,258.7 987.1,258.6" fill="#ff0000" shape-rendering="geometricPrecision"/>
<polygon points="1014.8,252.1 1017.1,258.6 1023.9,258.7 1018.5,262.9 1020.4,269.5 1014.8,265.5 1009.2,269.5 1011.1,262.9 1005.7,258.7 1012.5,258.6" fill="#ff0000" shape-rendering="geometricPrecision"/>
<polygon points="941.2,269.3 943.5,275.8 950.3,275.9 944.9,280.1 946.8,286.7 941.2,282.7 935.6,286.7 937.5,280.1 932.1,275.9 938.9,275.8" fill="#ff0000" shape-rendering="geometricPrecision"/>
<polygon points="963.4,269.3 965.7,275.8 972.5,275.9 967.1,280.1 969.0,286.7 963.4,282.7 957.8,286.7 959.7,280.1 954.3,275.9 961.1,275.8" fill="#00ff00" shape-rendering="geometricPrecision"/>
<polygon points="989.4,269.3 991.7,275.8 998.5,275.9 993.1,280.1 995.0,286.7 989.4,282.7 983.8,286.7 985.7,280.1 980.3,275.9 987.1,275.8" fill="#00ff00" shape-rendering="geometricPrecision"/>
<polygon points="1014.8,269.3 1017.1,275.8 1023.9,275.9 1018.5,280.1 1020.4,286.7 1014.8,282.7 1009.2,286.7 1011.1,280.1 1005.7,275.9 1012.5,275.8" fill="#ff0000" shape-rendering="geometricPrecision"/>
<text x="931" y="301" font-size="12" fill="#00ffff" textLength="21" lengthAdjust="spacingAndGlyphs">USD</text>
<text x="955" y="301" font-size="12" fill="#ffff00" textLength="20.5" lengthAdjust="spacingAndGlyphs">JPY</text>
<text x="980" y="301" font-size="12" fill="#ff8c00" textLength="21.5" lengthAdjust="spacingAndGlyphs">EUR</text>
<text x="1005" y="301" font-size="12" fill="#ff0000" textLength="22" lengthAdjust="spacingAndGlyphs">GBP</text>
<rect x="918" y="316" width="55" height="14" fill="#c0c0c0"/>
<rect x="919" y="317" width="53" height="12" fill="#000080"/>
<text x="945.5" y="326.7" font-size="11.5" fill="#fff" text-anchor="middle" textLength="39" lengthAdjust="spacingAndGlyphs">USDJPY</text>
<rect x="980" y="316" width="55" height="14" fill="#ff8c00"/>
<rect x="981" y="317" width="53" height="12" fill="#000080"/>
<text x="1007.5" y="326.7" font-size="11.5" fill="#fff" textLength="41" lengthAdjust="spacingAndGlyphs" text-anchor="middle">EURUSD</text>
<rect x="918" y="333" width="55" height="14" fill="#c0c0c0"/>
<rect x="919" y="334" width="53" height="12" fill="#000080"/>
<text x="945.5" y="343.7" font-size="11.5" fill="#fff" text-anchor="middle" textLength="38" lengthAdjust="spacingAndGlyphs">EURJPY</text>
<rect x="980" y="333" width="55" height="14" fill="#c0c0c0"/>
<rect x="981" y="334" width="53" height="12" fill="#000080"/>
<text x="1007.5" y="343.7" font-size="11.5" fill="#fff" text-anchor="middle" textLength="41" lengthAdjust="spacingAndGlyphs">GBPUSD</text>
<rect x="918" y="350" width="55" height="14" fill="#c0c0c0"/>
<rect x="919" y="351" width="53" height="12" fill="#000080"/>
<text x="945.5" y="360.7" font-size="11.5" fill="#ff00ff" text-anchor="middle" textLength="38" lengthAdjust="spacingAndGlyphs">GBPJPY</text>
<rect x="980" y="350" width="56" height="14" fill="#c0c0c0"/>
<rect x="981" y="351" width="54" height="12" fill="#696969"/>
<text x="1007" y="360.3" font-size="9.5" fill="#fff" textLength="41.5" lengthAdjust="spacingAndGlyphs" text-anchor="middle">Loss Cut</text>
<rect x="974" y="333" width="3" height="14" fill="#ffff00"/>
<rect x="1036" y="333" width="3" height="14" fill="#ffff00"/>
<rect x="974" y="350" width="3" height="14" fill="#ffff00"/>
<rect x="918" y="367" width="55" height="13" fill="#c0c0c0"/>
<rect x="919" y="368" width="53" height="11" fill="#000080"/>
<text x="945.5" y="376.7" font-size="11.5" fill="#fff" text-anchor="middle">W</text>
<rect x="918" y="382" width="55" height="13" fill="#c0c0c0"/>
<rect x="919" y="383" width="53" height="11" fill="#000080"/>
<text x="945.5" y="391.7" font-size="11.5" fill="#fff" text-anchor="middle">D</text>
<rect x="918" y="397" width="55" height="13" fill="#c0c0c0"/>
<rect x="919" y="398" width="53" height="11" fill="#000080"/>
<text x="945.5" y="406.7" font-size="11.5" fill="#fff" text-anchor="middle">H4</text>
<rect x="918" y="412" width="55" height="13" fill="#c0c0c0"/>
<rect x="919" y="413" width="53" height="11" fill="#000080"/>
<text x="945.5" y="421.7" font-size="11.5" fill="#fff" text-anchor="middle">H1</text>
<rect x="918" y="427" width="55" height="13" fill="#c0c0c0"/>
<rect x="919" y="428" width="53" height="11" fill="#000080"/>
<text x="945.5" y="436.7" font-size="11.5" fill="#fff" text-anchor="middle">M30</text>
<rect x="918" y="442" width="55" height="13" fill="#c0c0c0"/>
<rect x="919" y="443" width="53" height="11" fill="#000080"/>
<text x="945.5" y="451.7" font-size="11.5" fill="#fff" text-anchor="middle">M15</text>
<rect x="918" y="457" width="55" height="13" fill="#c0c0c0"/>
<rect x="919" y="458" width="53" height="11" fill="#000080"/>
<text x="945.5" y="466.7" font-size="11.5" fill="#fff" text-anchor="middle">M5</text>
<rect x="918" y="472" width="55" height="13" fill="#c0c0c0"/>
<rect x="919" y="473" width="53" height="11" fill="#000080"/>
<text x="945.5" y="481.7" font-size="11.5" fill="#00e040" text-anchor="middle">M1</text>
<rect x="979" y="365" width="62" height="120" fill="#2222a8"/>
<rect x="981" y="366" width="58" height="118" fill="#000080"/>
<circle cx="989.8" cy="372.8" r="5" fill="#808080" shape-rendering="geometricPrecision"/>
<circle cx="1004.7" cy="372.8" r="6" fill="#ff0000" shape-rendering="geometricPrecision"/>
<polygon points="1004.7,378.618 1008.61,373.891 1006.25,373.891 1006.25,367.709 1003.15,367.709 1003.15,373.891 1000.79,373.891" fill="#808080" shape-rendering="geometricPrecision"/>
<circle cx="1019.5" cy="372.8" r="5" fill="#808080" shape-rendering="geometricPrecision"/>
<circle cx="1034.4" cy="372.8" r="6" fill="#00ff00" shape-rendering="geometricPrecision"/>
<polygon points="1034.4,366.982 1038.31,371.709 1035.95,371.709 1035.95,377.891 1032.85,377.891 1032.85,371.709 1030.49,371.709" fill="#808080" shape-rendering="geometricPrecision"/>
<circle cx="989.8" cy="387.8" r="5" fill="#808080" shape-rendering="geometricPrecision"/>
<circle cx="1004.7" cy="387.8" r="6" fill="#ff0000" shape-rendering="geometricPrecision"/>
<polygon points="1004.7,393.618 1008.61,388.891 1006.25,388.891 1006.25,382.709 1003.15,382.709 1003.15,388.891 1000.79,388.891" fill="#808080" shape-rendering="geometricPrecision"/>
<circle cx="1019.5" cy="387.8" r="5" fill="#808080" shape-rendering="geometricPrecision"/>
<circle cx="1034.4" cy="387.8" r="5" fill="#808080" shape-rendering="geometricPrecision"/>
<circle cx="989.8" cy="402.8" r="6" fill="#ff0000" shape-rendering="geometricPrecision"/>
<polygon points="989.8,408.618 993.709,403.891 991.345,403.891 991.345,397.709 988.255,397.709 988.255,403.891 985.891,403.891" fill="#808080" shape-rendering="geometricPrecision"/>
<circle cx="1004.7" cy="402.8" r="5" fill="#808080" shape-rendering="geometricPrecision"/>
<circle cx="1019.5" cy="402.8" r="5" fill="#808080" shape-rendering="geometricPrecision"/>
<circle cx="1034.4" cy="402.8" r="5" fill="#808080" shape-rendering="geometricPrecision"/>
<circle cx="989.8" cy="417.8" r="6" fill="#ff0000" shape-rendering="geometricPrecision"/>
<polygon points="989.8,423.618 993.709,418.891 991.345,418.891 991.345,412.709 988.255,412.709 988.255,418.891 985.891,418.891" fill="#808080" shape-rendering="geometricPrecision"/>
<circle cx="1004.7" cy="417.8" r="6" fill="#00ff00" shape-rendering="geometricPrecision"/>
<polygon points="1004.7,411.982 1008.61,416.709 1006.25,416.709 1006.25,422.891 1003.15,422.891 1003.15,416.709 1000.79,416.709" fill="#808080" shape-rendering="geometricPrecision"/>
<circle cx="1019.5" cy="417.8" r="5" fill="#808080" shape-rendering="geometricPrecision"/>
<circle cx="1034.4" cy="417.8" r="5" fill="#808080" shape-rendering="geometricPrecision"/>
<circle cx="989.8" cy="432.8" r="6" fill="#ff0000" shape-rendering="geometricPrecision"/>
<polygon points="989.8,438.618 993.709,433.891 991.345,433.891 991.345,427.709 988.255,427.709 988.255,433.891 985.891,433.891" fill="#808080" shape-rendering="geometricPrecision"/>
<circle cx="1004.7" cy="432.8" r="5" fill="#808080" shape-rendering="geometricPrecision"/>
<circle cx="1019.5" cy="432.8" r="5" fill="#808080" shape-rendering="geometricPrecision"/>
<circle cx="1034.4" cy="432.8" r="5" fill="#808080" shape-rendering="geometricPrecision"/>
<circle cx="989.8" cy="447.8" r="5" fill="#808080" shape-rendering="geometricPrecision"/>
<circle cx="1004.7" cy="447.8" r="6" fill="#00ff00" shape-rendering="geometricPrecision"/>
<polygon points="1004.7,441.982 1008.61,446.709 1006.25,446.709 1006.25,452.891 1003.15,452.891 1003.15,446.709 1000.79,446.709" fill="#808080" shape-rendering="geometricPrecision"/>
<circle cx="1019.5" cy="447.8" r="5" fill="#808080" shape-rendering="geometricPrecision"/>
<circle cx="1034.4" cy="447.8" r="5" fill="#808080" shape-rendering="geometricPrecision"/>
<circle cx="989.8" cy="462.8" r="5" fill="#808080" shape-rendering="geometricPrecision"/>
<circle cx="1004.7" cy="462.8" r="6" fill="#00ff00" shape-rendering="geometricPrecision"/>
<polygon points="1004.7,456.982 1008.61,461.709 1006.25,461.709 1006.25,467.891 1003.15,467.891 1003.15,461.709 1000.79,461.709" fill="#808080" shape-rendering="geometricPrecision"/>
<circle cx="1019.5" cy="462.8" r="5" fill="#808080" shape-rendering="geometricPrecision"/>
<circle cx="1034.4" cy="462.8" r="6" fill="#ff0000" shape-rendering="geometricPrecision"/>
<polygon points="1034.4,468.618 1038.31,463.891 1035.95,463.891 1035.95,457.709 1032.85,457.709 1032.85,463.891 1030.49,463.891" fill="#808080" shape-rendering="geometricPrecision"/>
<circle cx="989.8" cy="477.8" r="5" fill="#808080" shape-rendering="geometricPrecision"/>
<circle cx="1004.7" cy="477.8" r="6" fill="#00ff00" shape-rendering="geometricPrecision"/>
<polygon points="1004.7,471.982 1008.61,476.709 1006.25,476.709 1006.25,482.891 1003.15,482.891 1003.15,476.709 1000.79,476.709" fill="#808080" shape-rendering="geometricPrecision"/>
<circle cx="1019.5" cy="477.8" r="5" fill="#808080" shape-rendering="geometricPrecision"/>
<circle cx="1034.4" cy="477.8" r="5" fill="#808080" shape-rendering="geometricPrecision"/>
<rect x="979" y="487" width="62" height="15" fill="#696969"/>
<text x="987" y="498.8" font-size="12.5" fill="#fff" text-anchor="middle" font-weight="bold">U</text>
<text x="1003.5" y="498.8" font-size="12.5" fill="#fff" text-anchor="middle" font-weight="bold">J</text>
<text x="1019.5" y="498.8" font-size="12.5" fill="#fff" text-anchor="middle" font-weight="bold">E</text>
<text x="1035.5" y="498.8" font-size="12.5" fill="#fff" text-anchor="middle" font-weight="bold">G</text>
<text x="916.8" y="500.6" font-size="14.5" fill="#00ff00" textLength="28.5" lengthAdjust="spacingAndGlyphs" font-family="'Liberation Sans','Noto Sans CJK JP',sans-serif" shape-rendering="geometricPrecision">指標</text>
<text x="946.7" y="500.6" font-size="14.5" fill="#ff0000" textLength="28.5" lengthAdjust="spacingAndGlyphs" font-family="'Liberation Sans','Noto Sans CJK JP',sans-serif" shape-rendering="geometricPrecision">休場</text>
<rect x="19" y="322" width="899" height="1" fill="#708090"/>
<rect x="973" y="322" width="7" height="1" fill="#708090"/>
<rect x="1035" y="322" width="8" height="1" fill="#708090"/>
<rect x="1045" y="317" width="41" height="11" fill="#fff"/>
<text x="1049.7" y="325.6" font-size="9.4" fill="#000" textLength="32.4" lengthAdjust="spacingAndGlyphs">1.08386</text></svg>
<svg width="1103" height="665" viewBox="0 0 1103 665" font-family="Liberation Sans, sans-serif"><text x="-7.5" y="32" font-size="11.5" fill="#1a1a1a" textLength="20.5" lengthAdjust="spacingAndGlyphs" font-family="'Liberation Sans','Noto Sans CJK JP',sans-serif">ート</text>
<text x="16.6367" y="32" font-size="11" fill="#1a1a1a" textLength="14" lengthAdjust="spacingAndGlyphs">(C)</text>
<text x="49.3" y="32" font-size="11" fill="#1a1a1a" textLength="26" lengthAdjust="spacingAndGlyphs" font-family="'Liberation Sans','Noto Sans CJK JP',sans-serif">ツール</text>
<text x="79" y="32" font-size="11" fill="#1a1a1a" textLength="13.5" lengthAdjust="spacingAndGlyphs">(T)</text>
<text x="111.5" y="32" font-size="11" fill="#1a1a1a" textLength="41.5" lengthAdjust="spacingAndGlyphs" font-family="'Liberation Sans','Noto Sans CJK JP',sans-serif">ウィンドウ</text>
<text x="157" y="32" font-size="11" fill="#1a1a1a" textLength="17.5" lengthAdjust="spacingAndGlyphs">(W)</text>
<text x="193" y="32" font-size="11" fill="#1a1a1a" textLength="30" lengthAdjust="spacingAndGlyphs" font-family="'Liberation Sans','Noto Sans CJK JP',sans-serif">ヘルプ</text>
<text x="226.5" y="32" font-size="11" fill="#1a1a1a" textLength="15" lengthAdjust="spacingAndGlyphs">(H)</text>
<rect x="-2" y="45.5" width="9" height="11" fill="#fafafa" stroke="#b0a080"/>
<circle cx="3.5" cy="52.5" r="5" fill="#cfe4f6" fill-opacity="0.9" stroke="#5a94d8" stroke-width="1.2"/>
<rect x="1" y="49" width="3.5" height="6" fill="#8fa8c0"/>
<path d="M7.5 56.5 L12 61" stroke="#c8a018" stroke-width="2.6" stroke-linecap="round"/>
<rect x="20" y="42" width="1" height="21" fill="#a0a0a0" shape-rendering="crispEdges"/>
<rect x="21" y="42" width="1" height="21" fill="#fff" shape-rendering="crispEdges"/>
<path d="M30.5 45.5 h7 l4 4 v9 h-11z" fill="#fdfdfd" stroke="#707070" stroke-width="1"/>
<path d="M37.5 45.5 v4 h4" fill="#e8e8e8" stroke="#707070" stroke-width="0.8"/>
<path d="M32.5 48.5 h4 M32.5 51.5 h5 M32.5 53.5 h3" stroke="#808080" stroke-width="1"/>
<path d="M38.5 50.5 h3 v4 h4 v3 h-4 v4 h-3 v-4 h-4 v-3 h4z" fill="#30d830" stroke="#0a8a0a" stroke-width="0.9"/>
<text x="49" y="56.6" font-size="12" fill="#000" textLength="47.8" lengthAdjust="spacingAndGlyphs" font-family="'Liberation Sans','Noto Sans CJK JP',sans-serif">新規注文</text>
<defs><linearGradient id="bk" x1="0" y1="0" x2="1" y2="1"><stop offset="0" stop-color="#fbe684"/><stop offset="0.55" stop-color="#eec030"/><stop offset="1" stop-color="#c48a10"/></linearGradient></defs>
<path d="M109.2 54 L117.6 58 L124.8 52.4 V55.2 L117.6 61 L109.2 56.6z" fill="#a87410"/>
<path d="M110.4 55.6 L117.6 59.4 L124 54.2" stroke="#f6e8b0" stroke-width="1" fill="none"/>
<path d="M114 46 L124.8 52.4 L117.6 58 L109.2 54z" fill="url(#bk)" stroke="#b8860b" stroke-width="0.7"/>
<path d="M139.5 47.5 L144 46 H150 V55.5 H139.5z" fill="#2a90f0" stroke="#1a70d8" stroke-width="0.8"/>
<path d="M144 46.5 H150 V55.5 H144z" fill="#64b4f8"/>
<path d="M139.5 47.5 L144 46 H150 L146 47.5z" fill="#bfe0ff"/>
<rect x="145" y="49" width="4" height="2" fill="#eaf4ff" shape-rendering="crispEdges"/>
<rect x="145" y="52" width="4" height="1" fill="#b8d8f8" shape-rendering="crispEdges"/>
<path d="M139.6 60.6 a3 3 0 0 1 0.2 -6 a3.8 3.8 0 0 1 7 -1.4 a2.8 2.8 0 0 1 4.2 2 a2.7 2.7 0 0 1 -0.4 5.4z" fill="#edf3fb" stroke="#5f86c4" stroke-width="1"/>
<path d="M138.5 59.8 h13.5" stroke="#8ea8d0" stroke-width="1"/>
<circle cx="173" cy="53.5" r="7.3" fill="none" stroke="#9fb8dc" stroke-width="1.2"/>
<circle cx="173" cy="53.5" r="4.6" fill="none" stroke="#6f96d0" stroke-width="1.2"/>
<path d="M173.5 53.5 V61 A7.5 7.5 0 0 0 180.3 52" fill="none" stroke="#58b058" stroke-width="1.6"/>
<path d="M173.5 53.5 V58 A4.6 4.6 0 0 0 177.6 52.5" fill="none" stroke="#78c078" stroke-width="1.2"/>
<circle cx="173" cy="52.5" r="1.8" fill="#2868d0"/>
<rect x="189" y="41" width="78" height="22" fill="#f8f8f8" shape-rendering="crispEdges"/>
<rect x="189" y="41" width="78" height="1" fill="#a0a0a0" shape-rendering="crispEdges"/>
<rect x="189" y="41" width="1" height="22" fill="#a0a0a0" shape-rendering="crispEdges"/>
<rect x="189" y="62" width="78" height="1" fill="#fff" shape-rendering="crispEdges"/>
<rect x="266" y="41" width="1" height="22" fill="#fff" shape-rendering="crispEdges"/>
<path d="M194 51 L208 51 L206.5 57 L200.5 60.5 L196.5 58z" fill="#f0d040" stroke="#c09820" stroke-width="1"/>
<ellipse cx="200.5" cy="49.5" rx="7.3" ry="2.6" fill="#58a8e0" stroke="#3080c0" stroke-width="0.8"/>
<ellipse cx="200.5" cy="47.3" rx="3.6" ry="2.6" fill="#68b4e8" stroke="#3080c0" stroke-width="0.8"/>
<circle cx="205" cy="57" r="4" fill="#18b018" stroke="#0a800a" stroke-width="0.8"/>
<path d="M203.8 54.8 v4.4 l3.4 -2.2z" fill="#fff"/>
<text x="215.8" y="56.6" font-size="12" fill="#000" textLength="46.5" lengthAdjust="spacingAndGlyphs" font-family="'Liberation Sans','Noto Sans CJK JP',sans-serif">自動売買</text>
<rect x="268" y="42" width="1" height="21" fill="#a0a0a0" shape-rendering="crispEdges"/>
<rect x="269" y="42" width="1" height="21" fill="#fff" shape-rendering="crispEdges"/>
<rect x="272" y="43" width="3" height="1" fill="#a8a8a8" shape-rendering="crispEdges"/>
<rect x="272" y="45" width="3" height="1" fill="#a8a8a8" shape-rendering="crispEdges"/>
<rect x="272" y="47" width="3" height="1" fill="#a8a8a8" shape-rendering="crispEdges"/>
<rect x="272" y="49" width="3" height="1" fill="#a8a8a8" shape-rendering="crispEdges"/>
<rect x="272" y="51" width="3" height="1" fill="#a8a8a8" shape-rendering="crispEdges"/>
<rect x="272" y="53" width="3" height="1" fill="#a8a8a8" shape-rendering="crispEdges"/>
<rect x="272" y="55" width="3" height="1" fill="#a8a8a8" shape-rendering="crispEdges"/>
<rect x="272" y="57" width="3" height="1" fill="#a8a8a8" shape-rendering="crispEdges"/>
<rect x="272" y="59" width="3" height="1" fill="#a8a8a8" shape-rendering="crispEdges"/>
<rect x="272" y="61" width="3" height="1" fill="#a8a8a8" shape-rendering="crispEdges"/>
<path d="M286.5 48 V60.5 M283.5 58.5 H297" stroke="#505050" stroke-width="1" fill="none"/>
<path d="M286.5 46.5 l-2 2.5 h4z M298.5 58.5 l-2.5 -2 v4z" fill="#505050"/>
<path d="M290.5 56 h3 V49 h2.5" stroke="#1a8a1a" stroke-width="1.6" fill="none"/>
<rect x="306" y="41" width="25" height="22" fill="#f8f8f8" shape-rendering="crispEdges"/>
<rect x="306" y="41" width="25" height="1" fill="#a0a0a0" shape-rendering="crispEdges"/>
<rect x="306" y="41" width="1" height="22" fill="#a0a0a0" shape-rendering="crispEdges"/>
<rect x="306" y="62" width="25" height="1" fill="#fff" shape-rendering="crispEdges"/>
<rect x="330" y="41" width="1" height="22" fill="#fff" shape-rendering="crispEdges"/>
<path d="M314.5 48 V60.5 M311.5 58.5 H325" stroke="#505050" stroke-width="1" fill="none"/>
<path d="M314.5 46.5 l-2 2.5 h4z M326.5 58.5 l-2.5 -2 v4z" fill="#505050"/>
<path d="M320.5 45 v12" stroke="#1a8a1a" stroke-width="1.2"/><rect x="318.5" y="47.5" width="4" height="7" fill="#38d038" stroke="#1a8a1a" stroke-width="1"/>
<path d="M342.5 48 V60.5 M339.5 58.5 H353" stroke="#505050" stroke-width="1" fill="none"/>
<path d="M342.5 46.5 l-2 2.5 h4z M354.5 58.5 l-2.5 -2 v4z" fill="#505050"/>
<path d="M341.5 56 Q346 49 348 50.5 T353 55" stroke="#2a8a2a" stroke-width="1.3" fill="none"/>
<rect x="363" y="42" width="1" height="21" fill="#a0a0a0" shape-rendering="crispEdges"/>
<rect x="364" y="42" width="1" height="21" fill="#fff" shape-rendering="crispEdges"/>
<path d="M382 55.5 L387 60.5" stroke="#c8a018" stroke-width="3" stroke-linecap="round"/>
<path d="M382.2 55 L387 60" stroke="#f0d870" stroke-width="1"/>
<circle cx="378" cy="51" r="5.3" fill="#d4e9f9" stroke="#3b7fd0" stroke-width="1.3"/>
<path d="M375 51 h6" stroke="#3b7fc8" stroke-width="1.8"/>
<path d="M378 48 v6" stroke="#3b7fc8" stroke-width="1.8"/>
<path d="M410 55.5 L415 60.5" stroke="#c8a018" stroke-width="3" stroke-linecap="round"/>
<path d="M410.2 55 L415 60" stroke="#f0d870" stroke-width="1"/>
<circle cx="406" cy="51" r="5.3" fill="#d4e9f9" stroke="#3b7fd0" stroke-width="1.3"/>
<path d="M403 51 h6" stroke="#3b7fc8" stroke-width="1.8"/>
<rect x="428" y="45" width="8" height="8" fill="#4aa828" shape-rendering="crispEdges"/>
<rect x="436" y="45" width="8" height="8" fill="#2858d0" shape-rendering="crispEdges"/>
<rect x="428" y="53" width="8" height="8" fill="#2858d0" shape-rendering="crispEdges"/>
<rect x="436" y="53" width="8" height="8" fill="#4aa828" shape-rendering="crispEdges"/>
<rect x="429" y="47" width="6" height="4" fill="#f4f8ff" shape-rendering="crispEdges"/>
<rect x="430" y="49" width="4" height="1" fill="#9ab8e0" shape-rendering="crispEdges"/>
<rect x="437" y="47" width="6" height="4" fill="#f4f8ff" shape-rendering="crispEdges"/>
<rect x="438" y="49" width="4" height="1" fill="#9ab8e0" shape-rendering="crispEdges"/>
<rect x="429" y="55" width="6" height="4" fill="#f4f8ff" shape-rendering="crispEdges"/>
<rect x="430" y="57" width="4" height="1" fill="#9ab8e0" shape-rendering="crispEdges"/>
<rect x="437" y="55" width="6" height="4" fill="#f4f8ff" shape-rendering="crispEdges"/>
<rect x="438" y="57" width="4" height="1" fill="#9ab8e0" shape-rendering="crispEdges"/>
<rect x="453" y="42" width="1" height="21" fill="#a0a0a0" shape-rendering="crispEdges"/>
<rect x="454" y="42" width="1" height="21" fill="#fff" shape-rendering="crispEdges"/>
<rect x="458" y="41" width="26" height="22" fill="#f8f8f8" shape-rendering="crispEdges"/>
<rect x="458" y="41" width="26" height="1" fill="#a0a0a0" shape-rendering="crispEdges"/>
<rect x="458" y="41" width="1" height="22" fill="#a0a0a0" shape-rendering="crispEdges"/>
<rect x="458" y="62" width="26" height="1" fill="#fff" shape-rendering="crispEdges"/>
<rect x="483" y="41" width="1" height="22" fill="#fff" shape-rendering="crispEdges"/>
<path d="M466.5 48 V60.5 M463.5 58.5 H477" stroke="#505050" stroke-width="1" fill="none"/>
<path d="M466.5 46.5 l-2 2.5 h4z M478.5 58.5 l-2.5 -2 v4z" fill="#505050"/>
<path d="M471.5 49 v6.5 l4 -3.2z" fill="#48d048" stroke="#1a9a1a" stroke-width="1"/>
<rect x="486" y="41" width="26" height="22" fill="#f8f8f8" shape-rendering="crispEdges"/>
<rect x="486" y="41" width="26" height="1" fill="#a0a0a0" shape-rendering="crispEdges"/>
<rect x="486" y="41" width="1" height="22" fill="#a0a0a0" shape-rendering="crispEdges"/>
<rect x="486" y="62" width="26" height="1" fill="#fff" shape-rendering="crispEdges"/>
<rect x="511" y="41" width="1" height="22" fill="#fff" shape-rendering="crispEdges"/>
<path d="M494.5 48 V60.5 M491.5 58.5 H505" stroke="#505050" stroke-width="1" fill="none"/>
<path d="M494.5 46.5 l-2 2.5 h4z M506.5 58.5 l-2.5 -2 v4z" fill="#505050"/>
<path d="M500.5 47 v10" stroke="#2878b8" stroke-width="1.3"/><path d="M506 52.5 h-4 M503.8 50.5 l-2 2 l2 2" stroke="#d04808" stroke-width="1.2" fill="none"/>
<rect x="515" y="42" width="1" height="21" fill="#a0a0a0" shape-rendering="crispEdges"/>
<rect x="516" y="42" width="1" height="21" fill="#fff" shape-rendering="crispEdges"/>
<path d="M525.5 45.5 h7 l4 4 v9 h-11z" fill="#fdfdfd" stroke="#707070" stroke-width="1"/>
<path d="M532.5 45.5 v4 h4" fill="#e8e8e8" stroke="#707070" stroke-width="0.8"/>
<path d="M527.5 48.5 h4 M527.5 51.5 h5 M527.5 53.5 h3" stroke="#808080" stroke-width="1"/>
<path d="M533.5 50.5 h3 v4 h4 v3 h-4 v4 h-3 v-4 h-4 v-3 h4z" fill="#30d830" stroke="#0a8a0a" stroke-width="0.9"/>
<path d="M544.6 52 h5.6 l-2.8 3.2z" fill="#000"/>
<defs><linearGradient id="ck" x1="0" y1="0" x2="0" y2="1"><stop offset="0" stop-color="#58a6f4"/><stop offset="1" stop-color="#0a48b0"/></linearGradient></defs>
<circle cx="569" cy="53" r="6.5" fill="#f6f9ff" stroke="url(#ck)" stroke-width="2.5"/>
<path d="M569 48.8 v4.4 h3" stroke="#505050" stroke-width="1.1" fill="none"/>
<path d="M569 57.5 v.8 M564.4 53 h.8 M573 53 h.8" stroke="#90a0b8" stroke-width="0.9"/>
<path d="M582 52 h5.6 l-2.8 3.2z" fill="#000"/>
<rect x="594" y="41" width="1" height="23" fill="#a0a0a0" shape-rendering="crispEdges"/>
<rect x="594" y="41" width="37" height="1" fill="#a0a0a0" shape-rendering="crispEdges"/>
<rect x="630" y="41" width="1" height="23" fill="#a0a0a0" shape-rendering="crispEdges"/>
<rect x="598.5" y="46.5" width="15" height="13" fill="#fff" stroke="#3a78c8" stroke-width="1"/>
<rect x="599" y="47" width="14" height="2" fill="#5a98e0" shape-rendering="crispEdges"/>
<rect x="599" y="53" width="14" height="1" fill="#3a78c8" shape-rendering="crispEdges"/>
<path d="M600.5 52 l2.5 -1 l2 .5 l2.5 -1.5 l2 1 l2.5 -1.5" stroke="#c02010" stroke-width="1.2" fill="none"/>
<path d="M600.5 57.5 l2.5 -1 l2 .5 l2.5 -1.8 l2 1.5 l2.5 .3" stroke="#18a018" stroke-width="1.2" fill="none"/>
<path d="M618.8 52 h5.6 l-2.8 3.2z" fill="#000"/>
<rect x="634" y="43" width="3" height="1" fill="#a8a8a8" shape-rendering="crispEdges"/>
<rect x="634" y="45" width="3" height="1" fill="#a8a8a8" shape-rendering="crispEdges"/>
<rect x="634" y="47" width="3" height="1" fill="#a8a8a8" shape-rendering="crispEdges"/>
<rect x="634" y="49" width="3" height="1" fill="#a8a8a8" shape-rendering="crispEdges"/>
<rect x="634" y="51" width="3" height="1" fill="#a8a8a8" shape-rendering="crispEdges"/>
<rect x="634" y="53" width="3" height="1" fill="#a8a8a8" shape-rendering="crispEdges"/>
<rect x="634" y="55" width="3" height="1" fill="#a8a8a8" shape-rendering="crispEdges"/>
<rect x="634" y="57" width="3" height="1" fill="#a8a8a8" shape-rendering="crispEdges"/>
<rect x="634" y="59" width="3" height="1" fill="#a8a8a8" shape-rendering="crispEdges"/>
<rect x="634" y="61" width="3" height="1" fill="#a8a8a8" shape-rendering="crispEdges"/>
<rect x="641" y="41" width="26" height="22" fill="#f8f8f8" shape-rendering="crispEdges"/>
<rect x="641" y="41" width="26" height="1" fill="#a0a0a0" shape-rendering="crispEdges"/>
<rect x="641" y="41" width="1" height="22" fill="#a0a0a0" shape-rendering="crispEdges"/>
<rect x="641" y="62" width="26" height="1" fill="#fff" shape-rendering="crispEdges"/>
<rect x="666" y="41" width="1" height="22" fill="#fff" shape-rendering="crispEdges"/>
<path d="M648 45.5 v11 l2.6 -2.4 l2 4.6 l1.8 -.8 l-2 -4.5 h3.6z" fill="#484848"/>
<rect x="673" y="41" width="25" height="1" fill="#a0a0a0" shape-rendering="crispEdges"/>
<rect x="697" y="41" width="1" height="22" fill="#a0a0a0" shape-rendering="crispEdges"/>
<rect x="680" y="46" width="1" height="6" fill="#606060" shape-rendering="crispEdges"/>
<rect x="680" y="55" width="1" height="6" fill="#606060" shape-rendering="crispEdges"/>
<rect x="673" y="53" width="6" height="1" fill="#606060" shape-rendering="crispEdges"/>
<rect x="682" y="53" width="6" height="1" fill="#606060" shape-rendering="crispEdges"/>
<rect x="680" y="53" width="1" height="1" fill="#909090" shape-rendering="crispEdges"/>
<rect x="714" y="47" width="1" height="13" fill="#484848" shape-rendering="crispEdges"/>
<rect x="737" y="53" width="12" height="1" fill="#484848" shape-rendering="crispEdges"/>
<path d="M765 60 L776.5 48" stroke="#505050" stroke-width="1.1"/>
<path d="M791 56.5 L804.5 46.5 M792.5 59.8 L806 50 M794.2 51.5 l-1.4 8.5 M797 49.5 l-1.4 8.5 M799.8 47.5 l-1.4 8.5 M802.6 45.5 l-1.4 8.5" stroke="#585858" stroke-width="0.9" fill="none"/>
<text x="802" y="61.5" font-size="6.5" fill="#404040" font-weight="bold">E</text>
<rect x="820" y="46" width="1" height="1" fill="#606060" shape-rendering="crispEdges"/>
<rect x="822" y="46" width="1" height="1" fill="#606060" shape-rendering="crispEdges"/>
<rect x="824" y="46" width="1" height="1" fill="#606060" shape-rendering="crispEdges"/>
<rect x="826" y="46" width="1" height="1" fill="#606060" shape-rendering="crispEdges"/>
<rect x="828" y="46" width="1" height="1" fill="#606060" shape-rendering="crispEdges"/>
<rect x="830" y="46" width="1" height="1" fill="#606060" shape-rendering="crispEdges"/>
<rect x="832" y="46" width="1" height="1" fill="#606060" shape-rendering="crispEdges"/>
<rect x="820" y="50" width="1" height="1" fill="#606060" shape-rendering="crispEdges"/>
<rect x="822" y="50" width="1" height="1" fill="#606060" shape-rendering="crispEdges"/>
<rect x="824" y="50" width="1" height="1" fill="#606060" shape-rendering="crispEdges"/>
<rect x="826" y="50" width="1" height="1" fill="#606060" shape-rendering="crispEdges"/>
<rect x="828" y="50" width="1" height="1" fill="#606060" shape-rendering="crispEdges"/>
<rect x="830" y="50" width="1" height="1" fill="#606060" shape-rendering="crispEdges"/>
<rect x="832" y="50" width="1" height="1" fill="#606060" shape-rendering="crispEdges"/>
<rect x="820" y="53" width="1" height="1" fill="#606060" shape-rendering="crispEdges"/>
<rect x="822" y="53" width="1" height="1" fill="#606060" shape-rendering="crispEdges"/>
<rect x="824" y="53" width="1" height="1" fill="#606060" shape-rendering="crispEdges"/>
<rect x="826" y="53" width="1" height="1" fill="#606060" shape-rendering="crispEdges"/>
<rect x="828" y="53" width="1" height="1" fill="#606060" shape-rendering="crispEdges"/>
<rect x="830" y="53" width="1" height="1" fill="#606060" shape-rendering="crispEdges"/>
<rect x="832" y="53" width="1" height="1" fill="#606060" shape-rendering="crispEdges"/>
<rect x="820" y="57" width="1" height="1" fill="#606060" shape-rendering="crispEdges"/>
<rect x="822" y="57" width="1" height="1" fill="#606060" shape-rendering="crispEdges"/>
<rect x="824" y="57" width="1" height="1" fill="#606060" shape-rendering="crispEdges"/>
<rect x="826" y="57" width="1" height="1" fill="#606060" shape-rendering="crispEdges"/>
<rect x="828" y="57" width="1" height="1" fill="#606060" shape-rendering="crispEdges"/>
<rect x="830" y="57" width="1" height="1" fill="#606060" shape-rendering="crispEdges"/>
<rect x="832" y="57" width="1" height="1" fill="#606060" shape-rendering="crispEdges"/>
<text x="830" y="61.5" font-size="6.5" fill="#404040" font-weight="bold">F</text>
<text x="850.6" y="57.8" font-size="12" fill="#6a6a6a" textLength="8.4" lengthAdjust="spacingAndGlyphs" font-weight="bold">A</text>
<rect x="877" y="47" width="1" height="1" fill="#505050" shape-rendering="crispEdges"/>
<rect x="877" y="59" width="1" height="1" fill="#505050" shape-rendering="crispEdges"/>
<rect x="879" y="47" width="1" height="1" fill="#505050" shape-rendering="crispEdges"/>
<rect x="879" y="59" width="1" height="1" fill="#505050" shape-rendering="crispEdges"/>
<rect x="881" y="47" width="1" height="1" fill="#505050" shape-rendering="crispEdges"/>
<rect x="881" y="59" width="1" height="1" fill="#505050" shape-rendering="crispEdges"/>
<rect x="883" y="47" width="1" height="1" fill="#505050" shape-rendering="crispEdges"/>
<rect x="883" y="59" width="1" height="1" fill="#505050" shape-rendering="crispEdges"/>
<rect x="885" y="47" width="1" height="1" fill="#505050" shape-rendering="crispEdges"/>
<rect x="885" y="59" width="1" height="1" fill="#505050" shape-rendering="crispEdges"/>
<rect x="887" y="47" width="1" height="1" fill="#505050" shape-rendering="crispEdges"/>
<rect x="887" y="59" width="1" height="1" fill="#505050" shape-rendering="crispEdges"/>
<rect x="889" y="47" width="1" height="1" fill="#505050" shape-rendering="crispEdges"/>
<rect x="889" y="59" width="1" height="1" fill="#505050" shape-rendering="crispEdges"/>
<rect x="877" y="47" width="1" height="1" fill="#505050" shape-rendering="crispEdges"/>
<rect x="889" y="47" width="1" height="1" fill="#505050" shape-rendering="crispEdges"/>
<rect x="877" y="49" width="1" height="1" fill="#505050" shape-rendering="crispEdges"/>
<rect x="889" y="49" width="1" height="1" fill="#505050" shape-rendering="crispEdges"/>
<rect x="877" y="51" width="1" height="1" fill="#505050" shape-rendering="crispEdges"/>
<rect x="889" y="51" width="1" height="1" fill="#505050" shape-rendering="crispEdges"/>
<rect x="877" y="53" width="1" height="1" fill="#505050" shape-rendering="crispEdges"/>
<rect x="889" y="53" width="1" height="1" fill="#505050" shape-rendering="crispEdges"/>
<rect x="877" y="55" width="1" height="1" fill="#505050" shape-rendering="crispEdges"/>
<rect x="889" y="55" width="1" height="1" fill="#505050" shape-rendering="crispEdges"/>
<rect x="877" y="57" width="1" height="1" fill="#505050" shape-rendering="crispEdges"/>
<rect x="889" y="57" width="1" height="1" fill="#505050" shape-rendering="crispEdges"/>
<rect x="877" y="59" width="1" height="1" fill="#505050" shape-rendering="crispEdges"/>
<rect x="889" y="59" width="1" height="1" fill="#505050" shape-rendering="crispEdges"/>
<rect x="876" y="46" width="2" height="1" fill="#505050" shape-rendering="crispEdges"/>
<text x="883.3" y="57.5" font-size="11" fill="#505050" text-anchor="middle" font-weight="bold">T</text>
<path d="M908 46.8 l3 3 h-6z M908 53 l-3 -2.2 h6z M914.5 59.8 l-3 -3 h6z M914.5 54 l3 2.2 h-6z" fill="#484848"/>
<path d="M907.5 54.5 l2 2 l4.5 -5" stroke="#484848" stroke-width="1.2" fill="none"/>
<path d="M922.8 52 h5.6 l-2.8 3.2z" fill="#000"/>
<rect x="934" y="40" width="1" height="25" fill="#a0a0a0" shape-rendering="crispEdges"/>
<rect x="935" y="40" width="1" height="25" fill="#fff" shape-rendering="crispEdges"/>
<rect x="938" y="43" width="3" height="1" fill="#a8a8a8" shape-rendering="crispEdges"/>
<rect x="938" y="45" width="3" height="1" fill="#a8a8a8" shape-rendering="crispEdges"/>
<rect x="938" y="47" width="3" height="1" fill="#a8a8a8" shape-rendering="crispEdges"/>
<rect x="938" y="49" width="3" height="1" fill="#a8a8a8" shape-rendering="crispEdges"/>
<rect x="938" y="51" width="3" height="1" fill="#a8a8a8" shape-rendering="crispEdges"/>
<rect x="938" y="53" width="3" height="1" fill="#a8a8a8" shape-rendering="crispEdges"/>
<rect x="938" y="55" width="3" height="1" fill="#a8a8a8" shape-rendering="crispEdges"/>
<rect x="938" y="57" width="3" height="1" fill="#a8a8a8" shape-rendering="crispEdges"/>
<rect x="938" y="59" width="3" height="1" fill="#a8a8a8" shape-rendering="crispEdges"/>
<rect x="938" y="61" width="3" height="1" fill="#a8a8a8" shape-rendering="crispEdges"/>
<rect x="944" y="41" width="26" height="22" fill="#f8f8f8" shape-rendering="crispEdges"/>
<rect x="944" y="41" width="26" height="1" fill="#a0a0a0" shape-rendering="crispEdges"/>
<rect x="944" y="41" width="1" height="22" fill="#a0a0a0" shape-rendering="crispEdges"/>
<rect x="944" y="62" width="26" height="1" fill="#fff" shape-rendering="crispEdges"/>
<rect x="969" y="41" width="1" height="22" fill="#fff" shape-rendering="crispEdges"/>
<text x="949.8" y="57" font-size="10" fill="#303030" textLength="12.3" lengthAdjust="spacingAndGlyphs">M1</text>
<text x="977.7" y="57" font-size="10" fill="#303030" textLength="12.5" lengthAdjust="spacingAndGlyphs">M5</text>
<text x="1003.5" y="57" font-size="10" fill="#303030" textLength="17.6" lengthAdjust="spacingAndGlyphs">M15</text>
<text x="1031.7" y="57" font-size="10" fill="#303030" textLength="17.6" lengthAdjust="spacingAndGlyphs">M30</text>
<text x="1062.6" y="57" font-size="10" fill="#303030" textLength="11.5" lengthAdjust="spacingAndGlyphs">H1</text>
<text x="1089.5" y="57" font-size="10" fill="#303030" textLength="12.3" lengthAdjust="spacingAndGlyphs">H4</text>
<rect x="658" y="8" width="115" height="2" fill="#a8c4e4" shape-rendering="crispEdges"/>
<defs><linearGradient id="tsh" x1="0" y1="0" x2="1" y2="0"><stop offset="0" stop-color="#a8c4e4"/><stop offset="0.15" stop-color="#7890b0"/><stop offset="1" stop-color="#8aa4c4"/></linearGradient></defs>
<rect x="658" y="29" width="115" height="3" fill="url(#tsh)"/>
<rect x="658" y="10" width="115" height="20" fill="#707070" shape-rendering="crispEdges"/>
<rect x="659" y="11" width="113" height="18" fill="#fff" shape-rendering="crispEdges"/>
<text x="665" y="24" font-size="11" fill="#404040" textLength="100.3" lengthAdjust="spacingAndGlyphs" font-family="'Liberation Sans','Noto Sans CJK JP',sans-serif">チャートの定型の設定</text>
<path d="M646 27.6 L634 34.4" stroke="#000" stroke-width="3.3" stroke-linecap="round"/>
<path d="M629.3 36.6 l1.6 -6.4 l7 5.6z" fill="#000"/>
<rect x="593" y="64" width="198" height="152" fill="#979797" shape-rendering="crispEdges"/>
<rect x="594" y="65" width="196" height="150" fill="#fff" shape-rendering="crispEdges"/>
<rect x="594" y="65" width="27" height="150" fill="#f0f0f0" shape-rendering="crispEdges"/>
<text x="628.5" y="83.6" font-size="12" fill="#1a1a1a" textLength="83" lengthAdjust="spacingAndGlyphs" font-family="'Liberation Sans','Noto Sans CJK JP',sans-serif">定型として保存...</text>
<text x="715.5" y="83.3" font-size="12" fill="#1a1a1a" textLength="12.5" lengthAdjust="spacingAndGlyphs">(S)</text>
<text x="628.5" y="106.6" font-size="12" fill="#1a1a1a" textLength="55" lengthAdjust="spacingAndGlyphs" font-family="'Liberation Sans','Noto Sans CJK JP',sans-serif">読み込み...</text>
<text x="687.3" y="106.3" font-size="12" fill="#1a1a1a" textLength="12" lengthAdjust="spacingAndGlyphs">(L)</text>
<text x="628.5" y="129.6" font-size="12" fill="#1a1a1a" textLength="56" lengthAdjust="spacingAndGlyphs" font-family="'Liberation Sans','Noto Sans CJK JP',sans-serif">定型を削除</text>
<path d="M776.5 121.5 v6 l3.2 -3z" fill="#000"/>
<rect x="628" y="141" width="160" height="1" fill="#e0e0e0" shape-rendering="crispEdges"/>
<text x="628.4" y="160.6" font-size="12" fill="#1a1a1a" textLength="132" lengthAdjust="spacingAndGlyphs">Golden NY-Sum Lon-Win</text>
<text x="628.4" y="183.7" font-size="12" fill="#1a1a1a" textLength="85.5" lengthAdjust="spacingAndGlyphs">Golden-Summer</text>
<text x="628.4" y="206.6" font-size="12" fill="#1a1a1a" textLength="77.5" lengthAdjust="spacingAndGlyphs">Golden-Winter</text>
<rect x="599.5" y="72.5" width="13" height="11" fill="#fff" stroke="#3a78c8"/>
<rect x="600" y="73" width="12" height="2" fill="#5a98e0" shape-rendering="crispEdges"/>
<path d="M601 78.5 h3 l2 -1.5 h3" stroke="#c02010" stroke-width="1" fill="none"/><path d="M601 81.5 h3" stroke="#18a018" stroke-width="1"/>
<rect x="606.5" y="77.5" width="10" height="9" fill="#5a90d8" stroke="#2a60b0"/>
<rect x="609" y="78" width="5" height="3" fill="#e8f0ff" shape-rendering="crispEdges"/>
<rect x="609" y="83" width="5" height="3" fill="#d0e0f8" shape-rendering="crispEdges"/>
<text x="37" y="94" font-size="12" fill="#000" textLength="61" lengthAdjust="spacingAndGlyphs">EURUSD,M1</text>
<rect x="17.5" y="82.5" width="10" height="8" fill="#f4f8ff" stroke="#4a7ae0" stroke-dasharray="1 1"/>
<path d="M19 87 l1.5 -2 l1.5 2 l1.5 -2 l1.5 2" stroke="#4a7ae0" stroke-width="0.9" fill="none"/>
<rect x="21.5" y="87.5" width="10" height="8" fill="#f4f8ff" stroke="#4a7ae0" stroke-dasharray="1 1"/>
<path d="M23 91 l1.5 2.5 l1.5 -2.5 l1.5 2.5 l1.5 -2.5" stroke="#4a7ae0" stroke-width="0.9" fill="none"/>
<defs><linearGradient id="gb" x1="0" y1="0" x2="0" y2="1"><stop offset="0" stop-color="#c6d9ef"/><stop offset="0.48" stop-color="#bcd2ea"/><stop offset="0.5" stop-color="#a4bedb"/><stop offset="1" stop-color="#b4cce6"/></linearGradient><linearGradient id="gr" x1="0" y1="0" x2="0" y2="1"><stop offset="0" stop-color="#e8aea4"/><stop offset="0.45" stop-color="#d98878"/><stop offset="0.5" stop-color="#c0452a"/><stop offset="1" stop-color="#d06a48"/></linearGradient></defs>
<rect x="989.5" y="80.5" width="31" height="17" rx="3" fill="url(#gb)" stroke="#5c7490"/>
<rect x="990.5" y="81.5" width="29" height="15" rx="2" fill="none" stroke="#fff" stroke-opacity="0.45"/>
<rect x="1023.5" y="80.5" width="31" height="17" rx="3" fill="url(#gb)" stroke="#5c7490"/>
<rect x="1024.5" y="81.5" width="29" height="15" rx="2" fill="none" stroke="#fff" stroke-opacity="0.45"/>
<rect x="1057.5" y="80.5" width="31" height="17" rx="3" fill="url(#gr)" stroke="#431422"/>
<rect x="1058.5" y="81.5" width="29" height="15" rx="2" fill="none" stroke="#fff" stroke-opacity="0.45"/>
<rect x="999.5" y="88.5" width="10" height="4" rx="1" fill="#f8f8f8" stroke="#5a6478"/>
<rect x="1034.5" y="85.5" width="8" height="6" fill="none" stroke="#f8f8f8" stroke-width="2.2"/>
<rect x="1033.5" y="84.5" width="10" height="8" rx="1" fill="none" stroke="#5a6478" stroke-width="0.8"/>
<rect x="1036.5" y="87.5" width="4" height="2" fill="#8aa8c8" stroke="#5a6478" stroke-width="0.8"/>
<path d="M1069 86 l7 5.6 M1076 86 l-7 5.6" stroke="#4a3030" stroke-width="3.6" stroke-linecap="square"/>
<path d="M1069 86 l7 5.6 M1076 86 l-7 5.6" stroke="#f8f8f8" stroke-width="2.1" stroke-linecap="square"/></svg>
</body></html>
